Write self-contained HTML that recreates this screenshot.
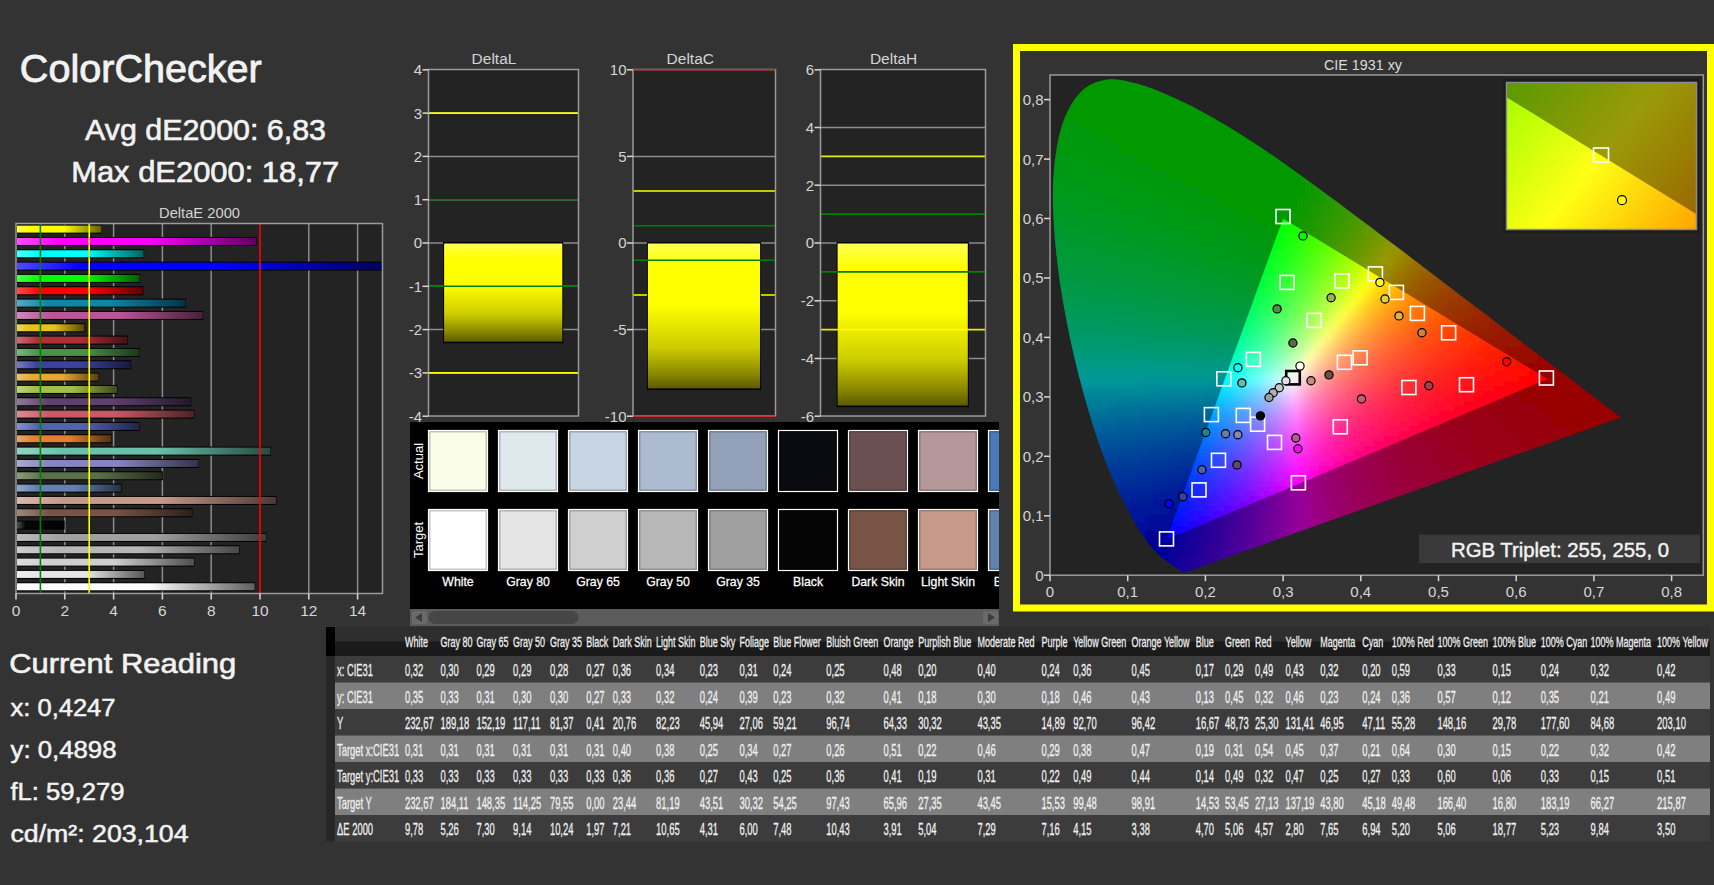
<!DOCTYPE html><html><head><meta charset="utf-8"><style>
html,body{margin:0;padding:0;background:#333333;overflow:hidden}
svg{display:block} text{font-family:"Liberation Sans", sans-serif}
</style></head><body>
<svg width="1714" height="885" viewBox="0 0 1714 885">
<rect width="1714" height="885" fill="#333333"/>
<text x="19.8" y="82.0" font-size="39.0" fill="#f2f2f2" textLength="242.0" lengthAdjust="spacingAndGlyphs" stroke="#f2f2f2" stroke-width="0.86">ColorChecker</text>
<text x="85.0" y="139.7" font-size="29.3" fill="#f2f2f2" textLength="241.0" lengthAdjust="spacingAndGlyphs" stroke="#f2f2f2" stroke-width="0.64">Avg dE2000: 6,83</text>
<text x="71.2" y="181.5" font-size="29.3" fill="#f2f2f2" textLength="268.0" lengthAdjust="spacingAndGlyphs" stroke="#f2f2f2" stroke-width="0.64">Max dE2000: 18,77</text>
<text x="199.5" y="217.5" font-size="15.5" fill="#d4d4d4" text-anchor="middle" textLength="81.0" lengthAdjust="spacingAndGlyphs">DeltaE 2000</text>
<rect x="16" y="223.5" width="366.5" height="370.0" fill="#232323"/>
<line x1="64.8" y1="223.5" x2="64.8" y2="593.5" stroke="#8c8c8c" stroke-width="1.5"/>
<line x1="113.6" y1="223.5" x2="113.6" y2="593.5" stroke="#8c8c8c" stroke-width="1.5"/>
<line x1="162.4" y1="223.5" x2="162.4" y2="593.5" stroke="#8c8c8c" stroke-width="1.5"/>
<line x1="211.2" y1="223.5" x2="211.2" y2="593.5" stroke="#8c8c8c" stroke-width="1.5"/>
<line x1="308.8" y1="223.5" x2="308.8" y2="593.5" stroke="#8c8c8c" stroke-width="1.5"/>
<line x1="357.6" y1="223.5" x2="357.6" y2="593.5" stroke="#8c8c8c" stroke-width="1.5"/>
<rect x="16" y="224.60" width="85.9" height="9" fill="#000"/>
<rect x="17" y="225.60" width="84.4" height="7" fill="url(#bg0)"/>
<rect x="16" y="236.93" width="240.6" height="9" fill="#000"/>
<rect x="17" y="237.93" width="239.1" height="7" fill="url(#bg1)"/>
<rect x="16" y="249.27" width="128.1" height="9" fill="#000"/>
<rect x="17" y="250.27" width="126.6" height="7" fill="url(#bg2)"/>
<rect x="16" y="261.60" width="366.5" height="9" fill="#000"/>
<rect x="17" y="262.60" width="365.0" height="7" fill="url(#bg3)"/>
<rect x="16" y="273.93" width="124.0" height="9" fill="#000"/>
<rect x="17" y="274.93" width="122.5" height="7" fill="url(#bg4)"/>
<rect x="16" y="286.27" width="127.4" height="9" fill="#000"/>
<rect x="17" y="287.27" width="125.9" height="7" fill="url(#bg5)"/>
<rect x="16" y="298.60" width="169.8" height="9" fill="#000"/>
<rect x="17" y="299.60" width="168.3" height="7" fill="url(#bg6)"/>
<rect x="16" y="310.93" width="187.2" height="9" fill="#000"/>
<rect x="17" y="311.93" width="185.7" height="7" fill="url(#bg7)"/>
<rect x="16" y="323.27" width="68.8" height="9" fill="#000"/>
<rect x="17" y="324.27" width="67.3" height="7" fill="url(#bg8)"/>
<rect x="16" y="335.60" width="112.0" height="9" fill="#000"/>
<rect x="17" y="336.60" width="110.5" height="7" fill="url(#bg9)"/>
<rect x="16" y="347.93" width="124.0" height="9" fill="#000"/>
<rect x="17" y="348.93" width="122.5" height="7" fill="url(#bg10)"/>
<rect x="16" y="360.27" width="115.2" height="9" fill="#000"/>
<rect x="17" y="361.27" width="113.7" height="7" fill="url(#bg11)"/>
<rect x="16" y="372.60" width="83.0" height="9" fill="#000"/>
<rect x="17" y="373.60" width="81.5" height="7" fill="url(#bg12)"/>
<rect x="16" y="384.93" width="101.8" height="9" fill="#000"/>
<rect x="17" y="385.93" width="100.3" height="7" fill="url(#bg13)"/>
<rect x="16" y="397.27" width="175.2" height="9" fill="#000"/>
<rect x="17" y="398.27" width="173.7" height="7" fill="url(#bg14)"/>
<rect x="16" y="409.60" width="178.4" height="9" fill="#000"/>
<rect x="17" y="410.60" width="176.9" height="7" fill="url(#bg15)"/>
<rect x="16" y="421.93" width="123.5" height="9" fill="#000"/>
<rect x="17" y="422.93" width="122.0" height="7" fill="url(#bg16)"/>
<rect x="16" y="434.27" width="95.9" height="9" fill="#000"/>
<rect x="17" y="435.27" width="94.4" height="7" fill="url(#bg17)"/>
<rect x="16" y="446.60" width="255.0" height="9" fill="#000"/>
<rect x="17" y="447.60" width="253.5" height="7" fill="url(#bg18)"/>
<rect x="16" y="458.93" width="183.0" height="9" fill="#000"/>
<rect x="17" y="459.93" width="181.5" height="7" fill="url(#bg19)"/>
<rect x="16" y="471.27" width="146.9" height="9" fill="#000"/>
<rect x="17" y="472.27" width="145.4" height="7" fill="url(#bg20)"/>
<rect x="16" y="483.60" width="105.7" height="9" fill="#000"/>
<rect x="17" y="484.60" width="104.2" height="7" fill="url(#bg21)"/>
<rect x="16" y="495.93" width="260.4" height="9" fill="#000"/>
<rect x="17" y="496.93" width="258.9" height="7" fill="url(#bg22)"/>
<rect x="16" y="508.27" width="176.4" height="9" fill="#000"/>
<rect x="17" y="509.27" width="174.9" height="7" fill="url(#bg23)"/>
<rect x="16" y="520.60" width="48.6" height="9" fill="#000"/>
<rect x="17" y="521.60" width="47.1" height="7" fill="url(#bg24)"/>
<rect x="16" y="532.93" width="250.4" height="9" fill="#000"/>
<rect x="17" y="533.93" width="248.9" height="7" fill="url(#bg25)"/>
<rect x="16" y="545.27" width="223.5" height="9" fill="#000"/>
<rect x="17" y="546.27" width="222.0" height="7" fill="url(#bg26)"/>
<rect x="16" y="557.60" width="178.6" height="9" fill="#000"/>
<rect x="17" y="558.60" width="177.1" height="7" fill="url(#bg27)"/>
<rect x="16" y="569.93" width="128.8" height="9" fill="#000"/>
<rect x="17" y="570.93" width="127.3" height="7" fill="url(#bg28)"/>
<rect x="16" y="582.27" width="239.1" height="9" fill="#000"/>
<rect x="17" y="583.27" width="237.6" height="7" fill="url(#bg29)"/>
<line x1="40.4" y1="223.5" x2="40.4" y2="593.5" stroke="#008000" stroke-width="1.6"/>
<line x1="89.2" y1="223.5" x2="89.2" y2="593.5" stroke="#ffff00" stroke-width="1.6"/>
<line x1="260.0" y1="223.5" x2="260.0" y2="593.5" stroke="#ff0000" stroke-width="1.6"/>
<rect x="16" y="223.5" width="366.5" height="370.0" fill="none" stroke="#9a9a9a" stroke-width="1.5"/>
<line x1="16.0" y1="593.5" x2="16.0" y2="599.5" stroke="#d8d8d8" stroke-width="1.5"/>
<text x="16.0" y="616.0" font-size="15.5" fill="#d6d6d6" text-anchor="middle">0</text>
<line x1="64.8" y1="593.5" x2="64.8" y2="599.5" stroke="#d8d8d8" stroke-width="1.5"/>
<text x="64.8" y="616.0" font-size="15.5" fill="#d6d6d6" text-anchor="middle">2</text>
<line x1="113.6" y1="593.5" x2="113.6" y2="599.5" stroke="#d8d8d8" stroke-width="1.5"/>
<text x="113.6" y="616.0" font-size="15.5" fill="#d6d6d6" text-anchor="middle">4</text>
<line x1="162.4" y1="593.5" x2="162.4" y2="599.5" stroke="#d8d8d8" stroke-width="1.5"/>
<text x="162.4" y="616.0" font-size="15.5" fill="#d6d6d6" text-anchor="middle">6</text>
<line x1="211.2" y1="593.5" x2="211.2" y2="599.5" stroke="#d8d8d8" stroke-width="1.5"/>
<text x="211.2" y="616.0" font-size="15.5" fill="#d6d6d6" text-anchor="middle">8</text>
<line x1="260.0" y1="593.5" x2="260.0" y2="599.5" stroke="#d8d8d8" stroke-width="1.5"/>
<text x="260.0" y="616.0" font-size="15.5" fill="#d6d6d6" text-anchor="middle">10</text>
<line x1="308.8" y1="593.5" x2="308.8" y2="599.5" stroke="#d8d8d8" stroke-width="1.5"/>
<text x="308.8" y="616.0" font-size="15.5" fill="#d6d6d6" text-anchor="middle">12</text>
<line x1="357.6" y1="593.5" x2="357.6" y2="599.5" stroke="#d8d8d8" stroke-width="1.5"/>
<text x="357.6" y="616.0" font-size="15.5" fill="#d6d6d6" text-anchor="middle">14</text>
<rect x="428.5" y="69.5" width="150.0" height="346.5" fill="#232323"/>
<text x="494.0" y="64.0" font-size="15.5" fill="#d4d4d4" text-anchor="middle">DeltaL</text>
<line x1="428.5" y1="113.1" x2="578.5" y2="113.1" stroke="#8c8c8c" stroke-width="1.5"/>
<line x1="428.5" y1="156.4" x2="578.5" y2="156.4" stroke="#8c8c8c" stroke-width="1.5"/>
<line x1="428.5" y1="199.7" x2="578.5" y2="199.7" stroke="#8c8c8c" stroke-width="1.5"/>
<line x1="428.5" y1="243.0" x2="578.5" y2="243.0" stroke="#8c8c8c" stroke-width="1.5"/>
<line x1="428.5" y1="286.3" x2="578.5" y2="286.3" stroke="#8c8c8c" stroke-width="1.5"/>
<line x1="428.5" y1="329.6" x2="578.5" y2="329.6" stroke="#8c8c8c" stroke-width="1.5"/>
<line x1="428.5" y1="372.9" x2="578.5" y2="372.9" stroke="#8c8c8c" stroke-width="1.5"/>
<line x1="428.5" y1="113.1" x2="578.5" y2="113.1" stroke="#ffff00" stroke-width="1.6"/>
<line x1="428.5" y1="372.9" x2="578.5" y2="372.9" stroke="#ffff00" stroke-width="1.6"/>
<rect x="443.1" y="242.0" width="120.2" height="101.2" fill="#000"/>
<rect x="444.1" y="243.5" width="118.2" height="98.2" fill="url(#dbar)"/>
<line x1="428.5" y1="199.7" x2="578.5" y2="199.7" stroke="#008000" stroke-width="1.6"/>
<line x1="428.5" y1="286.3" x2="578.5" y2="286.3" stroke="#008000" stroke-width="1.6"/>
<rect x="428.5" y="69.5" width="150.0" height="346.5" fill="none" stroke="#9a9a9a" stroke-width="1.5"/>
<line x1="422.5" y1="69.8" x2="428.5" y2="69.8" stroke="#d8d8d8" stroke-width="1.5"/>
<text x="422.0" y="75.2" font-size="15.0" fill="#d6d6d6" text-anchor="end">4</text>
<line x1="422.5" y1="113.1" x2="428.5" y2="113.1" stroke="#d8d8d8" stroke-width="1.5"/>
<text x="422.0" y="118.5" font-size="15.0" fill="#d6d6d6" text-anchor="end">3</text>
<line x1="422.5" y1="156.4" x2="428.5" y2="156.4" stroke="#d8d8d8" stroke-width="1.5"/>
<text x="422.0" y="161.8" font-size="15.0" fill="#d6d6d6" text-anchor="end">2</text>
<line x1="422.5" y1="199.7" x2="428.5" y2="199.7" stroke="#d8d8d8" stroke-width="1.5"/>
<text x="422.0" y="205.1" font-size="15.0" fill="#d6d6d6" text-anchor="end">1</text>
<line x1="422.5" y1="243.0" x2="428.5" y2="243.0" stroke="#d8d8d8" stroke-width="1.5"/>
<text x="422.0" y="248.4" font-size="15.0" fill="#d6d6d6" text-anchor="end">0</text>
<line x1="422.5" y1="286.3" x2="428.5" y2="286.3" stroke="#d8d8d8" stroke-width="1.5"/>
<text x="422.0" y="291.7" font-size="15.0" fill="#d6d6d6" text-anchor="end">-1</text>
<line x1="422.5" y1="329.6" x2="428.5" y2="329.6" stroke="#d8d8d8" stroke-width="1.5"/>
<text x="422.0" y="335.0" font-size="15.0" fill="#d6d6d6" text-anchor="end">-2</text>
<line x1="422.5" y1="372.9" x2="428.5" y2="372.9" stroke="#d8d8d8" stroke-width="1.5"/>
<text x="422.0" y="378.3" font-size="15.0" fill="#d6d6d6" text-anchor="end">-3</text>
<line x1="422.5" y1="416.2" x2="428.5" y2="416.2" stroke="#d8d8d8" stroke-width="1.5"/>
<text x="422.0" y="421.6" font-size="15.0" fill="#d6d6d6" text-anchor="end">-4</text>
<rect x="633" y="69.5" width="142.5" height="346.5" fill="#232323"/>
<text x="690.3" y="64.0" font-size="15.5" fill="#d4d4d4" text-anchor="middle">DeltaC</text>
<line x1="633" y1="156.4" x2="775.5" y2="156.4" stroke="#8c8c8c" stroke-width="1.5"/>
<line x1="633" y1="243.0" x2="775.5" y2="243.0" stroke="#8c8c8c" stroke-width="1.5"/>
<line x1="633" y1="329.6" x2="775.5" y2="329.6" stroke="#8c8c8c" stroke-width="1.5"/>
<line x1="633" y1="191.0" x2="775.5" y2="191.0" stroke="#ffff00" stroke-width="1.6"/>
<line x1="633" y1="295.0" x2="775.5" y2="295.0" stroke="#ffff00" stroke-width="1.6"/>
<rect x="646.9" y="242.0" width="114.2" height="147.9" fill="#000"/>
<rect x="647.9" y="243.5" width="112.2" height="144.9" fill="url(#dbar)"/>
<line x1="633" y1="225.7" x2="775.5" y2="225.7" stroke="#008000" stroke-width="1.6"/>
<line x1="633" y1="260.3" x2="775.5" y2="260.3" stroke="#008000" stroke-width="1.6"/>
<rect x="633" y="69.5" width="142.5" height="346.5" fill="none" stroke="#9a9a9a" stroke-width="1.5"/>
<line x1="633" y1="69.8" x2="775.5" y2="69.8" stroke="#c83030" stroke-width="1.6"/>
<line x1="633" y1="416.2" x2="775.5" y2="416.2" stroke="#c83030" stroke-width="1.6"/>
<line x1="627" y1="69.8" x2="633" y2="69.8" stroke="#d8d8d8" stroke-width="1.5"/>
<text x="626.5" y="75.2" font-size="15.0" fill="#d6d6d6" text-anchor="end">10</text>
<line x1="627" y1="156.4" x2="633" y2="156.4" stroke="#d8d8d8" stroke-width="1.5"/>
<text x="626.5" y="161.8" font-size="15.0" fill="#d6d6d6" text-anchor="end">5</text>
<line x1="627" y1="243.0" x2="633" y2="243.0" stroke="#d8d8d8" stroke-width="1.5"/>
<text x="626.5" y="248.4" font-size="15.0" fill="#d6d6d6" text-anchor="end">0</text>
<line x1="627" y1="329.6" x2="633" y2="329.6" stroke="#d8d8d8" stroke-width="1.5"/>
<text x="626.5" y="335.0" font-size="15.0" fill="#d6d6d6" text-anchor="end">-5</text>
<line x1="627" y1="416.2" x2="633" y2="416.2" stroke="#d8d8d8" stroke-width="1.5"/>
<text x="626.5" y="421.6" font-size="15.0" fill="#d6d6d6" text-anchor="end">-10</text>
<rect x="820.5" y="69.5" width="165.0" height="346.5" fill="#232323"/>
<text x="893.6" y="64.0" font-size="15.5" fill="#d4d4d4" text-anchor="middle">DeltaH</text>
<line x1="820.5" y1="127.5" x2="985.5" y2="127.5" stroke="#8c8c8c" stroke-width="1.5"/>
<line x1="820.5" y1="185.2" x2="985.5" y2="185.2" stroke="#8c8c8c" stroke-width="1.5"/>
<line x1="820.5" y1="243.0" x2="985.5" y2="243.0" stroke="#8c8c8c" stroke-width="1.5"/>
<line x1="820.5" y1="300.8" x2="985.5" y2="300.8" stroke="#8c8c8c" stroke-width="1.5"/>
<line x1="820.5" y1="358.5" x2="985.5" y2="358.5" stroke="#8c8c8c" stroke-width="1.5"/>
<rect x="836.6" y="242.0" width="132.2" height="165.1" fill="#000"/>
<rect x="837.6" y="243.5" width="130.2" height="162.1" fill="url(#dbar)"/>
<line x1="820.5" y1="156.4" x2="985.5" y2="156.4" stroke="#ffff00" stroke-width="1.6" opacity="0.9"/>
<line x1="820.5" y1="329.6" x2="985.5" y2="329.6" stroke="#ffff00" stroke-width="1.6" opacity="0.9"/>
<line x1="820.5" y1="214.1" x2="985.5" y2="214.1" stroke="#008000" stroke-width="1.6"/>
<line x1="820.5" y1="271.9" x2="985.5" y2="271.9" stroke="#008000" stroke-width="1.6"/>
<rect x="820.5" y="69.5" width="165.0" height="346.5" fill="none" stroke="#9a9a9a" stroke-width="1.5"/>
<line x1="814.5" y1="69.8" x2="820.5" y2="69.8" stroke="#d8d8d8" stroke-width="1.5"/>
<text x="814.0" y="75.2" font-size="15.0" fill="#d6d6d6" text-anchor="end">6</text>
<line x1="814.5" y1="127.5" x2="820.5" y2="127.5" stroke="#d8d8d8" stroke-width="1.5"/>
<text x="814.0" y="132.9" font-size="15.0" fill="#d6d6d6" text-anchor="end">4</text>
<line x1="814.5" y1="185.2" x2="820.5" y2="185.2" stroke="#d8d8d8" stroke-width="1.5"/>
<text x="814.0" y="190.7" font-size="15.0" fill="#d6d6d6" text-anchor="end">2</text>
<line x1="814.5" y1="243.0" x2="820.5" y2="243.0" stroke="#d8d8d8" stroke-width="1.5"/>
<text x="814.0" y="248.4" font-size="15.0" fill="#d6d6d6" text-anchor="end">0</text>
<line x1="814.5" y1="300.8" x2="820.5" y2="300.8" stroke="#d8d8d8" stroke-width="1.5"/>
<text x="814.0" y="306.1" font-size="15.0" fill="#d6d6d6" text-anchor="end">-2</text>
<line x1="814.5" y1="358.5" x2="820.5" y2="358.5" stroke="#d8d8d8" stroke-width="1.5"/>
<text x="814.0" y="363.9" font-size="15.0" fill="#d6d6d6" text-anchor="end">-4</text>
<line x1="814.5" y1="416.2" x2="820.5" y2="416.2" stroke="#d8d8d8" stroke-width="1.5"/>
<text x="814.0" y="421.6" font-size="15.0" fill="#d6d6d6" text-anchor="end">-6</text>
<rect x="410" y="422" width="589" height="187" fill="#000"/>
<g clip-path="url(#pclip)">
<rect x="428.5" y="430.5" width="59" height="61" fill="#fafee9" stroke="#ffffff" stroke-width="1.2"/>
<rect x="429.8" y="431.8" width="56.4" height="58.4" fill="none" stroke="#000" stroke-opacity="0.28" stroke-width="1.2"/>
<rect x="428.5" y="509.5" width="59" height="61" fill="#ffffff" stroke="#ffffff" stroke-width="1.2"/>
<rect x="429.8" y="510.8" width="56.4" height="58.4" fill="none" stroke="#000" stroke-opacity="0.28" stroke-width="1.2"/>
<text transform="translate(458,585.8) scale(0.975,1)" font-size="12.6" fill="#ffffff" stroke="#ffffff" stroke-width="0.25" text-anchor="middle">White</text>
<rect x="498.5" y="430.5" width="59" height="61" fill="#dfe9ec" stroke="#ffffff" stroke-width="1.2"/>
<rect x="499.8" y="431.8" width="56.4" height="58.4" fill="none" stroke="#000" stroke-opacity="0.28" stroke-width="1.2"/>
<rect x="498.5" y="509.5" width="59" height="61" fill="#e4e4e4" stroke="#ffffff" stroke-width="1.2"/>
<rect x="499.8" y="510.8" width="56.4" height="58.4" fill="none" stroke="#000" stroke-opacity="0.28" stroke-width="1.2"/>
<text transform="translate(528,585.8) scale(0.975,1)" font-size="12.6" fill="#ffffff" stroke="#ffffff" stroke-width="0.25" text-anchor="middle">Gray 80</text>
<rect x="568.5" y="430.5" width="59" height="61" fill="#c8d5e2" stroke="#ffffff" stroke-width="1.2"/>
<rect x="569.8" y="431.8" width="56.4" height="58.4" fill="none" stroke="#000" stroke-opacity="0.28" stroke-width="1.2"/>
<rect x="568.5" y="509.5" width="59" height="61" fill="#cfcfcf" stroke="#ffffff" stroke-width="1.2"/>
<rect x="569.8" y="510.8" width="56.4" height="58.4" fill="none" stroke="#000" stroke-opacity="0.28" stroke-width="1.2"/>
<text transform="translate(598,585.8) scale(0.975,1)" font-size="12.6" fill="#ffffff" stroke="#ffffff" stroke-width="0.25" text-anchor="middle">Gray 65</text>
<rect x="638.5" y="430.5" width="59" height="61" fill="#adbbd1" stroke="#ffffff" stroke-width="1.2"/>
<rect x="639.8" y="431.8" width="56.4" height="58.4" fill="none" stroke="#000" stroke-opacity="0.28" stroke-width="1.2"/>
<rect x="638.5" y="509.5" width="59" height="61" fill="#b8b8b8" stroke="#ffffff" stroke-width="1.2"/>
<rect x="639.8" y="510.8" width="56.4" height="58.4" fill="none" stroke="#000" stroke-opacity="0.28" stroke-width="1.2"/>
<text transform="translate(668,585.8) scale(0.975,1)" font-size="12.6" fill="#ffffff" stroke="#ffffff" stroke-width="0.25" text-anchor="middle">Gray 50</text>
<rect x="708.5" y="430.5" width="59" height="61" fill="#93a1b8" stroke="#ffffff" stroke-width="1.2"/>
<rect x="709.8" y="431.8" width="56.4" height="58.4" fill="none" stroke="#000" stroke-opacity="0.28" stroke-width="1.2"/>
<rect x="708.5" y="509.5" width="59" height="61" fill="#a0a0a0" stroke="#ffffff" stroke-width="1.2"/>
<rect x="709.8" y="510.8" width="56.4" height="58.4" fill="none" stroke="#000" stroke-opacity="0.28" stroke-width="1.2"/>
<text transform="translate(738,585.8) scale(0.975,1)" font-size="12.6" fill="#ffffff" stroke="#ffffff" stroke-width="0.25" text-anchor="middle">Gray 35</text>
<rect x="778.5" y="430.5" width="59" height="61" fill="#0a0b10" stroke="#ffffff" stroke-width="1.2"/>
<rect x="779.8" y="431.8" width="56.4" height="58.4" fill="none" stroke="#000" stroke-opacity="0.28" stroke-width="1.2"/>
<rect x="778.5" y="509.5" width="59" height="61" fill="#050505" stroke="#ffffff" stroke-width="1.2"/>
<rect x="779.8" y="510.8" width="56.4" height="58.4" fill="none" stroke="#000" stroke-opacity="0.28" stroke-width="1.2"/>
<text transform="translate(808,585.8) scale(0.975,1)" font-size="12.6" fill="#ffffff" stroke="#ffffff" stroke-width="0.25" text-anchor="middle">Black</text>
<rect x="848.5" y="430.5" width="59" height="61" fill="#6a5050" stroke="#ffffff" stroke-width="1.2"/>
<rect x="849.8" y="431.8" width="56.4" height="58.4" fill="none" stroke="#000" stroke-opacity="0.28" stroke-width="1.2"/>
<rect x="848.5" y="509.5" width="59" height="61" fill="#785446" stroke="#ffffff" stroke-width="1.2"/>
<rect x="849.8" y="510.8" width="56.4" height="58.4" fill="none" stroke="#000" stroke-opacity="0.28" stroke-width="1.2"/>
<text transform="translate(878,585.8) scale(0.975,1)" font-size="12.6" fill="#ffffff" stroke="#ffffff" stroke-width="0.25" text-anchor="middle">Dark Skin</text>
<rect x="918.5" y="430.5" width="59" height="61" fill="#b5989a" stroke="#ffffff" stroke-width="1.2"/>
<rect x="919.8" y="431.8" width="56.4" height="58.4" fill="none" stroke="#000" stroke-opacity="0.28" stroke-width="1.2"/>
<rect x="918.5" y="509.5" width="59" height="61" fill="#c8998a" stroke="#ffffff" stroke-width="1.2"/>
<rect x="919.8" y="510.8" width="56.4" height="58.4" fill="none" stroke="#000" stroke-opacity="0.28" stroke-width="1.2"/>
<text transform="translate(948,585.8) scale(0.975,1)" font-size="12.6" fill="#ffffff" stroke="#ffffff" stroke-width="0.25" text-anchor="middle">Light Skin</text>
<rect x="988.5" y="430.5" width="59" height="61" fill="#4a7ab8" stroke="#ffffff" stroke-width="1.2"/>
<rect x="989.8" y="431.8" width="56.4" height="58.4" fill="none" stroke="#000" stroke-opacity="0.28" stroke-width="1.2"/>
<rect x="988.5" y="509.5" width="59" height="61" fill="#6282b0" stroke="#ffffff" stroke-width="1.2"/>
<rect x="989.8" y="510.8" width="56.4" height="58.4" fill="none" stroke="#000" stroke-opacity="0.28" stroke-width="1.2"/>
<text transform="translate(1018,585.8) scale(0.975,1)" font-size="12.6" fill="#ffffff" stroke="#ffffff" stroke-width="0.25" text-anchor="middle">Blue Sky</text>
</g>
<text x="0.0" y="0.0" font-size="13.0" fill="#ffffff" text-anchor="middle" transform="translate(423,461) rotate(-90)">Actual</text>
<text x="0.0" y="0.0" font-size="13.0" fill="#ffffff" text-anchor="middle" transform="translate(422.8,540) rotate(-90)">Target</text>
<rect x="410" y="609" width="589" height="17" fill="#5c5c5c"/>
<rect x="412" y="611" width="15" height="13" rx="2" fill="#6a6a6a"/>
<path d="M415 617.5 L422 613 L422 622 Z" fill="#3c3c3c"/>
<rect x="983" y="611" width="15" height="13" rx="2" fill="#6a6a6a"/>
<path d="M995 617.5 L988 613 L988 622 Z" fill="#3c3c3c"/>
<rect x="428.5" y="611" width="150" height="13" rx="6.5" fill="#464646"/>
<rect x="1016.5" y="47.5" width="694" height="560.5" fill="none" stroke="#ffff00" stroke-width="7"/>
<text x="1363.0" y="69.9" font-size="15.5" fill="#dcdcdc" text-anchor="middle" textLength="78.0" lengthAdjust="spacingAndGlyphs">CIE 1931 xy</text>
<rect x="1050" y="75" width="653.3" height="500.20000000000005" fill="#232323"/>
<g clip-path="url(#hs)"><g filter="url(#blur)"><path fill="#009900" d="M1097 67h8v8h-8zM1105 67h8v8h-8zM1113 67h8v8h-8zM1121 67h8v8h-8zM1081 75h8v8h-8zM1089 75h8v8h-8zM1097 75h8v8h-8zM1105 75h8v8h-8zM1113 75h8v8h-8zM1121 75h8v8h-8zM1129 75h8v8h-8zM1137 75h8v8h-8zM1145 75h8v8h-8zM1153 75h8v8h-8zM1073 83h8v8h-8zM1081 83h8v8h-8zM1089 83h8v8h-8zM1097 83h8v8h-8zM1105 83h8v8h-8zM1113 83h8v8h-8zM1121 83h8v8h-8zM1129 83h8v8h-8zM1137 83h8v8h-8zM1145 83h8v8h-8zM1153 83h8v8h-8zM1161 83h8v8h-8zM1169 83h8v8h-8zM1065 91h8v8h-8zM1073 91h8v8h-8zM1081 91h8v8h-8zM1089 91h8v8h-8zM1097 91h8v8h-8zM1105 91h8v8h-8zM1113 91h8v8h-8zM1121 91h8v8h-8zM1129 91h8v8h-8zM1137 91h8v8h-8zM1145 91h8v8h-8zM1153 91h8v8h-8zM1161 91h8v8h-8zM1169 91h8v8h-8zM1177 91h8v8h-8zM1185 91h8v8h-8zM1081 99h8v8h-8zM1089 99h8v8h-8zM1097 99h8v8h-8zM1105 99h8v8h-8zM1113 99h8v8h-8zM1121 99h8v8h-8zM1129 99h8v8h-8zM1137 99h8v8h-8zM1145 99h8v8h-8zM1153 99h8v8h-8zM1161 99h8v8h-8zM1169 99h8v8h-8zM1177 99h8v8h-8zM1185 99h8v8h-8zM1193 99h8v8h-8zM1201 99h8v8h-8zM1097 107h8v8h-8zM1105 107h8v8h-8zM1113 107h8v8h-8zM1121 107h8v8h-8zM1129 107h8v8h-8zM1137 107h8v8h-8zM1145 107h8v8h-8zM1153 107h8v8h-8zM1161 107h8v8h-8zM1169 107h8v8h-8zM1177 107h8v8h-8zM1185 107h8v8h-8zM1193 107h8v8h-8zM1201 107h8v8h-8zM1209 107h8v8h-8zM1217 107h8v8h-8zM1105 115h8v8h-8zM1113 115h8v8h-8zM1121 115h8v8h-8zM1129 115h8v8h-8zM1137 115h8v8h-8zM1145 115h8v8h-8zM1153 115h8v8h-8zM1161 115h8v8h-8zM1169 115h8v8h-8zM1177 115h8v8h-8zM1185 115h8v8h-8zM1193 115h8v8h-8zM1201 115h8v8h-8zM1209 115h8v8h-8zM1217 115h8v8h-8zM1225 115h8v8h-8zM1233 115h8v8h-8zM1121 123h8v8h-8zM1129 123h8v8h-8zM1137 123h8v8h-8zM1145 123h8v8h-8zM1153 123h8v8h-8zM1161 123h8v8h-8zM1169 123h8v8h-8zM1177 123h8v8h-8zM1185 123h8v8h-8zM1193 123h8v8h-8zM1201 123h8v8h-8zM1209 123h8v8h-8zM1217 123h8v8h-8zM1225 123h8v8h-8zM1233 123h8v8h-8zM1241 123h8v8h-8zM1137 131h8v8h-8zM1145 131h8v8h-8zM1153 131h8v8h-8zM1161 131h8v8h-8zM1169 131h8v8h-8zM1177 131h8v8h-8zM1185 131h8v8h-8zM1193 131h8v8h-8zM1201 131h8v8h-8zM1209 131h8v8h-8zM1217 131h8v8h-8zM1225 131h8v8h-8zM1233 131h8v8h-8zM1241 131h8v8h-8zM1249 131h8v8h-8zM1257 131h8v8h-8zM1153 139h8v8h-8zM1161 139h8v8h-8zM1169 139h8v8h-8zM1177 139h8v8h-8zM1185 139h8v8h-8zM1193 139h8v8h-8zM1201 139h8v8h-8zM1209 139h8v8h-8zM1217 139h8v8h-8zM1225 139h8v8h-8zM1233 139h8v8h-8zM1241 139h8v8h-8zM1249 139h8v8h-8zM1257 139h8v8h-8zM1265 139h8v8h-8zM1161 147h8v8h-8zM1169 147h8v8h-8zM1177 147h8v8h-8zM1185 147h8v8h-8zM1193 147h8v8h-8zM1201 147h8v8h-8zM1209 147h8v8h-8zM1217 147h8v8h-8zM1225 147h8v8h-8zM1233 147h8v8h-8zM1241 147h8v8h-8zM1249 147h8v8h-8zM1257 147h8v8h-8zM1265 147h8v8h-8zM1273 147h8v8h-8zM1281 147h8v8h-8zM1177 155h8v8h-8zM1185 155h8v8h-8zM1193 155h8v8h-8zM1201 155h8v8h-8zM1209 155h8v8h-8zM1217 155h8v8h-8zM1225 155h8v8h-8zM1233 155h8v8h-8zM1241 155h8v8h-8zM1249 155h8v8h-8zM1257 155h8v8h-8zM1265 155h8v8h-8zM1273 155h8v8h-8zM1281 155h8v8h-8zM1289 155h8v8h-8zM1193 163h8v8h-8zM1201 163h8v8h-8zM1209 163h8v8h-8zM1217 163h8v8h-8zM1225 163h8v8h-8zM1233 163h8v8h-8zM1241 163h8v8h-8zM1249 163h8v8h-8zM1257 163h8v8h-8zM1265 163h8v8h-8zM1273 163h8v8h-8zM1281 163h8v8h-8zM1289 163h8v8h-8zM1297 163h8v8h-8zM1201 171h8v8h-8zM1209 171h8v8h-8zM1217 171h8v8h-8zM1225 171h8v8h-8zM1233 171h8v8h-8zM1241 171h8v8h-8zM1249 171h8v8h-8zM1257 171h8v8h-8zM1265 171h8v8h-8zM1273 171h8v8h-8zM1281 171h8v8h-8zM1289 171h8v8h-8zM1217 179h8v8h-8zM1225 179h8v8h-8zM1233 179h8v8h-8zM1241 179h8v8h-8zM1249 179h8v8h-8zM1257 179h8v8h-8zM1265 179h8v8h-8zM1273 179h8v8h-8zM1281 179h8v8h-8zM1289 179h8v8h-8zM1233 187h8v8h-8zM1241 187h8v8h-8zM1249 187h8v8h-8zM1257 187h8v8h-8zM1265 187h8v8h-8zM1273 187h8v8h-8zM1281 187h8v8h-8zM1289 187h8v8h-8zM1241 195h8v8h-8zM1249 195h8v8h-8zM1257 195h8v8h-8zM1265 195h8v8h-8zM1273 195h8v8h-8zM1281 195h8v8h-8zM1257 203h8v8h-8zM1265 203h8v8h-8zM1273 203h8v8h-8zM1281 203h8v8h-8zM1273 211h8v8h-8zM1281 211h8v8h-8z"/><path fill="#009903" d="M1065 99h8v8h-8zM1073 99h8v8h-8zM1073 107h8v8h-8zM1081 107h8v8h-8zM1089 107h8v8h-8zM1089 115h8v8h-8zM1097 115h8v8h-8zM1105 123h8v8h-8zM1113 123h8v8h-8zM1113 131h8v8h-8zM1121 131h8v8h-8zM1129 131h8v8h-8zM1129 139h8v8h-8zM1137 139h8v8h-8zM1145 139h8v8h-8zM1145 147h8v8h-8zM1153 147h8v8h-8zM1161 155h8v8h-8zM1169 155h8v8h-8zM1169 163h8v8h-8zM1177 163h8v8h-8zM1185 163h8v8h-8zM1185 171h8v8h-8zM1193 171h8v8h-8zM1201 179h8v8h-8zM1209 179h8v8h-8zM1217 187h8v8h-8zM1225 187h8v8h-8zM1225 195h8v8h-8zM1233 195h8v8h-8zM1241 203h8v8h-8zM1249 203h8v8h-8zM1257 211h8v8h-8zM1265 211h8v8h-8zM1273 219h8v8h-8z"/><path fill="#009906" d="M1057 107h8v8h-8zM1065 107h8v8h-8zM1065 115h8v8h-8zM1073 115h8v8h-8zM1081 115h8v8h-8zM1081 123h8v8h-8zM1089 123h8v8h-8zM1097 123h8v8h-8zM1097 131h8v8h-8zM1105 131h8v8h-8zM1113 139h8v8h-8zM1121 139h8v8h-8zM1121 147h8v8h-8zM1129 147h8v8h-8zM1137 147h8v8h-8zM1137 155h8v8h-8zM1145 155h8v8h-8zM1153 155h8v8h-8zM1153 163h8v8h-8zM1161 163h8v8h-8zM1169 171h8v8h-8zM1177 171h8v8h-8zM1185 179h8v8h-8zM1193 179h8v8h-8zM1201 187h8v8h-8zM1209 187h8v8h-8zM1217 195h8v8h-8zM1225 203h8v8h-8zM1233 203h8v8h-8zM1241 211h8v8h-8zM1249 211h8v8h-8zM1257 219h8v8h-8zM1265 219h8v8h-8zM1273 227h8v8h-8z"/><path fill="#009909" d="M1049 115h8v8h-8zM1057 115h8v8h-8zM1057 123h8v8h-8zM1065 123h8v8h-8zM1073 123h8v8h-8zM1073 131h8v8h-8zM1081 131h8v8h-8zM1089 131h8v8h-8zM1089 139h8v8h-8zM1097 139h8v8h-8zM1105 139h8v8h-8zM1105 147h8v8h-8zM1113 147h8v8h-8zM1121 155h8v8h-8zM1129 155h8v8h-8zM1137 163h8v8h-8zM1145 163h8v8h-8zM1153 171h8v8h-8zM1161 171h8v8h-8zM1169 179h8v8h-8zM1177 179h8v8h-8zM1185 187h8v8h-8zM1193 187h8v8h-8zM1201 195h8v8h-8zM1209 195h8v8h-8zM1209 203h8v8h-8zM1217 203h8v8h-8zM1225 211h8v8h-8zM1233 211h8v8h-8zM1241 219h8v8h-8zM1249 219h8v8h-8zM1257 227h8v8h-8zM1265 227h8v8h-8zM1273 235h8v8h-8z"/><path fill="#00990c" d="M1049 123h8v8h-8zM1049 131h8v8h-8zM1057 131h8v8h-8zM1065 131h8v8h-8zM1065 139h8v8h-8zM1073 139h8v8h-8zM1081 139h8v8h-8zM1081 147h8v8h-8zM1089 147h8v8h-8zM1097 147h8v8h-8zM1097 155h8v8h-8zM1105 155h8v8h-8zM1113 155h8v8h-8zM1113 163h8v8h-8zM1121 163h8v8h-8zM1129 163h8v8h-8zM1129 171h8v8h-8zM1137 171h8v8h-8zM1145 171h8v8h-8zM1145 179h8v8h-8zM1153 179h8v8h-8zM1161 179h8v8h-8zM1161 187h8v8h-8zM1169 187h8v8h-8zM1177 187h8v8h-8zM1177 195h8v8h-8zM1185 195h8v8h-8zM1193 195h8v8h-8zM1193 203h8v8h-8zM1201 203h8v8h-8zM1209 211h8v8h-8zM1217 211h8v8h-8zM1233 219h8v8h-8zM1249 227h8v8h-8zM1265 235h8v8h-8z"/><path fill="#00990f" d="M1049 139h8v8h-8zM1057 139h8v8h-8zM1057 147h8v8h-8zM1065 147h8v8h-8zM1073 147h8v8h-8zM1081 155h8v8h-8zM1089 155h8v8h-8zM1097 163h8v8h-8zM1105 163h8v8h-8zM1113 171h8v8h-8zM1121 171h8v8h-8zM1129 179h8v8h-8zM1137 179h8v8h-8zM1145 187h8v8h-8zM1153 187h8v8h-8zM1161 195h8v8h-8zM1169 195h8v8h-8zM1177 203h8v8h-8zM1185 203h8v8h-8zM1193 211h8v8h-8zM1201 211h8v8h-8zM1217 219h8v8h-8zM1225 219h8v8h-8zM1233 227h8v8h-8zM1241 227h8v8h-8zM1249 235h8v8h-8zM1257 235h8v8h-8zM1265 243h8v8h-8z"/><path fill="#009912" d="M1049 147h8v8h-8zM1057 155h8v8h-8zM1065 155h8v8h-8zM1073 155h8v8h-8zM1073 163h8v8h-8zM1081 163h8v8h-8zM1089 163h8v8h-8zM1089 171h8v8h-8zM1097 171h8v8h-8zM1105 171h8v8h-8zM1105 179h8v8h-8zM1113 179h8v8h-8zM1121 179h8v8h-8zM1129 187h8v8h-8zM1137 187h8v8h-8zM1145 195h8v8h-8zM1153 195h8v8h-8zM1161 203h8v8h-8zM1169 203h8v8h-8zM1177 211h8v8h-8zM1185 211h8v8h-8zM1201 219h8v8h-8zM1209 219h8v8h-8zM1217 227h8v8h-8zM1225 227h8v8h-8zM1233 235h8v8h-8zM1241 235h8v8h-8zM1249 243h8v8h-8zM1257 243h8v8h-8z"/><path fill="#009915" d="M1041 155h8v8h-8zM1049 155h8v8h-8zM1049 163h8v8h-8zM1057 163h8v8h-8zM1065 163h8v8h-8zM1065 171h8v8h-8zM1073 171h8v8h-8zM1081 171h8v8h-8zM1089 179h8v8h-8zM1097 179h8v8h-8zM1105 187h8v8h-8zM1113 187h8v8h-8zM1121 187h8v8h-8zM1121 195h8v8h-8zM1129 195h8v8h-8zM1137 195h8v8h-8zM1145 203h8v8h-8zM1153 203h8v8h-8zM1161 211h8v8h-8zM1169 211h8v8h-8zM1185 219h8v8h-8zM1193 219h8v8h-8zM1201 227h8v8h-8zM1209 227h8v8h-8zM1217 235h8v8h-8zM1225 235h8v8h-8zM1241 243h8v8h-8zM1257 251h8v8h-8zM1265 251h8v8h-8z"/><path fill="#009918" d="M1041 163h8v8h-8zM1049 171h8v8h-8zM1057 171h8v8h-8zM1065 179h8v8h-8zM1073 179h8v8h-8zM1081 179h8v8h-8zM1089 187h8v8h-8zM1097 187h8v8h-8zM1105 195h8v8h-8zM1113 195h8v8h-8zM1121 203h8v8h-8zM1129 203h8v8h-8zM1137 203h8v8h-8zM1145 211h8v8h-8zM1153 211h8v8h-8zM1161 219h8v8h-8zM1169 219h8v8h-8zM1177 219h8v8h-8zM1185 227h8v8h-8zM1193 227h8v8h-8zM1201 235h8v8h-8zM1209 235h8v8h-8zM1225 243h8v8h-8zM1233 243h8v8h-8zM1241 251h8v8h-8zM1249 251h8v8h-8z"/><path fill="#069900" d="M1305 163h8v8h-8zM1297 187h8v8h-8zM1289 203h8v8h-8z"/><path fill="#00991b" d="M1041 171h8v8h-8zM1041 179h8v8h-8zM1049 179h8v8h-8zM1057 179h8v8h-8zM1065 187h8v8h-8zM1073 187h8v8h-8zM1081 187h8v8h-8zM1081 195h8v8h-8zM1089 195h8v8h-8zM1097 195h8v8h-8zM1105 203h8v8h-8zM1113 203h8v8h-8zM1121 211h8v8h-8zM1129 211h8v8h-8zM1137 211h8v8h-8zM1145 219h8v8h-8zM1153 219h8v8h-8zM1169 227h8v8h-8zM1177 227h8v8h-8zM1185 235h8v8h-8zM1193 235h8v8h-8zM1209 243h8v8h-8zM1217 243h8v8h-8zM1225 251h8v8h-8zM1233 251h8v8h-8zM1249 259h8v8h-8zM1257 259h8v8h-8z"/><path fill="#039900" d="M1297 171h8v8h-8zM1297 179h8v8h-8zM1289 195h8v8h-8zM1281 219h8v8h-8z"/><path fill="#099900" d="M1305 171h8v8h-8zM1305 179h8v8h-8zM1297 195h8v8h-8zM1289 211h8v8h-8zM1289 219h8v8h-8z"/><path fill="#0f9900" d="M1313 171h8v8h-8zM1305 195h8v8h-8zM1297 211h8v8h-8z"/><path fill="#129900" d="M1313 179h8v8h-8zM1305 203h8v8h-8zM1297 219h8v8h-8z"/><path fill="#189900" d="M1321 179h8v8h-8zM1313 195h8v8h-8z"/><path fill="#00991e" d="M1041 187h8v8h-8zM1049 187h8v8h-8zM1057 187h8v8h-8zM1065 195h8v8h-8zM1073 195h8v8h-8zM1081 203h8v8h-8zM1089 203h8v8h-8zM1097 203h8v8h-8zM1105 211h8v8h-8zM1113 211h8v8h-8zM1129 219h8v8h-8zM1137 219h8v8h-8zM1145 227h8v8h-8zM1153 227h8v8h-8zM1161 227h8v8h-8zM1169 235h8v8h-8zM1177 235h8v8h-8zM1193 243h8v8h-8zM1201 243h8v8h-8zM1209 251h8v8h-8zM1217 251h8v8h-8zM1233 259h8v8h-8zM1241 259h8v8h-8zM1257 267h8v8h-8z"/><path fill="#0c9900" d="M1305 187h8v8h-8zM1297 203h8v8h-8z"/><path fill="#159900" d="M1313 187h8v8h-8zM1305 211h8v8h-8zM1297 227h8v8h-8z"/><path fill="#1b9900" d="M1321 187h8v8h-8zM1313 203h8v8h-8zM1305 219h8v8h-8z"/><path fill="#219900" d="M1329 187h8v8h-8zM1321 203h8v8h-8zM1313 219h8v8h-8z"/><path fill="#2a9900" d="M1337 187h8v8h-8zM1329 203h8v8h-8zM1321 219h8v8h-8zM1313 235h8v8h-8z"/><path fill="#009921" d="M1041 195h8v8h-8zM1049 195h8v8h-8zM1057 195h8v8h-8zM1057 203h8v8h-8zM1065 203h8v8h-8zM1073 203h8v8h-8zM1081 211h8v8h-8zM1089 211h8v8h-8zM1097 211h8v8h-8zM1105 219h8v8h-8zM1113 219h8v8h-8zM1121 219h8v8h-8zM1129 227h8v8h-8zM1137 227h8v8h-8zM1153 235h8v8h-8zM1161 235h8v8h-8zM1177 243h8v8h-8zM1185 243h8v8h-8zM1193 251h8v8h-8zM1201 251h8v8h-8zM1217 259h8v8h-8zM1225 259h8v8h-8zM1241 267h8v8h-8zM1249 267h8v8h-8z"/><path fill="#1e9900" d="M1321 195h8v8h-8zM1313 211h8v8h-8zM1305 227h8v8h-8z"/><path fill="#279900" d="M1329 195h8v8h-8zM1321 211h8v8h-8z"/><path fill="#2d9900" d="M1337 195h8v8h-8zM1329 211h8v8h-8zM1321 227h8v8h-8z"/><path fill="#369900" d="M1345 195h8v8h-8zM1337 211h8v8h-8zM1329 227h8v8h-8zM1321 243h8v8h-8z"/><path fill="#009924" d="M1041 203h8v8h-8zM1049 203h8v8h-8zM1057 211h8v8h-8zM1065 211h8v8h-8zM1073 211h8v8h-8zM1081 219h8v8h-8zM1089 219h8v8h-8zM1097 219h8v8h-8zM1105 227h8v8h-8zM1113 227h8v8h-8zM1121 227h8v8h-8zM1129 235h8v8h-8zM1137 235h8v8h-8zM1145 235h8v8h-8zM1153 243h8v8h-8zM1161 243h8v8h-8zM1169 243h8v8h-8zM1177 251h8v8h-8zM1185 251h8v8h-8zM1201 259h8v8h-8zM1209 259h8v8h-8zM1225 267h8v8h-8zM1233 267h8v8h-8zM1249 275h8v8h-8zM1257 275h8v8h-8z"/><path fill="#309900" d="M1337 203h8v8h-8z"/><path fill="#399900" d="M1345 203h8v8h-8zM1337 219h8v8h-8z"/><path fill="#429900" d="M1353 203h8v8h-8zM1345 219h8v8h-8zM1329 243h8v8h-8z"/><path fill="#009927" d="M1041 211h8v8h-8zM1049 211h8v8h-8zM1065 219h8v8h-8zM1073 219h8v8h-8zM1089 227h8v8h-8zM1097 227h8v8h-8zM1113 235h8v8h-8zM1121 235h8v8h-8zM1137 243h8v8h-8zM1145 243h8v8h-8zM1161 251h8v8h-8zM1169 251h8v8h-8zM1185 259h8v8h-8zM1193 259h8v8h-8zM1209 267h8v8h-8zM1217 267h8v8h-8zM1233 275h8v8h-8zM1241 275h8v8h-8z"/><path fill="#3f9900" d="M1345 211h8v8h-8zM1337 227h8v8h-8z"/><path fill="#489900" d="M1353 211h8v8h-8zM1345 227h8v8h-8z"/><path fill="#519900" d="M1361 211h8v8h-8zM1353 227h8v8h-8zM1337 251h8v8h-8z"/><path fill="#5a9900" d="M1369 211h8v8h-8zM1345 251h8v8h-8z"/><path fill="#00992a" d="M1041 219h8v8h-8zM1049 219h8v8h-8zM1057 219h8v8h-8zM1065 227h8v8h-8zM1073 227h8v8h-8zM1081 227h8v8h-8zM1089 235h8v8h-8zM1097 235h8v8h-8zM1105 235h8v8h-8zM1113 243h8v8h-8zM1121 243h8v8h-8zM1129 243h8v8h-8zM1145 251h8v8h-8zM1153 251h8v8h-8zM1169 259h8v8h-8zM1177 259h8v8h-8zM1193 267h8v8h-8zM1201 267h8v8h-8zM1217 275h8v8h-8zM1225 275h8v8h-8zM1249 283h8v8h-8z"/><path fill="#339900" d="M1329 219h8v8h-8zM1321 235h8v8h-8z"/><path fill="#4b9900" d="M1353 219h8v8h-8zM1337 243h8v8h-8z"/><path fill="#579900" d="M1361 219h8v8h-8zM1353 235h8v8h-8z"/><path fill="#609900" d="M1369 219h8v8h-8zM1353 243h8v8h-8z"/><path fill="#699900" d="M1377 219h8v8h-8zM1361 243h8v8h-8z"/><path fill="#00992d" d="M1041 227h8v8h-8zM1049 227h8v8h-8zM1057 227h8v8h-8zM1065 235h8v8h-8zM1073 235h8v8h-8zM1081 235h8v8h-8zM1097 243h8v8h-8zM1105 243h8v8h-8zM1121 251h8v8h-8zM1129 251h8v8h-8zM1137 251h8v8h-8zM1153 259h8v8h-8zM1161 259h8v8h-8zM1177 267h8v8h-8zM1185 267h8v8h-8zM1201 275h8v8h-8zM1209 275h8v8h-8zM1233 283h8v8h-8zM1241 283h8v8h-8z"/><path fill="#069906" d="M1281 227h8v8h-8z"/><path fill="#0c9903" d="M1289 227h8v8h-8z"/><path fill="#249900" d="M1313 227h8v8h-8z"/><path fill="#5d9900" d="M1361 227h8v8h-8z"/><path fill="#669900" d="M1369 227h8v8h-8zM1353 251h8v8h-8z"/><path fill="#6f9900" d="M1377 227h8v8h-8z"/><path fill="#7b9900" d="M1385 227h8v8h-8z"/><path fill="#009930" d="M1041 235h8v8h-8zM1049 235h8v8h-8zM1057 235h8v8h-8zM1073 243h8v8h-8zM1081 243h8v8h-8zM1089 243h8v8h-8zM1105 251h8v8h-8zM1113 251h8v8h-8zM1129 259h8v8h-8zM1137 259h8v8h-8zM1145 259h8v8h-8zM1161 267h8v8h-8zM1169 267h8v8h-8zM1185 275h8v8h-8zM1193 275h8v8h-8zM1217 283h8v8h-8zM1225 283h8v8h-8zM1249 291h8v8h-8z"/><path fill="#099909" d="M1281 235h8v8h-8z"/><path fill="#129906" d="M1289 235h8v8h-8z"/><path fill="#189903" d="M1297 235h8v8h-8z"/><path fill="#219903" d="M1305 235h8v8h-8z"/><path fill="#3c9900" d="M1329 235h8v8h-8z"/><path fill="#459900" d="M1337 235h8v8h-8z"/><path fill="#4e9900" d="M1345 235h8v8h-8z"/><path fill="#639900" d="M1361 235h8v8h-8z"/><path fill="#6c9900" d="M1369 235h8v8h-8zM1353 259h8v8h-8z"/><path fill="#789900" d="M1377 235h8v8h-8zM1361 259h8v8h-8z"/><path fill="#849900" d="M1385 235h8v8h-8z"/><path fill="#8d9900" d="M1393 235h8v8h-8zM1385 243h8v8h-8z"/><path fill="#999900" d="M1401 235h8v8h-8zM1393 243h8v8h-8z"/><path fill="#009936" d="M1041 243h8v8h-8zM1057 251h8v8h-8zM1065 251h8v8h-8zM1073 251h8v8h-8zM1089 259h8v8h-8zM1097 259h8v8h-8zM1105 259h8v8h-8zM1121 267h8v8h-8zM1129 267h8v8h-8zM1153 275h8v8h-8zM1161 275h8v8h-8zM1185 283h8v8h-8zM1193 283h8v8h-8zM1217 291h8v8h-8zM1225 291h8v8h-8zM1249 299h8v8h-8z"/><path fill="#009933" d="M1049 243h8v8h-8zM1057 243h8v8h-8zM1065 243h8v8h-8zM1081 251h8v8h-8zM1089 251h8v8h-8zM1097 251h8v8h-8zM1113 259h8v8h-8zM1121 259h8v8h-8zM1137 267h8v8h-8zM1145 267h8v8h-8zM1153 267h8v8h-8zM1169 275h8v8h-8zM1177 275h8v8h-8zM1201 283h8v8h-8zM1209 283h8v8h-8zM1233 291h8v8h-8zM1241 291h8v8h-8z"/><path fill="#03990f" d="M1273 243h8v8h-8z"/><path fill="#0c990c" d="M1281 243h8v8h-8z"/><path fill="#159909" d="M1289 243h8v8h-8z"/><path fill="#1e9909" d="M1297 243h8v8h-8z"/><path fill="#249906" d="M1305 243h8v8h-8z"/><path fill="#2d9903" d="M1313 243h8v8h-8z"/><path fill="#549900" d="M1345 243h8v8h-8z"/><path fill="#759900" d="M1369 243h8v8h-8z"/><path fill="#819900" d="M1377 243h8v8h-8z"/><path fill="#998d00" d="M1401 243h8v8h-8z"/><path fill="#998400" d="M1409 243h8v8h-8z"/><path fill="#009939" d="M1041 251h8v8h-8zM1049 251h8v8h-8zM1065 259h8v8h-8zM1073 259h8v8h-8zM1081 259h8v8h-8zM1097 267h8v8h-8zM1105 267h8v8h-8zM1113 267h8v8h-8zM1129 275h8v8h-8zM1137 275h8v8h-8zM1145 275h8v8h-8zM1161 283h8v8h-8zM1169 283h8v8h-8zM1177 283h8v8h-8zM1193 291h8v8h-8zM1201 291h8v8h-8zM1209 291h8v8h-8zM1233 299h8v8h-8zM1241 299h8v8h-8z"/><path fill="#069912" d="M1273 251h8v8h-8z"/><path fill="#0f990f" d="M1281 251h8v8h-8z"/><path fill="#18990f" d="M1289 251h8v8h-8z"/><path fill="#21990c" d="M1297 251h8v8h-8z"/><path fill="#2a9909" d="M1305 251h8v8h-8z"/><path fill="#339909" d="M1313 251h8v8h-8z"/><path fill="#3c9906" d="M1321 251h8v8h-8z"/><path fill="#459903" d="M1329 251h8v8h-8z"/><path fill="#729900" d="M1361 251h8v8h-8z"/><path fill="#7e9900" d="M1369 251h8v8h-8z"/><path fill="#8a9900" d="M1377 251h8v8h-8z"/><path fill="#969900" d="M1385 251h8v8h-8z"/><path fill="#999000" d="M1393 251h8v8h-8z"/><path fill="#998700" d="M1401 251h8v8h-8zM1393 259h8v8h-8z"/><path fill="#997b00" d="M1409 251h8v8h-8z"/><path fill="#997200" d="M1417 251h8v8h-8z"/><path fill="#00993c" d="M1049 259h8v8h-8zM1057 259h8v8h-8zM1073 267h8v8h-8zM1081 267h8v8h-8zM1089 267h8v8h-8zM1105 275h8v8h-8zM1113 275h8v8h-8zM1121 275h8v8h-8zM1145 283h8v8h-8zM1153 283h8v8h-8zM1177 291h8v8h-8zM1185 291h8v8h-8zM1217 299h8v8h-8zM1225 299h8v8h-8z"/><path fill="#039918" d="M1265 259h8v8h-8z"/><path fill="#099915" d="M1273 259h8v8h-8z"/><path fill="#129915" d="M1281 259h8v8h-8z"/><path fill="#1b9912" d="M1289 259h8v8h-8z"/><path fill="#24990f" d="M1297 259h8v8h-8z"/><path fill="#2d990f" d="M1305 259h8v8h-8z"/><path fill="#39990c" d="M1313 259h8v8h-8z"/><path fill="#429909" d="M1321 259h8v8h-8z"/><path fill="#4b9906" d="M1329 259h8v8h-8z"/><path fill="#579906" d="M1337 259h8v8h-8z"/><path fill="#639903" d="M1345 259h8v8h-8z"/><path fill="#879900" d="M1369 259h8v8h-8z"/><path fill="#939900" d="M1377 259h8v8h-8z"/><path fill="#999300" d="M1385 259h8v8h-8z"/><path fill="#997e00" d="M1401 259h8v8h-8zM1393 267h8v8h-8z"/><path fill="#997500" d="M1409 259h8v8h-8zM1401 267h8v8h-8zM1393 275h8v8h-8z"/><path fill="#996c00" d="M1417 259h8v8h-8zM1409 267h8v8h-8zM1401 275h8v8h-8z"/><path fill="#996300" d="M1425 259h8v8h-8z"/><path fill="#995d00" d="M1433 259h8v8h-8zM1425 267h8v8h-8zM1417 275h8v8h-8zM1409 283h8v8h-8zM1401 291h8v8h-8z"/><path fill="#00993f" d="M1049 267h8v8h-8zM1057 267h8v8h-8zM1065 267h8v8h-8zM1089 275h8v8h-8zM1097 275h8v8h-8zM1121 283h8v8h-8zM1129 283h8v8h-8zM1137 283h8v8h-8zM1161 291h8v8h-8zM1169 291h8v8h-8zM1193 299h8v8h-8zM1201 299h8v8h-8zM1209 299h8v8h-8zM1233 307h8v8h-8zM1241 307h8v8h-8z"/><path fill="#06991e" d="M1265 267h8v8h-8z"/><path fill="#0f991b" d="M1273 267h8v8h-8z"/><path fill="#189918" d="M1281 267h8v8h-8z"/><path fill="#219918" d="M1289 267h8v8h-8z"/><path fill="#2a9915" d="M1297 267h8v8h-8z"/><path fill="#339912" d="M1305 267h8v8h-8z"/><path fill="#3f990f" d="M1313 267h8v8h-8z"/><path fill="#48990f" d="M1321 267h8v8h-8z"/><path fill="#54990c" d="M1329 267h8v8h-8z"/><path fill="#5d9909" d="M1337 267h8v8h-8z"/><path fill="#699906" d="M1345 267h8v8h-8z"/><path fill="#759903" d="M1353 267h8v8h-8z"/><path fill="#819903" d="M1361 267h8v8h-8z"/><path fill="#909900" d="M1369 267h8v8h-8z"/><path fill="#999600" d="M1377 267h8v8h-8z"/><path fill="#998a00" d="M1385 267h8v8h-8zM1377 275h8v8h-8z"/><path fill="#996600" d="M1417 267h8v8h-8zM1409 275h8v8h-8zM1401 283h8v8h-8z"/><path fill="#995700" d="M1433 267h8v8h-8zM1425 275h8v8h-8zM1417 283h8v8h-8zM1409 291h8v8h-8z"/><path fill="#995100" d="M1441 267h8v8h-8zM1433 275h8v8h-8zM1425 283h8v8h-8zM1417 291h8v8h-8z"/><path fill="#009945" d="M1049 275h8v8h-8zM1073 283h8v8h-8zM1081 283h8v8h-8zM1089 283h8v8h-8zM1113 291h8v8h-8zM1121 291h8v8h-8zM1129 291h8v8h-8zM1153 299h8v8h-8zM1161 299h8v8h-8zM1169 299h8v8h-8zM1201 307h8v8h-8zM1209 307h8v8h-8zM1241 315h8v8h-8z"/><path fill="#009942" d="M1057 275h8v8h-8zM1065 275h8v8h-8zM1073 275h8v8h-8zM1081 275h8v8h-8zM1097 283h8v8h-8zM1105 283h8v8h-8zM1113 283h8v8h-8zM1137 291h8v8h-8zM1145 291h8v8h-8zM1153 291h8v8h-8zM1177 299h8v8h-8zM1185 299h8v8h-8zM1217 307h8v8h-8zM1225 307h8v8h-8z"/><path fill="#099921" d="M1265 275h8v8h-8z"/><path fill="#129921" d="M1273 275h8v8h-8z"/><path fill="#1b991e" d="M1281 275h8v8h-8z"/><path fill="#24991b" d="M1289 275h8v8h-8z"/><path fill="#30991b" d="M1297 275h8v8h-8z"/><path fill="#399918" d="M1305 275h8v8h-8z"/><path fill="#459915" d="M1313 275h8v8h-8z"/><path fill="#4e9912" d="M1321 275h8v8h-8z"/><path fill="#5a9912" d="M1329 275h8v8h-8z"/><path fill="#66990f" d="M1337 275h8v8h-8z"/><path fill="#72990c" d="M1345 275h8v8h-8z"/><path fill="#7e9909" d="M1353 275h8v8h-8z"/><path fill="#8d9906" d="M1361 275h8v8h-8z"/><path fill="#999903" d="M1369 275h8v8h-8z"/><path fill="#998100" d="M1385 275h8v8h-8z"/><path fill="#994b00" d="M1441 275h8v8h-8zM1433 283h8v8h-8zM1425 291h8v8h-8zM1417 299h8v8h-8z"/><path fill="#994800" d="M1449 275h8v8h-8zM1441 283h8v8h-8z"/><path fill="#009948" d="M1049 283h8v8h-8zM1057 283h8v8h-8zM1065 283h8v8h-8zM1089 291h8v8h-8zM1097 291h8v8h-8zM1105 291h8v8h-8zM1137 299h8v8h-8zM1145 299h8v8h-8zM1177 307h8v8h-8zM1185 307h8v8h-8zM1193 307h8v8h-8zM1225 315h8v8h-8zM1233 315h8v8h-8z"/><path fill="#03992a" d="M1257 283h8v8h-8z"/><path fill="#0c9927" d="M1265 283h8v8h-8z"/><path fill="#159924" d="M1273 283h8v8h-8z"/><path fill="#219924" d="M1281 283h8v8h-8z"/><path fill="#2a9921" d="M1289 283h8v8h-8z"/><path fill="#33991e" d="M1297 283h8v8h-8z"/><path fill="#3f991e" d="M1305 283h8v8h-8z"/><path fill="#4b991b" d="M1313 283h8v8h-8z"/><path fill="#579918" d="M1321 283h8v8h-8z"/><path fill="#639915" d="M1329 283h8v8h-8z"/><path fill="#6f9915" d="M1337 283h8v8h-8z"/><path fill="#7b9912" d="M1345 283h8v8h-8z"/><path fill="#8a990f" d="M1353 283h8v8h-8z"/><path fill="#96990c" d="M1361 283h8v8h-8z"/><path fill="#998d09" d="M1369 283h8v8h-8z"/><path fill="#998106" d="M1377 283h8v8h-8z"/><path fill="#997803" d="M1385 283h8v8h-8z"/><path fill="#996f00" d="M1393 283h8v8h-8z"/><path fill="#994200" d="M1449 283h8v8h-8zM1441 291h8v8h-8zM1433 299h8v8h-8z"/><path fill="#993f00" d="M1457 283h8v8h-8zM1425 307h8v8h-8z"/><path fill="#993900" d="M1465 283h8v8h-8zM1457 291h8v8h-8zM1449 299h8v8h-8zM1441 307h8v8h-8z"/><path fill="#00994e" d="M1049 291h8v8h-8zM1057 291h8v8h-8zM1089 299h8v8h-8zM1097 299h8v8h-8zM1105 299h8v8h-8zM1137 307h8v8h-8zM1145 307h8v8h-8zM1185 315h8v8h-8zM1193 315h8v8h-8zM1233 323h8v8h-8z"/><path fill="#00994b" d="M1065 291h8v8h-8zM1073 291h8v8h-8zM1081 291h8v8h-8zM1113 299h8v8h-8zM1121 299h8v8h-8zM1129 299h8v8h-8zM1153 307h8v8h-8zM1161 307h8v8h-8zM1169 307h8v8h-8zM1201 315h8v8h-8zM1209 315h8v8h-8zM1217 315h8v8h-8z"/><path fill="#06992d" d="M1257 291h8v8h-8z"/><path fill="#0f992d" d="M1265 291h8v8h-8z"/><path fill="#1b992a" d="M1273 291h8v8h-8z"/><path fill="#24992a" d="M1281 291h8v8h-8z"/><path fill="#309927" d="M1289 291h8v8h-8z"/><path fill="#399924" d="M1297 291h8v8h-8z"/><path fill="#459924" d="M1305 291h8v8h-8z"/><path fill="#519921" d="M1313 291h8v8h-8z"/><path fill="#5d991e" d="M1321 291h8v8h-8z"/><path fill="#69991b" d="M1329 291h8v8h-8z"/><path fill="#789918" d="M1337 291h8v8h-8z"/><path fill="#849918" d="M1345 291h8v8h-8z"/><path fill="#939915" d="M1353 291h8v8h-8z"/><path fill="#99900f" d="M1361 291h8v8h-8z"/><path fill="#99840c" d="M1369 291h8v8h-8z"/><path fill="#997809" d="M1377 291h8v8h-8z"/><path fill="#996f06" d="M1385 291h8v8h-8z"/><path fill="#996603" d="M1393 291h8v8h-8z"/><path fill="#994500" d="M1433 291h8v8h-8zM1425 299h8v8h-8z"/><path fill="#993c00" d="M1449 291h8v8h-8zM1441 299h8v8h-8zM1433 307h8v8h-8z"/><path fill="#993600" d="M1465 291h8v8h-8zM1457 299h8v8h-8z"/><path fill="#993300" d="M1473 291h8v8h-8zM1449 307h8v8h-8zM1441 315h8v8h-8z"/><path fill="#009954" d="M1049 299h8v8h-8zM1081 307h8v8h-8zM1089 307h8v8h-8zM1097 307h8v8h-8zM1105 307h8v8h-8zM1137 315h8v8h-8zM1145 315h8v8h-8zM1153 315h8v8h-8zM1193 323h8v8h-8zM1201 323h8v8h-8z"/><path fill="#009951" d="M1057 299h8v8h-8zM1065 299h8v8h-8zM1073 299h8v8h-8zM1081 299h8v8h-8zM1113 307h8v8h-8zM1121 307h8v8h-8zM1129 307h8v8h-8zM1161 315h8v8h-8zM1169 315h8v8h-8zM1177 315h8v8h-8zM1209 323h8v8h-8zM1217 323h8v8h-8zM1225 323h8v8h-8z"/><path fill="#099933" d="M1257 299h8v8h-8z"/><path fill="#159933" d="M1265 299h8v8h-8z"/><path fill="#1e9930" d="M1273 299h8v8h-8z"/><path fill="#2a9930" d="M1281 299h8v8h-8z"/><path fill="#36992d" d="M1289 299h8v8h-8z"/><path fill="#3f992a" d="M1297 299h8v8h-8z"/><path fill="#4b992a" d="M1305 299h8v8h-8z"/><path fill="#5a9927" d="M1313 299h8v8h-8z"/><path fill="#669924" d="M1321 299h8v8h-8z"/><path fill="#759921" d="M1329 299h8v8h-8z"/><path fill="#819921" d="M1337 299h8v8h-8z"/><path fill="#90991e" d="M1345 299h8v8h-8z"/><path fill="#99931b" d="M1353 299h8v8h-8z"/><path fill="#998415" d="M1361 299h8v8h-8z"/><path fill="#997b12" d="M1369 299h8v8h-8z"/><path fill="#996f0c" d="M1377 299h8v8h-8z"/><path fill="#996609" d="M1385 299h8v8h-8z"/><path fill="#996006" d="M1393 299h8v8h-8z"/><path fill="#995706" d="M1401 299h8v8h-8z"/><path fill="#995103" d="M1409 299h8v8h-8z"/><path fill="#993000" d="M1465 299h8v8h-8zM1457 307h8v8h-8zM1449 315h8v8h-8z"/><path fill="#992d00" d="M1473 299h8v8h-8zM1465 307h8v8h-8zM1457 315h8v8h-8z"/><path fill="#992a00" d="M1481 299h8v8h-8zM1473 307h8v8h-8zM1465 315h8v8h-8z"/><path fill="#009957" d="M1057 307h8v8h-8zM1065 307h8v8h-8zM1073 307h8v8h-8zM1113 315h8v8h-8zM1121 315h8v8h-8zM1129 315h8v8h-8zM1169 323h8v8h-8zM1177 323h8v8h-8zM1185 323h8v8h-8zM1225 331h8v8h-8zM1233 331h8v8h-8z"/><path fill="#03993c" d="M1249 307h8v8h-8z"/><path fill="#0f993c" d="M1257 307h8v8h-8z"/><path fill="#189939" d="M1265 307h8v8h-8z"/><path fill="#249939" d="M1273 307h8v8h-8z"/><path fill="#309936" d="M1281 307h8v8h-8z"/><path fill="#3c9933" d="M1289 307h8v8h-8z"/><path fill="#489933" d="M1297 307h8v8h-8z"/><path fill="#549930" d="M1305 307h8v8h-8z"/><path fill="#63992d" d="M1313 307h8v8h-8z"/><path fill="#6f992d" d="M1321 307h8v8h-8z"/><path fill="#7e992a" d="M1329 307h8v8h-8z"/><path fill="#8d9927" d="M1337 307h8v8h-8z"/><path fill="#999624" d="M1345 307h8v8h-8z"/><path fill="#99871e" d="M1353 307h8v8h-8z"/><path fill="#997b18" d="M1361 307h8v8h-8z"/><path fill="#996f15" d="M1369 307h8v8h-8z"/><path fill="#996612" d="M1377 307h8v8h-8z"/><path fill="#99600f" d="M1385 307h8v8h-8z"/><path fill="#99570c" d="M1393 307h8v8h-8z"/><path fill="#995109" d="M1401 307h8v8h-8z"/><path fill="#994b06" d="M1409 307h8v8h-8z"/><path fill="#994503" d="M1417 307h8v8h-8z"/><path fill="#992700" d="M1481 307h8v8h-8zM1473 315h8v8h-8zM1457 323h8v8h-8z"/><path fill="#992400" d="M1489 307h8v8h-8zM1481 315h8v8h-8zM1465 323h8v8h-8z"/><path fill="#00995d" d="M1057 315h8v8h-8zM1065 315h8v8h-8zM1073 315h8v8h-8zM1113 323h8v8h-8zM1121 323h8v8h-8zM1129 323h8v8h-8zM1137 323h8v8h-8zM1185 331h8v8h-8zM1193 331h8v8h-8zM1201 331h8v8h-8z"/><path fill="#00995a" d="M1081 315h8v8h-8zM1089 315h8v8h-8zM1097 315h8v8h-8zM1105 315h8v8h-8zM1145 323h8v8h-8zM1153 323h8v8h-8zM1161 323h8v8h-8zM1209 331h8v8h-8zM1217 331h8v8h-8z"/><path fill="#099945" d="M1249 315h8v8h-8z"/><path fill="#129942" d="M1257 315h8v8h-8z"/><path fill="#1e9942" d="M1265 315h8v8h-8z"/><path fill="#2a993f" d="M1273 315h8v8h-8z"/><path fill="#36993c" d="M1281 315h8v8h-8z"/><path fill="#42993c" d="M1289 315h8v8h-8z"/><path fill="#4e9939" d="M1297 315h8v8h-8z"/><path fill="#5d9939" d="M1305 315h8v8h-8z"/><path fill="#6c9936" d="M1313 315h8v8h-8z"/><path fill="#7b9933" d="M1321 315h8v8h-8z"/><path fill="#8a9930" d="M1329 315h8v8h-8z"/><path fill="#999930" d="M1337 315h8v8h-8z"/><path fill="#998a27" d="M1345 315h8v8h-8z"/><path fill="#997e21" d="M1353 315h8v8h-8z"/><path fill="#99721e" d="M1361 315h8v8h-8z"/><path fill="#996918" d="M1369 315h8v8h-8z"/><path fill="#996015" d="M1377 315h8v8h-8z"/><path fill="#995712" d="M1385 315h8v8h-8z"/><path fill="#99510f" d="M1393 315h8v8h-8z"/><path fill="#994b0c" d="M1401 315h8v8h-8z"/><path fill="#994509" d="M1409 315h8v8h-8z"/><path fill="#993f06" d="M1417 315h8v8h-8z"/><path fill="#993c03" d="M1425 315h8v8h-8z"/><path fill="#993603" d="M1433 315h8v8h-8z"/><path fill="#992100" d="M1489 315h8v8h-8zM1473 323h8v8h-8zM1481 323h8v8h-8zM1465 331h8v8h-8z"/><path fill="#991e00" d="M1497 315h8v8h-8zM1489 323h8v8h-8zM1473 331h8v8h-8z"/><path fill="#991b00" d="M1505 315h8v8h-8zM1497 323h8v8h-8zM1481 331h8v8h-8zM1489 331h8v8h-8z"/><path fill="#009963" d="M1057 323h8v8h-8zM1065 323h8v8h-8zM1073 323h8v8h-8zM1129 331h8v8h-8zM1137 331h8v8h-8zM1145 331h8v8h-8zM1201 339h8v8h-8zM1209 339h8v8h-8zM1217 339h8v8h-8z"/><path fill="#009960" d="M1081 323h8v8h-8zM1089 323h8v8h-8zM1097 323h8v8h-8zM1105 323h8v8h-8zM1153 331h8v8h-8zM1161 331h8v8h-8zM1169 331h8v8h-8zM1177 331h8v8h-8zM1225 339h8v8h-8zM1233 339h8v8h-8z"/><path fill="#03994e" d="M1241 323h8v8h-8z"/><path fill="#0c994b" d="M1249 323h8v8h-8z"/><path fill="#18994b" d="M1257 323h8v8h-8z"/><path fill="#249948" d="M1265 323h8v8h-8z"/><path fill="#309948" d="M1273 323h8v8h-8z"/><path fill="#3c9945" d="M1281 323h8v8h-8z"/><path fill="#4b9945" d="M1289 323h8v8h-8z"/><path fill="#579942" d="M1297 323h8v8h-8z"/><path fill="#66993f" d="M1305 323h8v8h-8z"/><path fill="#75993f" d="M1313 323h8v8h-8z"/><path fill="#84993c" d="M1321 323h8v8h-8z"/><path fill="#969939" d="M1329 323h8v8h-8z"/><path fill="#998d33" d="M1337 323h8v8h-8z"/><path fill="#997e2d" d="M1345 323h8v8h-8z"/><path fill="#997227" d="M1353 323h8v8h-8z"/><path fill="#996921" d="M1361 323h8v8h-8z"/><path fill="#99601b" d="M1369 323h8v8h-8z"/><path fill="#995718" d="M1377 323h8v8h-8z"/><path fill="#995115" d="M1385 323h8v8h-8z"/><path fill="#994b12" d="M1393 323h8v8h-8z"/><path fill="#99450f" d="M1401 323h8v8h-8z"/><path fill="#993f0c" d="M1409 323h8v8h-8z"/><path fill="#993909" d="M1417 323h8v8h-8z"/><path fill="#993606" d="M1425 323h8v8h-8z"/><path fill="#993306" d="M1433 323h8v8h-8z"/><path fill="#992d03" d="M1441 323h8v8h-8z"/><path fill="#992a03" d="M1449 323h8v8h-8z"/><path fill="#991800" d="M1505 323h8v8h-8zM1513 323h8v8h-8zM1497 331h8v8h-8zM1481 339h8v8h-8zM1489 339h8v8h-8z"/><path fill="#009969" d="M1057 331h8v8h-8zM1065 331h8v8h-8zM1073 331h8v8h-8zM1081 331h8v8h-8zM1089 331h8v8h-8zM1145 339h8v8h-8zM1153 339h8v8h-8zM1161 339h8v8h-8zM1169 339h8v8h-8z"/><path fill="#009966" d="M1097 331h8v8h-8zM1105 331h8v8h-8zM1113 331h8v8h-8zM1121 331h8v8h-8zM1177 339h8v8h-8zM1185 339h8v8h-8zM1193 339h8v8h-8z"/><path fill="#069957" d="M1241 331h8v8h-8z"/><path fill="#129954" d="M1249 331h8v8h-8z"/><path fill="#1e9954" d="M1257 331h8v8h-8z"/><path fill="#2a9951" d="M1265 331h8v8h-8z"/><path fill="#369951" d="M1273 331h8v8h-8z"/><path fill="#45994e" d="M1281 331h8v8h-8z"/><path fill="#51994e" d="M1289 331h8v8h-8z"/><path fill="#60994b" d="M1297 331h8v8h-8z"/><path fill="#729948" d="M1305 331h8v8h-8z"/><path fill="#819948" d="M1313 331h8v8h-8z"/><path fill="#939945" d="M1321 331h8v8h-8z"/><path fill="#99903f" d="M1329 331h8v8h-8z"/><path fill="#998136" d="M1337 331h8v8h-8z"/><path fill="#997530" d="M1345 331h8v8h-8z"/><path fill="#99692a" d="M1353 331h8v8h-8z"/><path fill="#996024" d="M1361 331h8v8h-8z"/><path fill="#995721" d="M1369 331h8v8h-8z"/><path fill="#99511b" d="M1377 331h8v8h-8z"/><path fill="#994818" d="M1385 331h8v8h-8z"/><path fill="#994215" d="M1393 331h8v8h-8z"/><path fill="#993f12" d="M1401 331h8v8h-8z"/><path fill="#99390f" d="M1409 331h8v8h-8z"/><path fill="#99360c" d="M1417 331h8v8h-8z"/><path fill="#993009" d="M1425 331h8v8h-8z"/><path fill="#992d09" d="M1433 331h8v8h-8z"/><path fill="#992a06" d="M1441 331h8v8h-8z"/><path fill="#992703" d="M1449 331h8v8h-8z"/><path fill="#992403" d="M1457 331h8v8h-8z"/><path fill="#991500" d="M1505 331h8v8h-8zM1513 331h8v8h-8zM1497 339h8v8h-8z"/><path fill="#991200" d="M1521 331h8v8h-8zM1505 339h8v8h-8zM1513 339h8v8h-8zM1489 347h8v8h-8zM1497 347h8v8h-8z"/><path fill="#009972" d="M1057 339h8v8h-8zM1065 339h8v8h-8zM1137 347h8v8h-8zM1145 347h8v8h-8zM1153 347h8v8h-8zM1161 347h8v8h-8zM1169 347h8v8h-8z"/><path fill="#00996f" d="M1073 339h8v8h-8zM1081 339h8v8h-8zM1089 339h8v8h-8zM1097 339h8v8h-8zM1105 339h8v8h-8zM1177 347h8v8h-8zM1185 347h8v8h-8zM1193 347h8v8h-8zM1201 347h8v8h-8z"/><path fill="#00996c" d="M1113 339h8v8h-8zM1121 339h8v8h-8zM1129 339h8v8h-8zM1137 339h8v8h-8zM1209 347h8v8h-8zM1217 347h8v8h-8zM1225 347h8v8h-8z"/><path fill="#099960" d="M1241 339h8v8h-8z"/><path fill="#18995d" d="M1249 339h8v8h-8z"/><path fill="#24995d" d="M1257 339h8v8h-8z"/><path fill="#30995a" d="M1265 339h8v8h-8z"/><path fill="#3f995a" d="M1273 339h8v8h-8z"/><path fill="#4e9957" d="M1281 339h8v8h-8z"/><path fill="#5d9957" d="M1289 339h8v8h-8z"/><path fill="#6c9954" d="M1297 339h8v8h-8z"/><path fill="#7b9954" d="M1305 339h8v8h-8z"/><path fill="#8d9951" d="M1313 339h8v8h-8z"/><path fill="#99934e" d="M1321 339h8v8h-8z"/><path fill="#998142" d="M1329 339h8v8h-8z"/><path fill="#997539" d="M1337 339h8v8h-8z"/><path fill="#996933" d="M1345 339h8v8h-8z"/><path fill="#99602d" d="M1353 339h8v8h-8z"/><path fill="#995727" d="M1361 339h8v8h-8z"/><path fill="#995124" d="M1369 339h8v8h-8z"/><path fill="#99481e" d="M1377 339h8v8h-8z"/><path fill="#99421b" d="M1385 339h8v8h-8z"/><path fill="#993c18" d="M1393 339h8v8h-8z"/><path fill="#993915" d="M1401 339h8v8h-8z"/><path fill="#993312" d="M1409 339h8v8h-8z"/><path fill="#99300f" d="M1417 339h8v8h-8z"/><path fill="#992d0c" d="M1425 339h8v8h-8z"/><path fill="#992a0c" d="M1433 339h8v8h-8z"/><path fill="#992709" d="M1441 339h8v8h-8z"/><path fill="#992406" d="M1449 339h8v8h-8z"/><path fill="#992106" d="M1457 339h8v8h-8z"/><path fill="#991e03" d="M1465 339h8v8h-8z"/><path fill="#991b03" d="M1473 339h8v8h-8z"/><path fill="#990f00" d="M1521 339h8v8h-8zM1529 339h8v8h-8zM1505 347h8v8h-8zM1513 347h8v8h-8z"/><path fill="#990c00" d="M1537 339h8v8h-8zM1521 347h8v8h-8zM1529 347h8v8h-8zM1505 355h8v8h-8zM1513 355h8v8h-8z"/><path fill="#009978" d="M1065 347h8v8h-8zM1073 347h8v8h-8zM1081 347h8v8h-8zM1089 347h8v8h-8zM1193 355h8v8h-8zM1201 355h8v8h-8zM1209 355h8v8h-8zM1217 355h8v8h-8z"/><path fill="#009975" d="M1097 347h8v8h-8zM1105 347h8v8h-8zM1113 347h8v8h-8zM1121 347h8v8h-8zM1129 347h8v8h-8zM1225 355h8v8h-8z"/><path fill="#039969" d="M1233 347h8v8h-8z"/><path fill="#0f9969" d="M1241 347h8v8h-8z"/><path fill="#1b9969" d="M1249 347h8v8h-8z"/><path fill="#2a9966" d="M1257 347h8v8h-8z"/><path fill="#399966" d="M1265 347h8v8h-8z"/><path fill="#489966" d="M1273 347h8v8h-8z"/><path fill="#579963" d="M1281 347h8v8h-8z"/><path fill="#669963" d="M1289 347h8v8h-8z"/><path fill="#789960" d="M1297 347h8v8h-8z"/><path fill="#8a9960" d="M1305 347h8v8h-8z"/><path fill="#99965d" d="M1313 347h8v8h-8z"/><path fill="#998451" d="M1321 347h8v8h-8z"/><path fill="#997545" d="M1329 347h8v8h-8z"/><path fill="#99693f" d="M1337 347h8v8h-8z"/><path fill="#996036" d="M1345 347h8v8h-8z"/><path fill="#995730" d="M1353 347h8v8h-8z"/><path fill="#994e2a" d="M1361 347h8v8h-8z"/><path fill="#994827" d="M1369 347h8v8h-8z"/><path fill="#994221" d="M1377 347h8v8h-8z"/><path fill="#993c1e" d="M1385 347h8v8h-8z"/><path fill="#99361b" d="M1393 347h8v8h-8z"/><path fill="#993318" d="M1401 347h8v8h-8z"/><path fill="#993015" d="M1409 347h8v8h-8z"/><path fill="#992a12" d="M1417 347h8v8h-8z"/><path fill="#99270f" d="M1425 347h8v8h-8z"/><path fill="#99240c" d="M1433 347h8v8h-8z"/><path fill="#99210c" d="M1441 347h8v8h-8z"/><path fill="#991e09" d="M1449 347h8v8h-8z"/><path fill="#991b06" d="M1457 347h8v8h-8zM1465 347h8v8h-8z"/><path fill="#991803" d="M1473 347h8v8h-8z"/><path fill="#991503" d="M1481 347h8v8h-8z"/><path fill="#990900" d="M1537 347h8v8h-8zM1545 347h8v8h-8zM1521 355h8v8h-8zM1529 355h8v8h-8zM1513 363h8v8h-8z"/><path fill="#009981" d="M1065 355h8v8h-8zM1073 355h8v8h-8zM1081 355h8v8h-8zM1225 363h8v8h-8z"/><path fill="#00997e" d="M1089 355h8v8h-8zM1097 355h8v8h-8zM1105 355h8v8h-8zM1113 355h8v8h-8zM1121 355h8v8h-8zM1129 355h8v8h-8zM1137 355h8v8h-8z"/><path fill="#00997b" d="M1145 355h8v8h-8zM1153 355h8v8h-8zM1161 355h8v8h-8zM1169 355h8v8h-8zM1177 355h8v8h-8zM1185 355h8v8h-8z"/><path fill="#099975" d="M1233 355h8v8h-8z"/><path fill="#159975" d="M1241 355h8v8h-8z"/><path fill="#249975" d="M1249 355h8v8h-8z"/><path fill="#309972" d="M1257 355h8v8h-8z"/><path fill="#3f9972" d="M1265 355h8v8h-8z"/><path fill="#519972" d="M1273 355h8v8h-8z"/><path fill="#60996f" d="M1281 355h8v8h-8z"/><path fill="#72996f" d="M1289 355h8v8h-8z"/><path fill="#84996f" d="M1297 355h8v8h-8z"/><path fill="#99996c" d="M1305 355h8v8h-8z"/><path fill="#998760" d="M1313 355h8v8h-8z"/><path fill="#997854" d="M1321 355h8v8h-8z"/><path fill="#996c4b" d="M1329 355h8v8h-8z"/><path fill="#996042" d="M1337 355h8v8h-8z"/><path fill="#995739" d="M1345 355h8v8h-8z"/><path fill="#994e33" d="M1353 355h8v8h-8z"/><path fill="#99482d" d="M1361 355h8v8h-8z"/><path fill="#99422a" d="M1369 355h8v8h-8z"/><path fill="#993c24" d="M1377 355h8v8h-8z"/><path fill="#993621" d="M1385 355h8v8h-8z"/><path fill="#99331e" d="M1393 355h8v8h-8z"/><path fill="#992d1b" d="M1401 355h8v8h-8z"/><path fill="#992a18" d="M1409 355h8v8h-8z"/><path fill="#992715" d="M1417 355h8v8h-8z"/><path fill="#992412" d="M1425 355h8v8h-8z"/><path fill="#99210f" d="M1433 355h8v8h-8z"/><path fill="#991e0c" d="M1441 355h8v8h-8z"/><path fill="#991b0c" d="M1449 355h8v8h-8z"/><path fill="#991809" d="M1457 355h8v8h-8z"/><path fill="#991509" d="M1465 355h8v8h-8z"/><path fill="#991506" d="M1473 355h8v8h-8z"/><path fill="#991206" d="M1481 355h8v8h-8z"/><path fill="#990f03" d="M1489 355h8v8h-8zM1497 355h8v8h-8z"/><path fill="#990600" d="M1537 355h8v8h-8zM1545 355h8v8h-8zM1553 355h8v8h-8zM1521 363h8v8h-8zM1529 363h8v8h-8zM1537 363h8v8h-8z"/><path fill="#00998a" d="M1065 363h8v8h-8zM1073 363h8v8h-8zM1081 363h8v8h-8z"/><path fill="#009987" d="M1089 363h8v8h-8zM1097 363h8v8h-8zM1105 363h8v8h-8zM1113 363h8v8h-8zM1121 363h8v8h-8zM1129 363h8v8h-8zM1137 363h8v8h-8zM1145 363h8v8h-8zM1153 363h8v8h-8zM1161 363h8v8h-8z"/><path fill="#009984" d="M1169 363h8v8h-8zM1177 363h8v8h-8zM1185 363h8v8h-8zM1193 363h8v8h-8zM1201 363h8v8h-8zM1209 363h8v8h-8zM1217 363h8v8h-8z"/><path fill="#0c9981" d="M1233 363h8v8h-8z"/><path fill="#1b9981" d="M1241 363h8v8h-8z"/><path fill="#2a9981" d="M1249 363h8v8h-8z"/><path fill="#399981" d="M1257 363h8v8h-8z"/><path fill="#489981" d="M1265 363h8v8h-8z"/><path fill="#5a997e" d="M1273 363h8v8h-8z"/><path fill="#6c997e" d="M1281 363h8v8h-8z"/><path fill="#81997e" d="M1289 363h8v8h-8z"/><path fill="#93997e" d="M1297 363h8v8h-8z"/><path fill="#998a6f" d="M1305 363h8v8h-8z"/><path fill="#997b63" d="M1313 363h8v8h-8z"/><path fill="#996c57" d="M1321 363h8v8h-8z"/><path fill="#99604e" d="M1329 363h8v8h-8z"/><path fill="#995745" d="M1337 363h8v8h-8z"/><path fill="#994e3c" d="M1345 363h8v8h-8z"/><path fill="#994836" d="M1353 363h8v8h-8z"/><path fill="#993f30" d="M1361 363h8v8h-8z"/><path fill="#99392d" d="M1369 363h8v8h-8z"/><path fill="#993627" d="M1377 363h8v8h-8z"/><path fill="#993024" d="M1385 363h8v8h-8z"/><path fill="#992d21" d="M1393 363h8v8h-8z"/><path fill="#99271e" d="M1401 363h8v8h-8z"/><path fill="#99241b" d="M1409 363h8v8h-8z"/><path fill="#992118" d="M1417 363h8v8h-8z"/><path fill="#991e15" d="M1425 363h8v8h-8z"/><path fill="#991b12" d="M1433 363h8v8h-8z"/><path fill="#99180f" d="M1441 363h8v8h-8zM1449 363h8v8h-8z"/><path fill="#99150c" d="M1457 363h8v8h-8z"/><path fill="#991209" d="M1465 363h8v8h-8zM1473 363h8v8h-8z"/><path fill="#990f06" d="M1481 363h8v8h-8z"/><path fill="#990c06" d="M1489 363h8v8h-8z"/><path fill="#990c03" d="M1497 363h8v8h-8z"/><path fill="#990903" d="M1505 363h8v8h-8z"/><path fill="#990300" d="M1545 363h8v8h-8zM1553 363h8v8h-8zM1529 371h8v8h-8zM1537 371h8v8h-8z"/><path fill="#990000" d="M1561 363h8v8h-8zM1569 363h8v8h-8zM1545 371h8v8h-8zM1553 371h8v8h-8zM1561 371h8v8h-8zM1569 371h8v8h-8zM1577 371h8v8h-8zM1545 379h8v8h-8zM1553 379h8v8h-8zM1561 379h8v8h-8zM1569 379h8v8h-8zM1577 379h8v8h-8zM1585 379h8v8h-8zM1553 387h8v8h-8zM1561 387h8v8h-8zM1569 387h8v8h-8zM1577 387h8v8h-8zM1585 387h8v8h-8zM1593 387h8v8h-8zM1601 387h8v8h-8zM1569 395h8v8h-8zM1577 395h8v8h-8zM1585 395h8v8h-8zM1593 395h8v8h-8zM1601 395h8v8h-8zM1609 395h8v8h-8zM1577 403h8v8h-8zM1585 403h8v8h-8zM1593 403h8v8h-8zM1601 403h8v8h-8zM1609 403h8v8h-8zM1617 403h8v8h-8zM1593 411h8v8h-8zM1601 411h8v8h-8zM1609 411h8v8h-8zM1617 411h8v8h-8zM1625 411h8v8h-8zM1609 419h8v8h-8zM1617 419h8v8h-8zM1625 419h8v8h-8z"/><path fill="#009993" d="M1065 371h8v8h-8zM1073 371h8v8h-8zM1081 371h8v8h-8zM1089 371h8v8h-8zM1097 371h8v8h-8zM1105 371h8v8h-8zM1113 371h8v8h-8zM1121 371h8v8h-8zM1129 371h8v8h-8zM1137 371h8v8h-8zM1145 371h8v8h-8z"/><path fill="#009990" d="M1153 371h8v8h-8zM1161 371h8v8h-8zM1169 371h8v8h-8zM1177 371h8v8h-8zM1185 371h8v8h-8zM1193 371h8v8h-8zM1201 371h8v8h-8zM1209 371h8v8h-8zM1217 371h8v8h-8z"/><path fill="#069990" d="M1225 371h8v8h-8z"/><path fill="#129990" d="M1233 371h8v8h-8z"/><path fill="#219990" d="M1241 371h8v8h-8z"/><path fill="#339990" d="M1249 371h8v8h-8z"/><path fill="#429990" d="M1257 371h8v8h-8z"/><path fill="#549990" d="M1265 371h8v8h-8z"/><path fill="#669990" d="M1273 371h8v8h-8z"/><path fill="#7b9990" d="M1281 371h8v8h-8z"/><path fill="#90998d" d="M1289 371h8v8h-8z"/><path fill="#998d84" d="M1297 371h8v8h-8z"/><path fill="#997b72" d="M1305 371h8v8h-8z"/><path fill="#996c66" d="M1313 371h8v8h-8z"/><path fill="#99605a" d="M1321 371h8v8h-8z"/><path fill="#995751" d="M1329 371h8v8h-8z"/><path fill="#994e48" d="M1337 371h8v8h-8z"/><path fill="#99453f" d="M1345 371h8v8h-8z"/><path fill="#993f39" d="M1353 371h8v8h-8z"/><path fill="#993933" d="M1361 371h8v8h-8z"/><path fill="#993330" d="M1369 371h8v8h-8z"/><path fill="#99302a" d="M1377 371h8v8h-8z"/><path fill="#992a27" d="M1385 371h8v8h-8z"/><path fill="#992721" d="M1393 371h8v8h-8z"/><path fill="#99241e" d="M1401 371h8v8h-8z"/><path fill="#99211b" d="M1409 371h8v8h-8z"/><path fill="#991e18" d="M1417 371h8v8h-8z"/><path fill="#991b18" d="M1425 371h8v8h-8z"/><path fill="#991815" d="M1433 371h8v8h-8z"/><path fill="#991512" d="M1441 371h8v8h-8z"/><path fill="#99120f" d="M1449 371h8v8h-8zM1457 371h8v8h-8z"/><path fill="#990f0c" d="M1465 371h8v8h-8z"/><path fill="#990c09" d="M1473 371h8v8h-8zM1481 371h8v8h-8z"/><path fill="#990906" d="M1489 371h8v8h-8zM1497 371h8v8h-8z"/><path fill="#990606" d="M1505 371h8v8h-8z"/><path fill="#990603" d="M1513 371h8v8h-8z"/><path fill="#990303" d="M1521 371h8v8h-8zM1521 379h8v8h-8z"/><path fill="#009699" d="M1065 379h8v8h-8zM1073 379h8v8h-8zM1081 379h8v8h-8zM1089 379h8v8h-8zM1097 379h8v8h-8zM1105 379h8v8h-8zM1113 379h8v8h-8zM1121 379h8v8h-8zM1129 379h8v8h-8z"/><path fill="#009399" d="M1137 379h8v8h-8zM1145 379h8v8h-8zM1153 379h8v8h-8zM1161 379h8v8h-8zM1169 379h8v8h-8zM1177 379h8v8h-8zM1185 379h8v8h-8zM1193 379h8v8h-8zM1201 379h8v8h-8zM1209 379h8v8h-8zM1217 379h8v8h-8z"/><path fill="#099399" d="M1225 379h8v8h-8z"/><path fill="#189399" d="M1233 379h8v8h-8z"/><path fill="#279399" d="M1241 379h8v8h-8z"/><path fill="#399399" d="M1249 379h8v8h-8z"/><path fill="#489399" d="M1257 379h8v8h-8z"/><path fill="#5a9399" d="M1265 379h8v8h-8z"/><path fill="#6f9399" d="M1273 379h8v8h-8z"/><path fill="#849099" d="M1281 379h8v8h-8z"/><path fill="#999099" d="M1289 379h8v8h-8z"/><path fill="#997e84" d="M1297 379h8v8h-8z"/><path fill="#996f75" d="M1305 379h8v8h-8z"/><path fill="#996369" d="M1313 379h8v8h-8z"/><path fill="#99575d" d="M1321 379h8v8h-8z"/><path fill="#994e54" d="M1329 379h8v8h-8z"/><path fill="#99454b" d="M1337 379h8v8h-8z"/><path fill="#993f42" d="M1345 379h8v8h-8z"/><path fill="#99393c" d="M1353 379h8v8h-8z"/><path fill="#993336" d="M1361 379h8v8h-8z"/><path fill="#992d33" d="M1369 379h8v8h-8z"/><path fill="#992a2d" d="M1377 379h8v8h-8z"/><path fill="#99242a" d="M1385 379h8v8h-8z"/><path fill="#992124" d="M1393 379h8v8h-8z"/><path fill="#991e21" d="M1401 379h8v8h-8z"/><path fill="#991b1e" d="M1409 379h8v8h-8z"/><path fill="#99181b" d="M1417 379h8v8h-8z"/><path fill="#991518" d="M1425 379h8v8h-8z"/><path fill="#991515" d="M1433 379h8v8h-8z"/><path fill="#991215" d="M1441 379h8v8h-8z"/><path fill="#990f12" d="M1449 379h8v8h-8z"/><path fill="#990c0f" d="M1457 379h8v8h-8zM1465 379h8v8h-8z"/><path fill="#99090c" d="M1473 379h8v8h-8zM1481 379h8v8h-8z"/><path fill="#990609" d="M1489 379h8v8h-8zM1497 379h8v8h-8z"/><path fill="#990306" d="M1505 379h8v8h-8zM1513 379h8v8h-8z"/><path fill="#990003" d="M1529 379h8v8h-8zM1537 379h8v8h-8zM1529 387h8v8h-8zM1537 387h8v8h-8zM1545 387h8v8h-8zM1545 395h8v8h-8zM1553 395h8v8h-8zM1561 395h8v8h-8zM1553 403h8v8h-8zM1561 403h8v8h-8zM1569 403h8v8h-8zM1569 411h8v8h-8zM1577 411h8v8h-8zM1585 411h8v8h-8zM1577 419h8v8h-8zM1585 419h8v8h-8zM1593 419h8v8h-8zM1601 419h8v8h-8zM1593 427h8v8h-8zM1601 427h8v8h-8zM1609 427h8v8h-8z"/><path fill="#008a99" d="M1073 387h8v8h-8zM1081 387h8v8h-8zM1089 387h8v8h-8zM1097 387h8v8h-8zM1105 387h8v8h-8zM1113 387h8v8h-8zM1121 387h8v8h-8zM1129 387h8v8h-8zM1137 387h8v8h-8zM1145 387h8v8h-8z"/><path fill="#008799" d="M1153 387h8v8h-8zM1161 387h8v8h-8zM1169 387h8v8h-8zM1177 387h8v8h-8zM1185 387h8v8h-8zM1193 387h8v8h-8zM1201 387h8v8h-8z"/><path fill="#008499" d="M1209 387h8v8h-8zM1217 387h8v8h-8z"/><path fill="#0f8499" d="M1225 387h8v8h-8z"/><path fill="#1e8499" d="M1233 387h8v8h-8z"/><path fill="#2d8499" d="M1241 387h8v8h-8z"/><path fill="#3c8499" d="M1249 387h8v8h-8z"/><path fill="#4b8199" d="M1257 387h8v8h-8z"/><path fill="#5d8199" d="M1265 387h8v8h-8z"/><path fill="#6f8199" d="M1273 387h8v8h-8z"/><path fill="#848199" d="M1281 387h8v8h-8z"/><path fill="#967e99" d="M1289 387h8v8h-8z"/><path fill="#996f87" d="M1297 387h8v8h-8z"/><path fill="#996378" d="M1305 387h8v8h-8z"/><path fill="#995769" d="M1313 387h8v8h-8z"/><path fill="#994e60" d="M1321 387h8v8h-8z"/><path fill="#994554" d="M1329 387h8v8h-8z"/><path fill="#993c4e" d="M1337 387h8v8h-8z"/><path fill="#993645" d="M1345 387h8v8h-8z"/><path fill="#99303f" d="M1353 387h8v8h-8z"/><path fill="#992d39" d="M1361 387h8v8h-8z"/><path fill="#992733" d="M1369 387h8v8h-8z"/><path fill="#992430" d="M1377 387h8v8h-8z"/><path fill="#99212a" d="M1385 387h8v8h-8z"/><path fill="#991e27" d="M1393 387h8v8h-8z"/><path fill="#991b24" d="M1401 387h8v8h-8z"/><path fill="#991821" d="M1409 387h8v8h-8z"/><path fill="#99151e" d="M1417 387h8v8h-8z"/><path fill="#99121b" d="M1425 387h8v8h-8z"/><path fill="#990f18" d="M1433 387h8v8h-8z"/><path fill="#990f15" d="M1441 387h8v8h-8z"/><path fill="#990c15" d="M1449 387h8v8h-8z"/><path fill="#990912" d="M1457 387h8v8h-8z"/><path fill="#99090f" d="M1465 387h8v8h-8z"/><path fill="#99060f" d="M1473 387h8v8h-8z"/><path fill="#99060c" d="M1481 387h8v8h-8z"/><path fill="#99030c" d="M1489 387h8v8h-8z"/><path fill="#990309" d="M1497 387h8v8h-8z"/><path fill="#990009" d="M1505 387h8v8h-8zM1505 395h8v8h-8zM1513 395h8v8h-8zM1513 403h8v8h-8zM1521 403h8v8h-8zM1529 403h8v8h-8zM1529 411h8v8h-8zM1537 411h8v8h-8zM1537 419h8v8h-8zM1545 419h8v8h-8zM1545 427h8v8h-8zM1553 427h8v8h-8zM1561 427h8v8h-8zM1553 435h8v8h-8zM1561 435h8v8h-8zM1569 435h8v8h-8zM1569 443h8v8h-8z"/><path fill="#990006" d="M1513 387h8v8h-8zM1521 387h8v8h-8zM1521 395h8v8h-8zM1529 395h8v8h-8zM1537 395h8v8h-8zM1537 403h8v8h-8zM1545 403h8v8h-8zM1545 411h8v8h-8zM1553 411h8v8h-8zM1561 411h8v8h-8zM1553 419h8v8h-8zM1561 419h8v8h-8zM1569 419h8v8h-8zM1569 427h8v8h-8zM1577 427h8v8h-8zM1585 427h8v8h-8zM1577 435h8v8h-8zM1585 435h8v8h-8z"/><path fill="#008199" d="M1073 395h8v8h-8zM1081 395h8v8h-8zM1089 395h8v8h-8zM1097 395h8v8h-8zM1105 395h8v8h-8zM1113 395h8v8h-8z"/><path fill="#007e99" d="M1121 395h8v8h-8zM1129 395h8v8h-8zM1137 395h8v8h-8zM1145 395h8v8h-8zM1153 395h8v8h-8zM1161 395h8v8h-8z"/><path fill="#007b99" d="M1169 395h8v8h-8zM1177 395h8v8h-8zM1185 395h8v8h-8zM1193 395h8v8h-8z"/><path fill="#007899" d="M1201 395h8v8h-8zM1209 395h8v8h-8zM1073 403h8v8h-8zM1081 403h8v8h-8zM1089 403h8v8h-8zM1097 403h8v8h-8zM1105 403h8v8h-8z"/><path fill="#067899" d="M1217 395h8v8h-8z"/><path fill="#127899" d="M1225 395h8v8h-8z"/><path fill="#217599" d="M1233 395h8v8h-8z"/><path fill="#307599" d="M1241 395h8v8h-8z"/><path fill="#3f7599" d="M1249 395h8v8h-8z"/><path fill="#4e7599" d="M1257 395h8v8h-8z"/><path fill="#5d7299" d="M1265 395h8v8h-8z"/><path fill="#6f7299" d="M1273 395h8v8h-8z"/><path fill="#846f99" d="M1281 395h8v8h-8z"/><path fill="#966f99" d="M1289 395h8v8h-8z"/><path fill="#99638a" d="M1297 395h8v8h-8z"/><path fill="#99577b" d="M1305 395h8v8h-8z"/><path fill="#994b6c" d="M1313 395h8v8h-8z"/><path fill="#994260" d="M1321 395h8v8h-8z"/><path fill="#993c57" d="M1329 395h8v8h-8z"/><path fill="#99364e" d="M1337 395h8v8h-8z"/><path fill="#993048" d="M1345 395h8v8h-8z"/><path fill="#992a42" d="M1353 395h8v8h-8z"/><path fill="#99273c" d="M1361 395h8v8h-8z"/><path fill="#992136" d="M1369 395h8v8h-8z"/><path fill="#991e33" d="M1377 395h8v8h-8z"/><path fill="#991b2d" d="M1385 395h8v8h-8z"/><path fill="#99182a" d="M1393 395h8v8h-8z"/><path fill="#991527" d="M1401 395h8v8h-8z"/><path fill="#991224" d="M1409 395h8v8h-8z"/><path fill="#990f21" d="M1417 395h8v8h-8z"/><path fill="#990f1e" d="M1425 395h8v8h-8z"/><path fill="#990c1b" d="M1433 395h8v8h-8z"/><path fill="#990918" d="M1441 395h8v8h-8z"/><path fill="#990915" d="M1449 395h8v8h-8z"/><path fill="#990615" d="M1457 395h8v8h-8z"/><path fill="#990612" d="M1465 395h8v8h-8z"/><path fill="#99030f" d="M1473 395h8v8h-8zM1481 395h8v8h-8z"/><path fill="#99000c" d="M1489 395h8v8h-8zM1497 395h8v8h-8zM1497 403h8v8h-8zM1505 403h8v8h-8zM1505 411h8v8h-8zM1513 411h8v8h-8zM1521 411h8v8h-8zM1521 419h8v8h-8zM1529 419h8v8h-8zM1529 427h8v8h-8zM1537 427h8v8h-8zM1537 435h8v8h-8zM1545 435h8v8h-8zM1545 443h8v8h-8zM1553 443h8v8h-8zM1561 443h8v8h-8z"/><path fill="#007599" d="M1113 403h8v8h-8zM1121 403h8v8h-8zM1129 403h8v8h-8zM1137 403h8v8h-8z"/><path fill="#007299" d="M1145 403h8v8h-8zM1153 403h8v8h-8zM1161 403h8v8h-8zM1169 403h8v8h-8z"/><path fill="#006f99" d="M1177 403h8v8h-8zM1185 403h8v8h-8zM1193 403h8v8h-8zM1201 403h8v8h-8zM1081 411h8v8h-8zM1089 411h8v8h-8zM1097 411h8v8h-8zM1105 411h8v8h-8z"/><path fill="#006c99" d="M1209 403h8v8h-8zM1113 411h8v8h-8zM1121 411h8v8h-8zM1129 411h8v8h-8z"/><path fill="#096c99" d="M1217 403h8v8h-8z"/><path fill="#156c99" d="M1225 403h8v8h-8z"/><path fill="#246999" d="M1233 403h8v8h-8z"/><path fill="#336999" d="M1241 403h8v8h-8z"/><path fill="#3f6699" d="M1249 403h8v8h-8z"/><path fill="#516699" d="M1257 403h8v8h-8z"/><path fill="#606699" d="M1265 403h8v8h-8z"/><path fill="#726399" d="M1273 403h8v8h-8z"/><path fill="#816399" d="M1281 403h8v8h-8z"/><path fill="#966099" d="M1289 403h8v8h-8z"/><path fill="#99578a" d="M1297 403h8v8h-8z"/><path fill="#994b7b" d="M1305 403h8v8h-8z"/><path fill="#99426f" d="M1313 403h8v8h-8z"/><path fill="#993963" d="M1321 403h8v8h-8z"/><path fill="#99335a" d="M1329 403h8v8h-8z"/><path fill="#992d51" d="M1337 403h8v8h-8z"/><path fill="#992a4b" d="M1345 403h8v8h-8z"/><path fill="#992445" d="M1353 403h8v8h-8z"/><path fill="#99213f" d="M1361 403h8v8h-8z"/><path fill="#991b39" d="M1369 403h8v8h-8z"/><path fill="#991833" d="M1377 403h8v8h-8z"/><path fill="#991530" d="M1385 403h8v8h-8z"/><path fill="#99122d" d="M1393 403h8v8h-8z"/><path fill="#99122a" d="M1401 403h8v8h-8z"/><path fill="#990f24" d="M1409 403h8v8h-8z"/><path fill="#990c21" d="M1417 403h8v8h-8z"/><path fill="#99091e" d="M1425 403h8v8h-8zM1433 403h8v8h-8z"/><path fill="#99061b" d="M1441 403h8v8h-8z"/><path fill="#990618" d="M1449 403h8v8h-8z"/><path fill="#990315" d="M1457 403h8v8h-8zM1465 403h8v8h-8z"/><path fill="#990012" d="M1473 403h8v8h-8zM1481 411h8v8h-8zM1489 411h8v8h-8zM1489 419h8v8h-8zM1497 419h8v8h-8zM1497 427h8v8h-8zM1505 427h8v8h-8zM1505 435h8v8h-8zM1513 435h8v8h-8zM1513 443h8v8h-8zM1521 443h8v8h-8zM1521 451h8v8h-8zM1529 451h8v8h-8z"/><path fill="#99000f" d="M1481 403h8v8h-8zM1489 403h8v8h-8zM1497 411h8v8h-8zM1505 419h8v8h-8zM1513 419h8v8h-8zM1513 427h8v8h-8zM1521 427h8v8h-8zM1521 435h8v8h-8zM1529 435h8v8h-8zM1529 443h8v8h-8zM1537 443h8v8h-8zM1537 451h8v8h-8zM1545 451h8v8h-8z"/><path fill="#006999" d="M1137 411h8v8h-8zM1145 411h8v8h-8zM1153 411h8v8h-8zM1161 411h8v8h-8z"/><path fill="#006699" d="M1169 411h8v8h-8zM1177 411h8v8h-8zM1185 411h8v8h-8zM1081 419h8v8h-8zM1089 419h8v8h-8zM1097 419h8v8h-8zM1105 419h8v8h-8z"/><path fill="#006399" d="M1193 411h8v8h-8zM1201 411h8v8h-8zM1113 419h8v8h-8zM1121 419h8v8h-8zM1129 419h8v8h-8z"/><path fill="#036399" d="M1209 411h8v8h-8z"/><path fill="#0f6099" d="M1217 411h8v8h-8z"/><path fill="#1b6099" d="M1225 411h8v8h-8z"/><path fill="#275d99" d="M1233 411h8v8h-8z"/><path fill="#365d99" d="M1241 411h8v8h-8z"/><path fill="#425a99" d="M1249 411h8v8h-8z"/><path fill="#515a99" d="M1257 411h8v8h-8z"/><path fill="#605799" d="M1265 411h8v8h-8z"/><path fill="#725799" d="M1273 411h8v8h-8z"/><path fill="#815499" d="M1281 411h8v8h-8z"/><path fill="#935499" d="M1289 411h8v8h-8z"/><path fill="#994b8d" d="M1297 411h8v8h-8z"/><path fill="#99427e" d="M1305 411h8v8h-8z"/><path fill="#993972" d="M1313 411h8v8h-8z"/><path fill="#993366" d="M1321 411h8v8h-8z"/><path fill="#992d5d" d="M1329 411h8v8h-8z"/><path fill="#992754" d="M1337 411h8v8h-8z"/><path fill="#99214e" d="M1345 411h8v8h-8z"/><path fill="#991e45" d="M1353 411h8v8h-8z"/><path fill="#991b42" d="M1361 411h8v8h-8z"/><path fill="#99183c" d="M1369 411h8v8h-8z"/><path fill="#991536" d="M1377 411h8v8h-8z"/><path fill="#991233" d="M1385 411h8v8h-8z"/><path fill="#990f2d" d="M1393 411h8v8h-8z"/><path fill="#990c2a" d="M1401 411h8v8h-8z"/><path fill="#990927" d="M1409 411h8v8h-8z"/><path fill="#990924" d="M1417 411h8v8h-8z"/><path fill="#990621" d="M1425 411h8v8h-8z"/><path fill="#99061e" d="M1433 411h8v8h-8z"/><path fill="#99031b" d="M1441 411h8v8h-8zM1449 411h8v8h-8z"/><path fill="#990018" d="M1457 411h8v8h-8zM1465 419h8v8h-8zM1473 427h8v8h-8zM1473 435h8v8h-8zM1481 435h8v8h-8zM1481 443h8v8h-8zM1489 443h8v8h-8zM1489 451h8v8h-8zM1497 451h8v8h-8zM1497 459h8v8h-8zM1505 459h8v8h-8z"/><path fill="#990015" d="M1465 411h8v8h-8zM1473 411h8v8h-8zM1473 419h8v8h-8zM1481 419h8v8h-8zM1481 427h8v8h-8zM1489 427h8v8h-8zM1489 435h8v8h-8zM1497 435h8v8h-8zM1497 443h8v8h-8zM1505 443h8v8h-8zM1505 451h8v8h-8zM1513 451h8v8h-8zM1513 459h8v8h-8zM1521 459h8v8h-8z"/><path fill="#006099" d="M1137 419h8v8h-8zM1145 419h8v8h-8zM1153 419h8v8h-8zM1081 427h8v8h-8zM1089 427h8v8h-8z"/><path fill="#005d99" d="M1161 419h8v8h-8zM1169 419h8v8h-8zM1177 419h8v8h-8zM1097 427h8v8h-8zM1105 427h8v8h-8zM1113 427h8v8h-8z"/><path fill="#005a99" d="M1185 419h8v8h-8zM1193 419h8v8h-8zM1201 419h8v8h-8zM1121 427h8v8h-8zM1129 427h8v8h-8zM1137 427h8v8h-8z"/><path fill="#065799" d="M1209 419h8v8h-8z"/><path fill="#125799" d="M1217 419h8v8h-8z"/><path fill="#1e5499" d="M1225 419h8v8h-8z"/><path fill="#2a5499" d="M1233 419h8v8h-8z"/><path fill="#365199" d="M1241 419h8v8h-8z"/><path fill="#455199" d="M1249 419h8v8h-8z"/><path fill="#544e99" d="M1257 419h8v8h-8z"/><path fill="#634e99" d="M1265 419h8v8h-8z"/><path fill="#724b99" d="M1273 419h8v8h-8z"/><path fill="#814899" d="M1281 419h8v8h-8z"/><path fill="#934899" d="M1289 419h8v8h-8z"/><path fill="#993f8d" d="M1297 419h8v8h-8z"/><path fill="#99367e" d="M1305 419h8v8h-8z"/><path fill="#993072" d="M1313 419h8v8h-8z"/><path fill="#992a69" d="M1321 419h8v8h-8z"/><path fill="#992460" d="M1329 419h8v8h-8z"/><path fill="#992157" d="M1337 419h8v8h-8z"/><path fill="#991b4e" d="M1345 419h8v8h-8z"/><path fill="#991848" d="M1353 419h8v8h-8z"/><path fill="#991542" d="M1361 419h8v8h-8z"/><path fill="#99123f" d="M1369 419h8v8h-8z"/><path fill="#990f39" d="M1377 419h8v8h-8z"/><path fill="#990c33" d="M1385 419h8v8h-8z"/><path fill="#990930" d="M1393 419h8v8h-8z"/><path fill="#99092d" d="M1401 419h8v8h-8z"/><path fill="#99062a" d="M1409 419h8v8h-8z"/><path fill="#990327" d="M1417 419h8v8h-8z"/><path fill="#990324" d="M1425 419h8v8h-8z"/><path fill="#990021" d="M1433 419h8v8h-8zM1441 427h8v8h-8zM1441 435h8v8h-8zM1449 435h8v8h-8zM1449 443h8v8h-8zM1457 451h8v8h-8zM1465 459h8v8h-8zM1465 467h8v8h-8zM1473 467h8v8h-8zM1473 475h8v8h-8z"/><path fill="#99001e" d="M1441 419h8v8h-8zM1449 427h8v8h-8zM1457 435h8v8h-8zM1457 443h8v8h-8zM1465 443h8v8h-8zM1465 451h8v8h-8zM1473 451h8v8h-8zM1473 459h8v8h-8zM1481 467h8v8h-8z"/><path fill="#99001b" d="M1449 419h8v8h-8zM1457 419h8v8h-8zM1457 427h8v8h-8zM1465 427h8v8h-8zM1465 435h8v8h-8zM1473 443h8v8h-8zM1481 451h8v8h-8zM1481 459h8v8h-8zM1489 459h8v8h-8zM1489 467h8v8h-8zM1497 467h8v8h-8z"/><path fill="#005799" d="M1145 427h8v8h-8zM1153 427h8v8h-8zM1089 435h8v8h-8zM1097 435h8v8h-8z"/><path fill="#005499" d="M1161 427h8v8h-8zM1169 427h8v8h-8zM1177 427h8v8h-8zM1105 435h8v8h-8zM1113 435h8v8h-8zM1121 435h8v8h-8z"/><path fill="#005199" d="M1185 427h8v8h-8zM1193 427h8v8h-8zM1129 435h8v8h-8zM1137 435h8v8h-8zM1145 435h8v8h-8zM1089 443h8v8h-8z"/><path fill="#004e99" d="M1201 427h8v8h-8zM1153 435h8v8h-8zM1161 435h8v8h-8zM1097 443h8v8h-8zM1105 443h8v8h-8zM1113 443h8v8h-8z"/><path fill="#094e99" d="M1209 427h8v8h-8z"/><path fill="#154b99" d="M1217 427h8v8h-8z"/><path fill="#214b99" d="M1225 427h8v8h-8z"/><path fill="#2d4899" d="M1233 427h8v8h-8z"/><path fill="#394899" d="M1241 427h8v8h-8z"/><path fill="#484599" d="M1249 427h8v8h-8z"/><path fill="#544599" d="M1257 427h8v8h-8z"/><path fill="#634299" d="M1265 427h8v8h-8z"/><path fill="#723f99" d="M1273 427h8v8h-8z"/><path fill="#813f99" d="M1281 427h8v8h-8z"/><path fill="#933c99" d="M1289 427h8v8h-8z"/><path fill="#993690" d="M1297 427h8v8h-8z"/><path fill="#992d81" d="M1305 427h8v8h-8z"/><path fill="#992775" d="M1313 427h8v8h-8z"/><path fill="#992169" d="M1321 427h8v8h-8z"/><path fill="#991e60" d="M1329 427h8v8h-8z"/><path fill="#99185a" d="M1337 427h8v8h-8z"/><path fill="#991551" d="M1345 427h8v8h-8z"/><path fill="#99124b" d="M1353 427h8v8h-8z"/><path fill="#990f45" d="M1361 427h8v8h-8z"/><path fill="#990c3f" d="M1369 427h8v8h-8z"/><path fill="#99093c" d="M1377 427h8v8h-8z"/><path fill="#990936" d="M1385 427h8v8h-8z"/><path fill="#990633" d="M1393 427h8v8h-8z"/><path fill="#990330" d="M1401 427h8v8h-8z"/><path fill="#99032d" d="M1409 427h8v8h-8z"/><path fill="#990027" d="M1417 427h8v8h-8zM1425 435h8v8h-8zM1433 443h8v8h-8zM1433 451h8v8h-8zM1441 451h8v8h-8zM1441 459h8v8h-8zM1449 467h8v8h-8zM1449 475h8v8h-8zM1457 475h8v8h-8zM1457 483h8v8h-8z"/><path fill="#990024" d="M1425 427h8v8h-8zM1433 427h8v8h-8zM1433 435h8v8h-8zM1441 443h8v8h-8zM1449 451h8v8h-8zM1449 459h8v8h-8zM1457 459h8v8h-8zM1457 467h8v8h-8zM1465 475h8v8h-8z"/><path fill="#004b99" d="M1169 435h8v8h-8zM1177 435h8v8h-8zM1121 443h8v8h-8zM1129 443h8v8h-8z"/><path fill="#004899" d="M1185 435h8v8h-8zM1193 435h8v8h-8zM1137 443h8v8h-8zM1145 443h8v8h-8zM1089 451h8v8h-8zM1097 451h8v8h-8zM1105 451h8v8h-8z"/><path fill="#034599" d="M1201 435h8v8h-8z"/><path fill="#0c4599" d="M1209 435h8v8h-8z"/><path fill="#184299" d="M1217 435h8v8h-8z"/><path fill="#244299" d="M1225 435h8v8h-8z"/><path fill="#303f99" d="M1233 435h8v8h-8z"/><path fill="#3c3f99" d="M1241 435h8v8h-8z"/><path fill="#483c99" d="M1249 435h8v8h-8z"/><path fill="#573999" d="M1257 435h8v8h-8z"/><path fill="#633999" d="M1265 435h8v8h-8z"/><path fill="#723699" d="M1273 435h8v8h-8z"/><path fill="#813399" d="M1281 435h8v8h-8z"/><path fill="#933099" d="M1289 435h8v8h-8z"/><path fill="#992d90" d="M1297 435h8v8h-8z"/><path fill="#992481" d="M1305 435h8v8h-8z"/><path fill="#992175" d="M1313 435h8v8h-8z"/><path fill="#991b6c" d="M1321 435h8v8h-8z"/><path fill="#991863" d="M1329 435h8v8h-8z"/><path fill="#99125a" d="M1337 435h8v8h-8z"/><path fill="#990f54" d="M1345 435h8v8h-8z"/><path fill="#990c4e" d="M1353 435h8v8h-8z"/><path fill="#990948" d="M1361 435h8v8h-8z"/><path fill="#990942" d="M1369 435h8v8h-8z"/><path fill="#99063c" d="M1377 435h8v8h-8z"/><path fill="#990339" d="M1385 435h8v8h-8z"/><path fill="#990336" d="M1393 435h8v8h-8z"/><path fill="#990030" d="M1401 435h8v8h-8zM1409 443h8v8h-8zM1409 451h8v8h-8zM1417 459h8v8h-8zM1425 467h8v8h-8zM1425 475h8v8h-8zM1433 483h8v8h-8zM1433 491h8v8h-8z"/><path fill="#99002d" d="M1409 435h8v8h-8zM1417 443h8v8h-8zM1417 451h8v8h-8zM1425 459h8v8h-8zM1433 467h8v8h-8zM1433 475h8v8h-8zM1441 483h8v8h-8z"/><path fill="#99002a" d="M1417 435h8v8h-8zM1425 443h8v8h-8zM1425 451h8v8h-8zM1433 459h8v8h-8zM1441 467h8v8h-8zM1441 475h8v8h-8zM1449 483h8v8h-8z"/><path fill="#004599" d="M1153 443h8v8h-8zM1161 443h8v8h-8zM1169 443h8v8h-8zM1113 451h8v8h-8zM1121 451h8v8h-8z"/><path fill="#004299" d="M1177 443h8v8h-8zM1185 443h8v8h-8zM1129 451h8v8h-8zM1137 451h8v8h-8zM1097 459h8v8h-8z"/><path fill="#003f99" d="M1193 443h8v8h-8zM1145 451h8v8h-8zM1153 451h8v8h-8zM1161 451h8v8h-8zM1105 459h8v8h-8zM1113 459h8v8h-8z"/><path fill="#063f99" d="M1201 443h8v8h-8z"/><path fill="#0f3c99" d="M1209 443h8v8h-8z"/><path fill="#1b3999" d="M1217 443h8v8h-8z"/><path fill="#273999" d="M1225 443h8v8h-8z"/><path fill="#333699" d="M1233 443h8v8h-8z"/><path fill="#3f3699" d="M1241 443h8v8h-8z"/><path fill="#4b3399" d="M1249 443h8v8h-8z"/><path fill="#573099" d="M1257 443h8v8h-8z"/><path fill="#662d99" d="M1265 443h8v8h-8z"/><path fill="#722d99" d="M1273 443h8v8h-8z"/><path fill="#812a99" d="M1281 443h8v8h-8z"/><path fill="#902799" d="M1289 443h8v8h-8z"/><path fill="#992493" d="M1297 443h8v8h-8z"/><path fill="#991e84" d="M1305 443h8v8h-8z"/><path fill="#991878" d="M1313 443h8v8h-8z"/><path fill="#99156f" d="M1321 443h8v8h-8z"/><path fill="#991266" d="M1329 443h8v8h-8z"/><path fill="#990c5d" d="M1337 443h8v8h-8z"/><path fill="#990954" d="M1345 443h8v8h-8z"/><path fill="#99094e" d="M1353 443h8v8h-8z"/><path fill="#990648" d="M1361 443h8v8h-8z"/><path fill="#990345" d="M1369 443h8v8h-8z"/><path fill="#99003f" d="M1377 443h8v8h-8zM1385 459h8v8h-8zM1385 467h8v8h-8zM1393 475h8v8h-8zM1393 483h8v8h-8zM1401 499h8v8h-8z"/><path fill="#99003c" d="M1385 443h8v8h-8zM1385 451h8v8h-8zM1393 467h8v8h-8zM1401 483h8v8h-8zM1401 491h8v8h-8zM1409 499h8v8h-8z"/><path fill="#990036" d="M1393 443h8v8h-8zM1401 451h8v8h-8zM1401 459h8v8h-8zM1409 467h8v8h-8zM1409 475h8v8h-8zM1417 483h8v8h-8zM1417 491h8v8h-8z"/><path fill="#990033" d="M1401 443h8v8h-8zM1409 459h8v8h-8zM1417 467h8v8h-8zM1417 475h8v8h-8zM1425 483h8v8h-8zM1425 491h8v8h-8z"/><path fill="#003c99" d="M1169 451h8v8h-8zM1121 459h8v8h-8zM1129 459h8v8h-8zM1137 459h8v8h-8zM1097 467h8v8h-8z"/><path fill="#003999" d="M1177 451h8v8h-8zM1185 451h8v8h-8zM1145 459h8v8h-8zM1153 459h8v8h-8zM1105 467h8v8h-8zM1113 467h8v8h-8z"/><path fill="#003699" d="M1193 451h8v8h-8zM1161 459h8v8h-8zM1169 459h8v8h-8zM1121 467h8v8h-8zM1129 467h8v8h-8zM1097 475h8v8h-8z"/><path fill="#093699" d="M1201 451h8v8h-8z"/><path fill="#153399" d="M1209 451h8v8h-8z"/><path fill="#1e3399" d="M1217 451h8v8h-8z"/><path fill="#2a3099" d="M1225 451h8v8h-8z"/><path fill="#332d99" d="M1233 451h8v8h-8z"/><path fill="#3f2d99" d="M1241 451h8v8h-8z"/><path fill="#4b2a99" d="M1249 451h8v8h-8z"/><path fill="#5a2799" d="M1257 451h8v8h-8z"/><path fill="#662799" d="M1265 451h8v8h-8z"/><path fill="#722499" d="M1273 451h8v8h-8z"/><path fill="#812199" d="M1281 451h8v8h-8z"/><path fill="#901e99" d="M1289 451h8v8h-8z"/><path fill="#991b93" d="M1297 451h8v8h-8z"/><path fill="#991584" d="M1305 451h8v8h-8z"/><path fill="#99127b" d="M1313 451h8v8h-8z"/><path fill="#990f6f" d="M1321 451h8v8h-8z"/><path fill="#990966" d="M1329 451h8v8h-8z"/><path fill="#99095d" d="M1337 451h8v8h-8z"/><path fill="#990657" d="M1345 451h8v8h-8z"/><path fill="#990351" d="M1353 451h8v8h-8z"/><path fill="#99004b" d="M1361 451h8v8h-8zM1369 475h8v8h-8zM1377 491h8v8h-8zM1377 499h8v8h-8z"/><path fill="#990045" d="M1369 451h8v8h-8zM1377 467h8v8h-8zM1377 475h8v8h-8zM1385 483h8v8h-8zM1385 491h8v8h-8z"/><path fill="#990042" d="M1377 451h8v8h-8zM1377 459h8v8h-8zM1385 475h8v8h-8zM1393 491h8v8h-8zM1393 499h8v8h-8z"/><path fill="#990039" d="M1393 451h8v8h-8zM1393 459h8v8h-8zM1401 467h8v8h-8zM1401 475h8v8h-8zM1409 483h8v8h-8zM1409 491h8v8h-8z"/><path fill="#003399" d="M1177 459h8v8h-8zM1137 467h8v8h-8zM1145 467h8v8h-8zM1105 475h8v8h-8zM1113 475h8v8h-8z"/><path fill="#003099" d="M1185 459h8v8h-8zM1153 467h8v8h-8zM1161 467h8v8h-8zM1121 475h8v8h-8zM1129 475h8v8h-8z"/><path fill="#033099" d="M1193 459h8v8h-8z"/><path fill="#0c2d99" d="M1201 459h8v8h-8z"/><path fill="#182d99" d="M1209 459h8v8h-8z"/><path fill="#212a99" d="M1217 459h8v8h-8z"/><path fill="#2a2799" d="M1225 459h8v8h-8z"/><path fill="#362799" d="M1233 459h8v8h-8z"/><path fill="#422499" d="M1241 459h8v8h-8z"/><path fill="#4e2199" d="M1249 459h8v8h-8z"/><path fill="#5a2199" d="M1257 459h8v8h-8z"/><path fill="#661e99" d="M1265 459h8v8h-8z"/><path fill="#751b99" d="M1273 459h8v8h-8z"/><path fill="#811899" d="M1281 459h8v8h-8z"/><path fill="#901599" d="M1289 459h8v8h-8z"/><path fill="#991293" d="M1297 459h8v8h-8z"/><path fill="#990f87" d="M1305 459h8v8h-8z"/><path fill="#99097b" d="M1313 459h8v8h-8z"/><path fill="#990672" d="M1321 459h8v8h-8z"/><path fill="#990669" d="M1329 459h8v8h-8z"/><path fill="#990360" d="M1337 459h8v8h-8z"/><path fill="#99005a" d="M1345 459h8v8h-8zM1345 467h8v8h-8zM1353 491h8v8h-8zM1353 499h8v8h-8zM1361 515h8v8h-8z"/><path fill="#990054" d="M1353 459h8v8h-8zM1353 467h8v8h-8zM1361 491h8v8h-8zM1361 499h8v8h-8z"/><path fill="#99004e" d="M1361 459h8v8h-8zM1361 467h8v8h-8zM1369 483h8v8h-8zM1369 491h8v8h-8zM1377 507h8v8h-8z"/><path fill="#990048" d="M1369 459h8v8h-8zM1369 467h8v8h-8zM1377 483h8v8h-8zM1385 499h8v8h-8zM1385 507h8v8h-8z"/><path fill="#002d99" d="M1169 467h8v8h-8zM1177 467h8v8h-8zM1137 475h8v8h-8zM1145 475h8v8h-8zM1105 483h8v8h-8zM1113 483h8v8h-8z"/><path fill="#002a99" d="M1185 467h8v8h-8zM1153 475h8v8h-8zM1161 475h8v8h-8zM1121 483h8v8h-8zM1129 483h8v8h-8z"/><path fill="#062a99" d="M1193 467h8v8h-8z"/><path fill="#0f2799" d="M1201 467h8v8h-8z"/><path fill="#182499" d="M1209 467h8v8h-8z"/><path fill="#242499" d="M1217 467h8v8h-8z"/><path fill="#2d2199" d="M1225 467h8v8h-8z"/><path fill="#391e99" d="M1233 467h8v8h-8z"/><path fill="#421e99" d="M1241 467h8v8h-8z"/><path fill="#4e1b99" d="M1249 467h8v8h-8z"/><path fill="#5a1899" d="M1257 467h8v8h-8z"/><path fill="#661599" d="M1265 467h8v8h-8z"/><path fill="#751299" d="M1273 467h8v8h-8z"/><path fill="#810f99" d="M1281 467h8v8h-8z"/><path fill="#900f99" d="M1289 467h8v8h-8z"/><path fill="#990c96" d="M1297 467h8v8h-8z"/><path fill="#990687" d="M1305 467h8v8h-8z"/><path fill="#99037e" d="M1313 467h8v8h-8z"/><path fill="#990072" d="M1321 467h8v8h-8zM1329 507h8v8h-8zM1329 515h8v8h-8z"/><path fill="#990069" d="M1329 467h8v8h-8zM1337 499h8v8h-8zM1337 507h8v8h-8z"/><path fill="#990063" d="M1337 467h8v8h-8zM1337 475h8v8h-8zM1345 507h8v8h-8zM1345 515h8v8h-8z"/><path fill="#002799" d="M1169 475h8v8h-8zM1177 475h8v8h-8zM1137 483h8v8h-8zM1145 483h8v8h-8zM1105 491h8v8h-8zM1113 491h8v8h-8z"/><path fill="#002499" d="M1185 475h8v8h-8zM1153 483h8v8h-8zM1161 483h8v8h-8zM1121 491h8v8h-8zM1129 491h8v8h-8z"/><path fill="#092199" d="M1193 475h8v8h-8z"/><path fill="#122199" d="M1201 475h8v8h-8z"/><path fill="#1b1e99" d="M1209 475h8v8h-8z"/><path fill="#271b99" d="M1217 475h8v8h-8z"/><path fill="#301b99" d="M1225 475h8v8h-8z"/><path fill="#391899" d="M1233 475h8v8h-8z"/><path fill="#451599" d="M1241 475h8v8h-8z"/><path fill="#511299" d="M1249 475h8v8h-8z"/><path fill="#5d1299" d="M1257 475h8v8h-8z"/><path fill="#690f99" d="M1265 475h8v8h-8z"/><path fill="#750c99" d="M1273 475h8v8h-8z"/><path fill="#810999" d="M1281 475h8v8h-8z"/><path fill="#8d0699" d="M1289 475h8v8h-8z"/><path fill="#990396" d="M1297 475h8v8h-8z"/><path fill="#99008a" d="M1305 475h8v8h-8zM1305 483h8v8h-8zM1305 491h8v8h-8z"/><path fill="#99007e" d="M1313 475h8v8h-8zM1313 483h8v8h-8zM1321 531h8v8h-8z"/><path fill="#990075" d="M1321 475h8v8h-8zM1321 483h8v8h-8zM1329 523h8v8h-8z"/><path fill="#99006c" d="M1329 475h8v8h-8zM1329 483h8v8h-8zM1337 515h8v8h-8zM1337 523h8v8h-8z"/><path fill="#99005d" d="M1345 475h8v8h-8zM1345 483h8v8h-8zM1353 507h8v8h-8zM1353 515h8v8h-8z"/><path fill="#990057" d="M1353 475h8v8h-8zM1353 483h8v8h-8zM1361 507h8v8h-8z"/><path fill="#990051" d="M1361 475h8v8h-8zM1361 483h8v8h-8zM1369 499h8v8h-8zM1369 507h8v8h-8z"/><path fill="#002199" d="M1169 483h8v8h-8zM1137 491h8v8h-8zM1145 491h8v8h-8zM1113 499h8v8h-8zM1121 499h8v8h-8z"/><path fill="#001e99" d="M1177 483h8v8h-8zM1153 491h8v8h-8zM1161 491h8v8h-8zM1129 499h8v8h-8z"/><path fill="#031e99" d="M1185 483h8v8h-8z"/><path fill="#0c1b99" d="M1193 483h8v8h-8z"/><path fill="#151b99" d="M1201 483h8v8h-8z"/><path fill="#1e1899" d="M1209 483h8v8h-8z"/><path fill="#271599" d="M1217 483h8v8h-8z"/><path fill="#331299" d="M1225 483h8v8h-8z"/><path fill="#3c1299" d="M1233 483h8v8h-8z"/><path fill="#480f99" d="M1241 483h8v8h-8z"/><path fill="#510c99" d="M1249 483h8v8h-8z"/><path fill="#5d0999" d="M1257 483h8v8h-8z"/><path fill="#690999" d="M1265 483h8v8h-8z"/><path fill="#750699" d="M1273 483h8v8h-8z"/><path fill="#810399" d="M1281 483h8v8h-8z"/><path fill="#8d0099" d="M1289 483h8v8h-8zM1289 491h8v8h-8zM1289 499h8v8h-8zM1289 507h8v8h-8zM1289 515h8v8h-8zM1289 523h8v8h-8zM1289 531h8v8h-8z"/><path fill="#990096" d="M1297 483h8v8h-8zM1297 491h8v8h-8z"/><path fill="#990066" d="M1337 483h8v8h-8zM1337 491h8v8h-8z"/><path fill="#001b99" d="M1169 491h8v8h-8zM1137 499h8v8h-8zM1145 499h8v8h-8zM1113 507h8v8h-8zM1121 507h8v8h-8z"/><path fill="#001899" d="M1177 491h8v8h-8zM1153 499h8v8h-8zM1161 499h8v8h-8zM1129 507h8v8h-8zM1137 507h8v8h-8z"/><path fill="#061899" d="M1185 491h8v8h-8z"/><path fill="#0f1599" d="M1193 491h8v8h-8z"/><path fill="#181299" d="M1201 491h8v8h-8z"/><path fill="#211299" d="M1209 491h8v8h-8z"/><path fill="#2a0f99" d="M1217 491h8v8h-8z"/><path fill="#330c99" d="M1225 491h8v8h-8z"/><path fill="#3f0c99" d="M1233 491h8v8h-8z"/><path fill="#480999" d="M1241 491h8v8h-8z"/><path fill="#540699" d="M1249 491h8v8h-8z"/><path fill="#5d0399" d="M1257 491h8v8h-8z"/><path fill="#690099" d="M1265 491h8v8h-8zM1265 499h8v8h-8zM1265 507h8v8h-8z"/><path fill="#750099" d="M1273 491h8v8h-8zM1273 499h8v8h-8zM1273 507h8v8h-8zM1273 515h8v8h-8zM1273 523h8v8h-8zM1273 531h8v8h-8zM1273 539h8v8h-8zM1273 547h8v8h-8z"/><path fill="#810099" d="M1281 491h8v8h-8zM1281 499h8v8h-8zM1281 507h8v8h-8zM1281 515h8v8h-8zM1281 523h8v8h-8zM1281 531h8v8h-8zM1281 539h8v8h-8z"/><path fill="#990081" d="M1313 491h8v8h-8zM1313 499h8v8h-8z"/><path fill="#990078" d="M1321 491h8v8h-8zM1321 499h8v8h-8z"/><path fill="#99006f" d="M1329 491h8v8h-8zM1329 499h8v8h-8z"/><path fill="#990060" d="M1345 491h8v8h-8zM1345 499h8v8h-8z"/><path fill="#001599" d="M1169 499h8v8h-8zM1177 499h8v8h-8zM1145 507h8v8h-8zM1153 507h8v8h-8zM1121 515h8v8h-8zM1129 515h8v8h-8z"/><path fill="#091299" d="M1185 499h8v8h-8z"/><path fill="#120f99" d="M1193 499h8v8h-8z"/><path fill="#1b0f99" d="M1201 499h8v8h-8z"/><path fill="#240c99" d="M1209 499h8v8h-8z"/><path fill="#2d0999" d="M1217 499h8v8h-8z"/><path fill="#360699" d="M1225 499h8v8h-8z"/><path fill="#3f0699" d="M1233 499h8v8h-8z"/><path fill="#4b0399" d="M1241 499h8v8h-8z"/><path fill="#540099" d="M1249 499h8v8h-8zM1249 507h8v8h-8z"/><path fill="#600099" d="M1257 499h8v8h-8zM1257 507h8v8h-8zM1257 515h8v8h-8zM1257 523h8v8h-8z"/><path fill="#990099" d="M1297 499h8v8h-8zM1297 507h8v8h-8zM1297 515h8v8h-8z"/><path fill="#99008d" d="M1305 499h8v8h-8zM1305 507h8v8h-8zM1305 515h8v8h-8z"/><path fill="#001299" d="M1161 507h8v8h-8zM1137 515h8v8h-8zM1121 523h8v8h-8z"/><path fill="#000f99" d="M1169 507h8v8h-8zM1145 515h8v8h-8zM1153 515h8v8h-8zM1129 523h8v8h-8z"/><path fill="#030f99" d="M1177 507h8v8h-8z"/><path fill="#0c0c99" d="M1185 507h8v8h-8z"/><path fill="#150999" d="M1193 507h8v8h-8z"/><path fill="#1e0999" d="M1201 507h8v8h-8z"/><path fill="#240699" d="M1209 507h8v8h-8z"/><path fill="#2d0399" d="M1217 507h8v8h-8z"/><path fill="#390399" d="M1225 507h8v8h-8z"/><path fill="#420099" d="M1233 507h8v8h-8zM1233 515h8v8h-8zM1225 555h8v8h-8zM1225 563h8v8h-8z"/><path fill="#4b0099" d="M1241 507h8v8h-8zM1241 515h8v8h-8z"/><path fill="#990084" d="M1313 507h8v8h-8zM1313 515h8v8h-8zM1313 523h8v8h-8z"/><path fill="#99007b" d="M1321 507h8v8h-8zM1321 515h8v8h-8zM1321 523h8v8h-8z"/><path fill="#000c99" d="M1161 515h8v8h-8zM1169 515h8v8h-8zM1137 523h8v8h-8zM1145 523h8v8h-8z"/><path fill="#060999" d="M1177 515h8v8h-8z"/><path fill="#0f0699" d="M1185 515h8v8h-8z"/><path fill="#180699" d="M1193 515h8v8h-8z"/><path fill="#1e0399" d="M1201 515h8v8h-8z"/><path fill="#270099" d="M1209 515h8v8h-8zM1201 547h8v8h-8z"/><path fill="#300099" d="M1217 515h8v8h-8zM1209 547h8v8h-8zM1209 555h8v8h-8z"/><path fill="#390099" d="M1225 515h8v8h-8zM1217 555h8v8h-8zM1217 563h8v8h-8z"/><path fill="#570099" d="M1249 515h8v8h-8zM1249 523h8v8h-8zM1249 531h8v8h-8z"/><path fill="#6c0099" d="M1265 515h8v8h-8zM1265 523h8v8h-8zM1265 531h8v8h-8zM1265 539h8v8h-8zM1265 547h8v8h-8z"/><path fill="#000999" d="M1153 523h8v8h-8zM1161 523h8v8h-8zM1129 531h8v8h-8zM1137 531h8v8h-8z"/><path fill="#030699" d="M1169 523h8v8h-8z"/><path fill="#090399" d="M1177 523h8v8h-8z"/><path fill="#120399" d="M1185 523h8v8h-8z"/><path fill="#180099" d="M1193 523h8v8h-8zM1185 547h8v8h-8z"/><path fill="#210099" d="M1201 523h8v8h-8zM1193 555h8v8h-8z"/><path fill="#2a0099" d="M1209 523h8v8h-8zM1209 531h8v8h-8zM1201 555h8v8h-8zM1201 563h8v8h-8z"/><path fill="#330099" d="M1217 523h8v8h-8zM1217 531h8v8h-8zM1209 563h8v8h-8zM1209 571h8v8h-8z"/><path fill="#3c0099" d="M1225 523h8v8h-8zM1225 531h8v8h-8z"/><path fill="#450099" d="M1233 523h8v8h-8zM1233 531h8v8h-8z"/><path fill="#4e0099" d="M1241 523h8v8h-8zM1241 531h8v8h-8z"/><path fill="#960099" d="M1297 523h8v8h-8zM1297 531h8v8h-8zM1297 539h8v8h-8z"/><path fill="#990090" d="M1305 523h8v8h-8zM1305 531h8v8h-8z"/><path fill="#000699" d="M1145 531h8v8h-8zM1153 531h8v8h-8z"/><path fill="#000399" d="M1161 531h8v8h-8zM1137 539h8v8h-8zM1145 539h8v8h-8z"/><path fill="#030099" d="M1169 531h8v8h-8zM1161 547h8v8h-8z"/><path fill="#0c0099" d="M1177 531h8v8h-8zM1169 555h8v8h-8z"/><path fill="#120099" d="M1185 531h8v8h-8zM1177 555h8v8h-8z"/><path fill="#1b0099" d="M1193 531h8v8h-8zM1185 555h8v8h-8zM1185 563h8v8h-8z"/><path fill="#240099" d="M1201 531h8v8h-8zM1201 539h8v8h-8zM1193 563h8v8h-8zM1193 571h8v8h-8z"/><path fill="#630099" d="M1257 531h8v8h-8zM1257 539h8v8h-8zM1257 547h8v8h-8z"/><path fill="#990087" d="M1313 531h8v8h-8z"/><path fill="#000099" d="M1153 539h8v8h-8zM1161 539h8v8h-8zM1137 547h8v8h-8zM1145 547h8v8h-8zM1153 547h8v8h-8zM1145 555h8v8h-8zM1153 555h8v8h-8zM1153 563h8v8h-8z"/><path fill="#060099" d="M1169 539h8v8h-8zM1161 555h8v8h-8zM1161 563h8v8h-8z"/><path fill="#0f0099" d="M1177 539h8v8h-8zM1177 547h8v8h-8zM1169 563h8v8h-8zM1169 571h8v8h-8z"/><path fill="#150099" d="M1185 539h8v8h-8zM1177 563h8v8h-8zM1177 571h8v8h-8zM1177 579h8v8h-8z"/><path fill="#1e0099" d="M1193 539h8v8h-8zM1193 547h8v8h-8zM1185 571h8v8h-8zM1185 579h8v8h-8z"/><path fill="#2d0099" d="M1209 539h8v8h-8zM1201 571h8v8h-8z"/><path fill="#360099" d="M1217 539h8v8h-8zM1217 547h8v8h-8z"/><path fill="#3f0099" d="M1225 539h8v8h-8zM1225 547h8v8h-8z"/><path fill="#480099" d="M1233 539h8v8h-8zM1233 547h8v8h-8zM1233 555h8v8h-8z"/><path fill="#510099" d="M1241 539h8v8h-8zM1241 547h8v8h-8zM1241 555h8v8h-8z"/><path fill="#5a0099" d="M1249 539h8v8h-8zM1249 547h8v8h-8zM1249 555h8v8h-8z"/><path fill="#8a0099" d="M1289 539h8v8h-8z"/><path fill="#090099" d="M1169 547h8v8h-8z"/></g></g>
<g clip-path="url(#tri)"><g filter="url(#blur2)"><path fill="#00ff00" d="M1279 211h5v5h-5zM1279 216h5v5h-5z"/><path fill="#03ff00" d="M1284 211h5v5h-5z"/><path fill="#00ff03" d="M1274 216h5v5h-5zM1279 221h5v5h-5z"/><path fill="#06ff00" d="M1284 216h5v5h-5z"/><path fill="#0cff00" d="M1289 216h5v5h-5z"/><path fill="#15ff00" d="M1294 216h5v5h-5z"/><path fill="#00ff06" d="M1274 221h5v5h-5z"/><path fill="#09ff03" d="M1284 221h5v5h-5z"/><path fill="#0fff00" d="M1289 221h5v5h-5z"/><path fill="#18ff00" d="M1294 221h5v5h-5z"/><path fill="#1eff00" d="M1299 221h5v5h-5z"/><path fill="#00ff0c" d="M1269 226h5v5h-5zM1274 231h5v5h-5z"/><path fill="#00ff09" d="M1274 226h5v5h-5z"/><path fill="#03ff06" d="M1279 226h5v5h-5z"/><path fill="#0cff06" d="M1284 226h5v5h-5z"/><path fill="#12ff03" d="M1289 226h5v5h-5z"/><path fill="#1bff00" d="M1294 226h5v5h-5z"/><path fill="#21ff00" d="M1299 226h5v5h-5z"/><path fill="#2aff00" d="M1304 226h5v5h-5z"/><path fill="#33ff00" d="M1309 226h5v5h-5z"/><path fill="#00ff0f" d="M1269 231h5v5h-5z"/><path fill="#06ff0c" d="M1279 231h5v5h-5z"/><path fill="#0fff09" d="M1284 231h5v5h-5z"/><path fill="#15ff06" d="M1289 231h5v5h-5z"/><path fill="#1eff06" d="M1294 231h5v5h-5z"/><path fill="#27ff03" d="M1299 231h5v5h-5z"/><path fill="#2dff00" d="M1304 231h5v5h-5z"/><path fill="#36ff00" d="M1309 231h5v5h-5z"/><path fill="#3fff00" d="M1314 231h5v5h-5z"/><path fill="#48ff00" d="M1319 231h5v5h-5z"/><path fill="#00ff12" d="M1269 236h5v5h-5zM1274 236h5v5h-5z"/><path fill="#09ff0f" d="M1279 236h5v5h-5z"/><path fill="#12ff0c" d="M1284 236h5v5h-5z"/><path fill="#18ff0c" d="M1289 236h5v5h-5z"/><path fill="#21ff09" d="M1294 236h5v5h-5z"/><path fill="#2aff06" d="M1299 236h5v5h-5z"/><path fill="#33ff03" d="M1304 236h5v5h-5z"/><path fill="#3cff03" d="M1309 236h5v5h-5z"/><path fill="#45ff00" d="M1314 236h5v5h-5z"/><path fill="#4eff00" d="M1319 236h5v5h-5z"/><path fill="#57ff00" d="M1324 236h5v5h-5z"/><path fill="#00ff18" d="M1264 241h5v5h-5z"/><path fill="#00ff15" d="M1269 241h5v5h-5z"/><path fill="#03ff15" d="M1274 241h5v5h-5z"/><path fill="#0cff12" d="M1279 241h5v5h-5z"/><path fill="#15ff0f" d="M1284 241h5v5h-5z"/><path fill="#1eff0f" d="M1289 241h5v5h-5z"/><path fill="#24ff0c" d="M1294 241h5v5h-5z"/><path fill="#2dff09" d="M1299 241h5v5h-5z"/><path fill="#36ff09" d="M1304 241h5v5h-5z"/><path fill="#3fff06" d="M1309 241h5v5h-5z"/><path fill="#48ff03" d="M1314 241h5v5h-5z"/><path fill="#51ff00" d="M1319 241h5v5h-5z"/><path fill="#5aff00" d="M1324 241h5v5h-5z"/><path fill="#66ff00" d="M1329 241h5v5h-5z"/><path fill="#6fff00" d="M1334 241h5v5h-5z"/><path fill="#00ff1b" d="M1264 246h5v5h-5zM1269 246h5v5h-5z"/><path fill="#06ff18" d="M1274 246h5v5h-5z"/><path fill="#0fff15" d="M1279 246h5v5h-5z"/><path fill="#18ff15" d="M1284 246h5v5h-5z"/><path fill="#21ff12" d="M1289 246h5v5h-5z"/><path fill="#2aff0f" d="M1294 246h5v5h-5z"/><path fill="#33ff0f" d="M1299 246h5v5h-5z"/><path fill="#3cff0c" d="M1304 246h5v5h-5z"/><path fill="#45ff09" d="M1309 246h5v5h-5z"/><path fill="#4eff06" d="M1314 246h5v5h-5z"/><path fill="#57ff06" d="M1319 246h5v5h-5z"/><path fill="#60ff03" d="M1324 246h5v5h-5z"/><path fill="#69ff00" d="M1329 246h5v5h-5z"/><path fill="#75ff00" d="M1334 246h5v5h-5z"/><path fill="#7eff00" d="M1339 246h5v5h-5z"/><path fill="#8aff00" d="M1344 246h5v5h-5z"/><path fill="#00ff21" d="M1264 251h5v5h-5z"/><path fill="#03ff1e" d="M1269 251h5v5h-5z"/><path fill="#09ff1e" d="M1274 251h5v5h-5z"/><path fill="#12ff1b" d="M1279 251h5v5h-5z"/><path fill="#1bff18" d="M1284 251h5v5h-5z"/><path fill="#24ff15" d="M1289 251h5v5h-5z"/><path fill="#2dff15" d="M1294 251h5v5h-5z"/><path fill="#36ff12" d="M1299 251h5v5h-5z"/><path fill="#3fff0f" d="M1304 251h5v5h-5z"/><path fill="#48ff0f" d="M1309 251h5v5h-5z"/><path fill="#51ff0c" d="M1314 251h5v5h-5z"/><path fill="#5dff09" d="M1319 251h5v5h-5z"/><path fill="#66ff06" d="M1324 251h5v5h-5z"/><path fill="#6fff06" d="M1329 251h5v5h-5z"/><path fill="#7bff03" d="M1334 251h5v5h-5z"/><path fill="#84ff00" d="M1339 251h5v5h-5z"/><path fill="#90ff00" d="M1344 251h5v5h-5z"/><path fill="#9cff00" d="M1349 251h5v5h-5z"/><path fill="#00ff27" d="M1259 256h5v5h-5z"/><path fill="#00ff24" d="M1264 256h5v5h-5z"/><path fill="#06ff24" d="M1269 256h5v5h-5z"/><path fill="#0cff21" d="M1274 256h5v5h-5z"/><path fill="#15ff1e" d="M1279 256h5v5h-5z"/><path fill="#1eff1e" d="M1284 256h5v5h-5z"/><path fill="#27ff1b" d="M1289 256h5v5h-5z"/><path fill="#30ff18" d="M1294 256h5v5h-5z"/><path fill="#39ff18" d="M1299 256h5v5h-5z"/><path fill="#45ff15" d="M1304 256h5v5h-5z"/><path fill="#4eff12" d="M1309 256h5v5h-5z"/><path fill="#57ff0f" d="M1314 256h5v5h-5z"/><path fill="#63ff0f" d="M1319 256h5v5h-5z"/><path fill="#6cff0c" d="M1324 256h5v5h-5z"/><path fill="#75ff09" d="M1329 256h5v5h-5z"/><path fill="#81ff06" d="M1334 256h5v5h-5z"/><path fill="#8dff03" d="M1339 256h5v5h-5z"/><path fill="#96ff00" d="M1344 256h5v5h-5z"/><path fill="#a2ff00" d="M1349 256h5v5h-5z"/><path fill="#aeff00" d="M1354 256h5v5h-5z"/><path fill="#baff00" d="M1359 256h5v5h-5z"/><path fill="#00ff2a" d="M1259 261h5v5h-5zM1264 261h5v5h-5z"/><path fill="#09ff27" d="M1269 261h5v5h-5z"/><path fill="#12ff24" d="M1274 261h5v5h-5z"/><path fill="#1bff24" d="M1279 261h5v5h-5z"/><path fill="#24ff21" d="M1284 261h5v5h-5z"/><path fill="#2dff1e" d="M1289 261h5v5h-5z"/><path fill="#36ff1e" d="M1294 261h5v5h-5z"/><path fill="#3fff1b" d="M1299 261h5v5h-5z"/><path fill="#48ff18" d="M1304 261h5v5h-5z"/><path fill="#54ff18" d="M1309 261h5v5h-5z"/><path fill="#5dff15" d="M1314 261h5v5h-5z"/><path fill="#66ff12" d="M1319 261h5v5h-5z"/><path fill="#72ff0f" d="M1324 261h5v5h-5z"/><path fill="#7eff0c" d="M1329 261h5v5h-5z"/><path fill="#87ff0c" d="M1334 261h5v5h-5z"/><path fill="#93ff09" d="M1339 261h5v5h-5z"/><path fill="#9fff06" d="M1344 261h5v5h-5z"/><path fill="#abff03" d="M1349 261h5v5h-5z"/><path fill="#b7ff00" d="M1354 261h5v5h-5z"/><path fill="#c3ff00" d="M1359 261h5v5h-5z"/><path fill="#cfff00" d="M1364 261h5v5h-5z"/><path fill="#dbff00" d="M1369 261h5v5h-5z"/><path fill="#00ff30" d="M1259 266h5v5h-5z"/><path fill="#03ff2d" d="M1264 266h5v5h-5z"/><path fill="#0cff2d" d="M1269 266h5v5h-5z"/><path fill="#15ff2a" d="M1274 266h5v5h-5z"/><path fill="#1eff27" d="M1279 266h5v5h-5z"/><path fill="#27ff27" d="M1284 266h5v5h-5z"/><path fill="#30ff24" d="M1289 266h5v5h-5z"/><path fill="#39ff21" d="M1294 266h5v5h-5z"/><path fill="#45ff21" d="M1299 266h5v5h-5z"/><path fill="#4eff1e" d="M1304 266h5v5h-5z"/><path fill="#57ff1b" d="M1309 266h5v5h-5z"/><path fill="#63ff18" d="M1314 266h5v5h-5z"/><path fill="#6cff18" d="M1319 266h5v5h-5z"/><path fill="#78ff15" d="M1324 266h5v5h-5z"/><path fill="#84ff12" d="M1329 266h5v5h-5z"/><path fill="#90ff0f" d="M1334 266h5v5h-5z"/><path fill="#99ff0c" d="M1339 266h5v5h-5z"/><path fill="#a5ff09" d="M1344 266h5v5h-5z"/><path fill="#b1ff09" d="M1349 266h5v5h-5z"/><path fill="#c0ff06" d="M1354 266h5v5h-5z"/><path fill="#ccff03" d="M1359 266h5v5h-5z"/><path fill="#d8ff00" d="M1364 266h5v5h-5z"/><path fill="#e7ff00" d="M1369 266h5v5h-5z"/><path fill="#f3ff00" d="M1374 266h5v5h-5z"/><path fill="#00ff36" d="M1254 271h5v5h-5zM1259 271h5v5h-5z"/><path fill="#06ff33" d="M1264 271h5v5h-5z"/><path fill="#0fff30" d="M1269 271h5v5h-5z"/><path fill="#18ff30" d="M1274 271h5v5h-5z"/><path fill="#21ff2d" d="M1279 271h5v5h-5z"/><path fill="#2aff2a" d="M1284 271h5v5h-5z"/><path fill="#36ff2a" d="M1289 271h5v5h-5z"/><path fill="#3fff27" d="M1294 271h5v5h-5z"/><path fill="#48ff24" d="M1299 271h5v5h-5z"/><path fill="#54ff24" d="M1304 271h5v5h-5z"/><path fill="#5dff21" d="M1309 271h5v5h-5z"/><path fill="#69ff1e" d="M1314 271h5v5h-5z"/><path fill="#75ff1b" d="M1319 271h5v5h-5z"/><path fill="#7eff18" d="M1324 271h5v5h-5z"/><path fill="#8aff18" d="M1329 271h5v5h-5z"/><path fill="#96ff15" d="M1334 271h5v5h-5z"/><path fill="#a2ff12" d="M1339 271h5v5h-5z"/><path fill="#aeff0f" d="M1344 271h5v5h-5z"/><path fill="#baff0c" d="M1349 271h5v5h-5z"/><path fill="#c9ff09" d="M1354 271h5v5h-5z"/><path fill="#d5ff06" d="M1359 271h5v5h-5z"/><path fill="#e1ff03" d="M1364 271h5v5h-5z"/><path fill="#f0ff00" d="M1369 271h5v5h-5z"/><path fill="#ffff00" d="M1374 271h5v5h-5z"/><path fill="#fff300" d="M1379 271h5v5h-5z"/><path fill="#ffe700" d="M1384 271h5v5h-5zM1379 276h5v5h-5z"/><path fill="#00ff3c" d="M1254 276h5v5h-5z"/><path fill="#00ff39" d="M1259 276h5v5h-5z"/><path fill="#09ff39" d="M1264 276h5v5h-5z"/><path fill="#12ff36" d="M1269 276h5v5h-5z"/><path fill="#1bff33" d="M1274 276h5v5h-5z"/><path fill="#27ff33" d="M1279 276h5v5h-5z"/><path fill="#30ff30" d="M1284 276h5v5h-5z"/><path fill="#39ff2d" d="M1289 276h5v5h-5z"/><path fill="#45ff2d" d="M1294 276h5v5h-5z"/><path fill="#4eff2a" d="M1299 276h5v5h-5z"/><path fill="#5aff27" d="M1304 276h5v5h-5z"/><path fill="#63ff24" d="M1309 276h5v5h-5z"/><path fill="#6fff24" d="M1314 276h5v5h-5z"/><path fill="#7bff21" d="M1319 276h5v5h-5z"/><path fill="#87ff1e" d="M1324 276h5v5h-5z"/><path fill="#93ff1b" d="M1329 276h5v5h-5z"/><path fill="#9fff1b" d="M1334 276h5v5h-5z"/><path fill="#abff18" d="M1339 276h5v5h-5z"/><path fill="#b7ff15" d="M1344 276h5v5h-5z"/><path fill="#c3ff12" d="M1349 276h5v5h-5z"/><path fill="#d2ff0f" d="M1354 276h5v5h-5z"/><path fill="#deff0c" d="M1359 276h5v5h-5z"/><path fill="#edff09" d="M1364 276h5v5h-5z"/><path fill="#fcff06" d="M1369 276h5v5h-5z"/><path fill="#fff603" d="M1374 276h5v5h-5z"/><path fill="#ffdb00" d="M1384 276h5v5h-5z"/><path fill="#ffd200" d="M1389 276h5v5h-5z"/><path fill="#00ff42" d="M1254 281h5v5h-5z"/><path fill="#03ff3f" d="M1259 281h5v5h-5z"/><path fill="#0cff3f" d="M1264 281h5v5h-5z"/><path fill="#18ff3c" d="M1269 281h5v5h-5z"/><path fill="#21ff39" d="M1274 281h5v5h-5z"/><path fill="#2aff39" d="M1279 281h5v5h-5z"/><path fill="#33ff36" d="M1284 281h5v5h-5z"/><path fill="#3fff33" d="M1289 281h5v5h-5z"/><path fill="#48ff33" d="M1294 281h5v5h-5z"/><path fill="#54ff30" d="M1299 281h5v5h-5z"/><path fill="#60ff2d" d="M1304 281h5v5h-5z"/><path fill="#69ff2a" d="M1309 281h5v5h-5z"/><path fill="#75ff2a" d="M1314 281h5v5h-5z"/><path fill="#81ff27" d="M1319 281h5v5h-5z"/><path fill="#8dff24" d="M1324 281h5v5h-5z"/><path fill="#99ff21" d="M1329 281h5v5h-5z"/><path fill="#a5ff1e" d="M1334 281h5v5h-5z"/><path fill="#b4ff1b" d="M1339 281h5v5h-5z"/><path fill="#c0ff1b" d="M1344 281h5v5h-5z"/><path fill="#ccff18" d="M1349 281h5v5h-5z"/><path fill="#dbff15" d="M1354 281h5v5h-5z"/><path fill="#eaff12" d="M1359 281h5v5h-5z"/><path fill="#f9ff0f" d="M1364 281h5v5h-5z"/><path fill="#fff90c" d="M1369 281h5v5h-5z"/><path fill="#ffea09" d="M1374 281h5v5h-5z"/><path fill="#ffde06" d="M1379 281h5v5h-5z"/><path fill="#ffd203" d="M1384 281h5v5h-5z"/><path fill="#ffc900" d="M1389 281h5v5h-5z"/><path fill="#ffbd00" d="M1394 281h5v5h-5z"/><path fill="#ffb400" d="M1399 281h5v5h-5z"/><path fill="#00ff48" d="M1249 286h5v5h-5zM1254 286h5v5h-5z"/><path fill="#06ff45" d="M1259 286h5v5h-5z"/><path fill="#12ff42" d="M1264 286h5v5h-5z"/><path fill="#1bff42" d="M1269 286h5v5h-5z"/><path fill="#24ff3f" d="M1274 286h5v5h-5z"/><path fill="#30ff3c" d="M1279 286h5v5h-5z"/><path fill="#39ff3c" d="M1284 286h5v5h-5z"/><path fill="#45ff39" d="M1289 286h5v5h-5z"/><path fill="#4eff36" d="M1294 286h5v5h-5z"/><path fill="#5aff36" d="M1299 286h5v5h-5z"/><path fill="#66ff33" d="M1304 286h5v5h-5z"/><path fill="#72ff30" d="M1309 286h5v5h-5z"/><path fill="#7eff2d" d="M1314 286h5v5h-5z"/><path fill="#8aff2d" d="M1319 286h5v5h-5z"/><path fill="#96ff2a" d="M1324 286h5v5h-5z"/><path fill="#a2ff27" d="M1329 286h5v5h-5z"/><path fill="#aeff24" d="M1334 286h5v5h-5z"/><path fill="#bdff21" d="M1339 286h5v5h-5z"/><path fill="#c9ff21" d="M1344 286h5v5h-5z"/><path fill="#d8ff1e" d="M1349 286h5v5h-5z"/><path fill="#e7ff1b" d="M1354 286h5v5h-5z"/><path fill="#f6ff18" d="M1359 286h5v5h-5z"/><path fill="#fffc15" d="M1364 286h5v5h-5z"/><path fill="#ffed0f" d="M1369 286h5v5h-5z"/><path fill="#ffe10c" d="M1374 286h5v5h-5z"/><path fill="#ffd509" d="M1379 286h5v5h-5z"/><path fill="#ffc906" d="M1384 286h5v5h-5z"/><path fill="#ffc003" d="M1389 286h5v5h-5z"/><path fill="#ffb700" d="M1394 286h5v5h-5z"/><path fill="#ffae00" d="M1399 286h5v5h-5z"/><path fill="#ffa500" d="M1404 286h5v5h-5z"/><path fill="#ff9c00" d="M1409 286h5v5h-5zM1404 291h5v5h-5z"/><path fill="#00ff4e" d="M1249 291h5v5h-5zM1254 291h5v5h-5z"/><path fill="#0cff4b" d="M1259 291h5v5h-5z"/><path fill="#15ff48" d="M1264 291h5v5h-5z"/><path fill="#1eff48" d="M1269 291h5v5h-5z"/><path fill="#2aff45" d="M1274 291h5v5h-5z"/><path fill="#33ff42" d="M1279 291h5v5h-5z"/><path fill="#3fff42" d="M1284 291h5v5h-5z"/><path fill="#48ff3f" d="M1289 291h5v5h-5z"/><path fill="#54ff3c" d="M1294 291h5v5h-5z"/><path fill="#60ff3c" d="M1299 291h5v5h-5z"/><path fill="#6cff39" d="M1304 291h5v5h-5z"/><path fill="#78ff36" d="M1309 291h5v5h-5z"/><path fill="#84ff33" d="M1314 291h5v5h-5z"/><path fill="#90ff33" d="M1319 291h5v5h-5z"/><path fill="#9cff30" d="M1324 291h5v5h-5z"/><path fill="#abff2d" d="M1329 291h5v5h-5z"/><path fill="#b7ff2a" d="M1334 291h5v5h-5z"/><path fill="#c6ff27" d="M1339 291h5v5h-5z"/><path fill="#d5ff27" d="M1344 291h5v5h-5z"/><path fill="#e1ff24" d="M1349 291h5v5h-5z"/><path fill="#f0ff21" d="M1354 291h5v5h-5z"/><path fill="#ffff1e" d="M1359 291h5v5h-5z"/><path fill="#fff018" d="M1364 291h5v5h-5z"/><path fill="#ffe115" d="M1369 291h5v5h-5z"/><path fill="#ffd512" d="M1374 291h5v5h-5z"/><path fill="#ffc90f" d="M1379 291h5v5h-5z"/><path fill="#ffc009" d="M1384 291h5v5h-5z"/><path fill="#ffb709" d="M1389 291h5v5h-5z"/><path fill="#ffae06" d="M1394 291h5v5h-5z"/><path fill="#ffa503" d="M1399 291h5v5h-5z"/><path fill="#ff9600" d="M1409 291h5v5h-5z"/><path fill="#ff9000" d="M1414 291h5v5h-5zM1409 296h5v5h-5z"/><path fill="#00ff57" d="M1244 296h5v5h-5z"/><path fill="#00ff54" d="M1249 296h5v5h-5z"/><path fill="#06ff54" d="M1254 296h5v5h-5z"/><path fill="#0fff51" d="M1259 296h5v5h-5z"/><path fill="#18ff4e" d="M1264 296h5v5h-5z"/><path fill="#24ff4e" d="M1269 296h5v5h-5z"/><path fill="#2dff4b" d="M1274 296h5v5h-5z"/><path fill="#39ff4b" d="M1279 296h5v5h-5z"/><path fill="#45ff48" d="M1284 296h5v5h-5z"/><path fill="#4eff45" d="M1289 296h5v5h-5z"/><path fill="#5aff45" d="M1294 296h5v5h-5z"/><path fill="#66ff42" d="M1299 296h5v5h-5z"/><path fill="#72ff3f" d="M1304 296h5v5h-5z"/><path fill="#7eff3c" d="M1309 296h5v5h-5z"/><path fill="#8dff3c" d="M1314 296h5v5h-5z"/><path fill="#99ff39" d="M1319 296h5v5h-5z"/><path fill="#a5ff36" d="M1324 296h5v5h-5z"/><path fill="#b4ff33" d="M1329 296h5v5h-5z"/><path fill="#c3ff30" d="M1334 296h5v5h-5z"/><path fill="#cfff30" d="M1339 296h5v5h-5z"/><path fill="#deff2d" d="M1344 296h5v5h-5z"/><path fill="#edff2a" d="M1349 296h5v5h-5z"/><path fill="#fcff27" d="M1354 296h5v5h-5z"/><path fill="#fff321" d="M1359 296h5v5h-5z"/><path fill="#ffe41e" d="M1364 296h5v5h-5z"/><path fill="#ffd818" d="M1369 296h5v5h-5z"/><path fill="#ffcc15" d="M1374 296h5v5h-5z"/><path fill="#ffc012" d="M1379 296h5v5h-5z"/><path fill="#ffb70f" d="M1384 296h5v5h-5z"/><path fill="#ffae0c" d="M1389 296h5v5h-5z"/><path fill="#ffa509" d="M1394 296h5v5h-5z"/><path fill="#ff9c06" d="M1399 296h5v5h-5z"/><path fill="#ff9603" d="M1404 296h5v5h-5z"/><path fill="#ff8a00" d="M1414 296h5v5h-5z"/><path fill="#ff8100" d="M1419 296h5v5h-5z"/><path fill="#ff7e00" d="M1424 296h5v5h-5z"/><path fill="#00ff5d" d="M1244 301h5v5h-5z"/><path fill="#00ff5a" d="M1249 301h5v5h-5z"/><path fill="#09ff5a" d="M1254 301h5v5h-5z"/><path fill="#12ff57" d="M1259 301h5v5h-5z"/><path fill="#1eff57" d="M1264 301h5v5h-5z"/><path fill="#27ff54" d="M1269 301h5v5h-5z"/><path fill="#33ff51" d="M1274 301h5v5h-5z"/><path fill="#3fff51" d="M1279 301h5v5h-5z"/><path fill="#48ff4e" d="M1284 301h5v5h-5z"/><path fill="#54ff4b" d="M1289 301h5v5h-5z"/><path fill="#60ff4b" d="M1294 301h5v5h-5z"/><path fill="#6cff48" d="M1299 301h5v5h-5z"/><path fill="#7bff45" d="M1304 301h5v5h-5z"/><path fill="#87ff45" d="M1309 301h5v5h-5z"/><path fill="#93ff42" d="M1314 301h5v5h-5z"/><path fill="#a2ff3f" d="M1319 301h5v5h-5z"/><path fill="#aeff3c" d="M1324 301h5v5h-5z"/><path fill="#bdff3c" d="M1329 301h5v5h-5z"/><path fill="#ccff39" d="M1334 301h5v5h-5z"/><path fill="#dbff36" d="M1339 301h5v5h-5z"/><path fill="#eaff33" d="M1344 301h5v5h-5z"/><path fill="#f9ff30" d="M1349 301h5v5h-5z"/><path fill="#fff62d" d="M1354 301h5v5h-5z"/><path fill="#ffe727" d="M1359 301h5v5h-5z"/><path fill="#ffd821" d="M1364 301h5v5h-5z"/><path fill="#ffcc1e" d="M1369 301h5v5h-5z"/><path fill="#ffc31b" d="M1374 301h5v5h-5z"/><path fill="#ffb715" d="M1379 301h5v5h-5z"/><path fill="#ffae12" d="M1384 301h5v5h-5z"/><path fill="#ffa50f" d="M1389 301h5v5h-5z"/><path fill="#ff9f0c" d="M1394 301h5v5h-5z"/><path fill="#ff9609" d="M1399 301h5v5h-5z"/><path fill="#ff9006" d="M1404 301h5v5h-5z"/><path fill="#ff8706" d="M1409 301h5v5h-5z"/><path fill="#ff8103" d="M1414 301h5v5h-5z"/><path fill="#ff7b00" d="M1419 301h5v5h-5z"/><path fill="#ff7800" d="M1424 301h5v5h-5z"/><path fill="#ff7200" d="M1429 301h5v5h-5z"/><path fill="#ff6c00" d="M1434 301h5v5h-5zM1429 306h5v5h-5z"/><path fill="#00ff63" d="M1244 306h5v5h-5z"/><path fill="#03ff63" d="M1249 306h5v5h-5z"/><path fill="#0cff60" d="M1254 306h5v5h-5z"/><path fill="#18ff60" d="M1259 306h5v5h-5z"/><path fill="#21ff5d" d="M1264 306h5v5h-5z"/><path fill="#2dff5a" d="M1269 306h5v5h-5z"/><path fill="#39ff5a" d="M1274 306h5v5h-5z"/><path fill="#45ff57" d="M1279 306h5v5h-5z"/><path fill="#4eff54" d="M1284 306h5v5h-5z"/><path fill="#5dff54" d="M1289 306h5v5h-5z"/><path fill="#69ff51" d="M1294 306h5v5h-5z"/><path fill="#75ff4e" d="M1299 306h5v5h-5z"/><path fill="#81ff4e" d="M1304 306h5v5h-5z"/><path fill="#90ff4b" d="M1309 306h5v5h-5z"/><path fill="#9cff48" d="M1314 306h5v5h-5z"/><path fill="#abff48" d="M1319 306h5v5h-5z"/><path fill="#baff45" d="M1324 306h5v5h-5z"/><path fill="#c9ff42" d="M1329 306h5v5h-5z"/><path fill="#d8ff3f" d="M1334 306h5v5h-5z"/><path fill="#e7ff3c" d="M1339 306h5v5h-5z"/><path fill="#f6ff39" d="M1344 306h5v5h-5z"/><path fill="#fff936" d="M1349 306h5v5h-5z"/><path fill="#ffea30" d="M1354 306h5v5h-5z"/><path fill="#ffdb2a" d="M1359 306h5v5h-5z"/><path fill="#ffcf27" d="M1364 306h5v5h-5z"/><path fill="#ffc321" d="M1369 306h5v5h-5z"/><path fill="#ffba1e" d="M1374 306h5v5h-5z"/><path fill="#ffae1b" d="M1379 306h5v5h-5z"/><path fill="#ffa515" d="M1384 306h5v5h-5z"/><path fill="#ff9f12" d="M1389 306h5v5h-5z"/><path fill="#ff960f" d="M1394 306h5v5h-5z"/><path fill="#ff900c" d="M1399 306h5v5h-5z"/><path fill="#ff870c" d="M1404 306h5v5h-5z"/><path fill="#ff8109" d="M1409 306h5v5h-5z"/><path fill="#ff7b06" d="M1414 306h5v5h-5z"/><path fill="#ff7503" d="M1419 306h5v5h-5z"/><path fill="#ff7203" d="M1424 306h5v5h-5z"/><path fill="#ff6600" d="M1434 306h5v5h-5z"/><path fill="#ff6300" d="M1439 306h5v5h-5zM1434 311h5v5h-5z"/><path fill="#00ff6c" d="M1239 311h5v5h-5zM1244 311h5v5h-5z"/><path fill="#06ff69" d="M1249 311h5v5h-5z"/><path fill="#12ff69" d="M1254 311h5v5h-5z"/><path fill="#1bff66" d="M1259 311h5v5h-5z"/><path fill="#27ff63" d="M1264 311h5v5h-5z"/><path fill="#33ff63" d="M1269 311h5v5h-5z"/><path fill="#3fff60" d="M1274 311h5v5h-5z"/><path fill="#4bff60" d="M1279 311h5v5h-5z"/><path fill="#57ff5d" d="M1284 311h5v5h-5z"/><path fill="#63ff5a" d="M1289 311h5v5h-5z"/><path fill="#6fff5a" d="M1294 311h5v5h-5z"/><path fill="#7bff57" d="M1299 311h5v5h-5z"/><path fill="#8aff54" d="M1304 311h5v5h-5z"/><path fill="#99ff54" d="M1309 311h5v5h-5z"/><path fill="#a5ff51" d="M1314 311h5v5h-5z"/><path fill="#b4ff4e" d="M1319 311h5v5h-5z"/><path fill="#c3ff4b" d="M1324 311h5v5h-5z"/><path fill="#d2ff48" d="M1329 311h5v5h-5z"/><path fill="#e1ff48" d="M1334 311h5v5h-5z"/><path fill="#f3ff45" d="M1339 311h5v5h-5z"/><path fill="#fffc42" d="M1344 311h5v5h-5z"/><path fill="#ffea39" d="M1349 311h5v5h-5z"/><path fill="#ffde36" d="M1354 311h5v5h-5z"/><path fill="#ffcf30" d="M1359 311h5v5h-5z"/><path fill="#ffc62a" d="M1364 311h5v5h-5z"/><path fill="#ffba27" d="M1369 311h5v5h-5z"/><path fill="#ffb121" d="M1374 311h5v5h-5z"/><path fill="#ffa81e" d="M1379 311h5v5h-5z"/><path fill="#ff9f1b" d="M1384 311h5v5h-5z"/><path fill="#ff9618" d="M1389 311h5v5h-5z"/><path fill="#ff9015" d="M1394 311h5v5h-5z"/><path fill="#ff8712" d="M1399 311h5v5h-5z"/><path fill="#ff810f" d="M1404 311h5v5h-5z"/><path fill="#ff7b0c" d="M1409 311h5v5h-5z"/><path fill="#ff7509" d="M1414 311h5v5h-5z"/><path fill="#ff6f06" d="M1419 311h5v5h-5z"/><path fill="#ff6c06" d="M1424 311h5v5h-5z"/><path fill="#ff6603" d="M1429 311h5v5h-5z"/><path fill="#ff5d00" d="M1439 311h5v5h-5z"/><path fill="#ff5a00" d="M1444 311h5v5h-5z"/><path fill="#ff5400" d="M1449 311h5v5h-5zM1444 316h5v5h-5z"/><path fill="#00ff75" d="M1239 316h5v5h-5z"/><path fill="#00ff72" d="M1244 316h5v5h-5z"/><path fill="#09ff72" d="M1249 316h5v5h-5z"/><path fill="#15ff6f" d="M1254 316h5v5h-5z"/><path fill="#21ff6f" d="M1259 316h5v5h-5z"/><path fill="#2dff6c" d="M1264 316h5v5h-5z"/><path fill="#39ff69" d="M1269 316h5v5h-5z"/><path fill="#45ff69" d="M1274 316h5v5h-5z"/><path fill="#51ff66" d="M1279 316h5v5h-5z"/><path fill="#5dff66" d="M1284 316h5v5h-5z"/><path fill="#69ff63" d="M1289 316h5v5h-5z"/><path fill="#78ff60" d="M1294 316h5v5h-5z"/><path fill="#84ff60" d="M1299 316h5v5h-5z"/><path fill="#93ff5d" d="M1304 316h5v5h-5z"/><path fill="#a2ff5a" d="M1309 316h5v5h-5z"/><path fill="#b1ff5a" d="M1314 316h5v5h-5z"/><path fill="#c0ff57" d="M1319 316h5v5h-5z"/><path fill="#cfff54" d="M1324 316h5v5h-5z"/><path fill="#deff51" d="M1329 316h5v5h-5z"/><path fill="#f0ff4e" d="M1334 316h5v5h-5z"/><path fill="#ffff4e" d="M1339 316h5v5h-5z"/><path fill="#ffed45" d="M1344 316h5v5h-5z"/><path fill="#ffde3f" d="M1349 316h5v5h-5z"/><path fill="#ffd239" d="M1354 316h5v5h-5z"/><path fill="#ffc633" d="M1359 316h5v5h-5z"/><path fill="#ffba2d" d="M1364 316h5v5h-5z"/><path fill="#ffb12a" d="M1369 316h5v5h-5z"/><path fill="#ffa824" d="M1374 316h5v5h-5z"/><path fill="#ff9f21" d="M1379 316h5v5h-5z"/><path fill="#ff961e" d="M1384 316h5v5h-5z"/><path fill="#ff901b" d="M1389 316h5v5h-5z"/><path fill="#ff8718" d="M1394 316h5v5h-5z"/><path fill="#ff8115" d="M1399 316h5v5h-5z"/><path fill="#ff7b12" d="M1404 316h5v5h-5z"/><path fill="#ff750f" d="M1409 316h5v5h-5z"/><path fill="#ff6f0c" d="M1414 316h5v5h-5z"/><path fill="#ff6909" d="M1419 316h5v5h-5z"/><path fill="#ff6609" d="M1424 316h5v5h-5z"/><path fill="#ff6006" d="M1429 316h5v5h-5z"/><path fill="#ff5d03" d="M1434 316h5v5h-5z"/><path fill="#ff5703" d="M1439 316h5v5h-5z"/><path fill="#ff5100" d="M1449 316h5v5h-5z"/><path fill="#ff4e00" d="M1454 316h5v5h-5z"/><path fill="#ff4b00" d="M1459 316h5v5h-5zM1449 321h5v5h-5z"/><path fill="#00ff7b" d="M1239 321h5v5h-5z"/><path fill="#03ff7b" d="M1244 321h5v5h-5z"/><path fill="#0fff78" d="M1249 321h5v5h-5z"/><path fill="#1bff78" d="M1254 321h5v5h-5z"/><path fill="#24ff75" d="M1259 321h5v5h-5z"/><path fill="#30ff75" d="M1264 321h5v5h-5z"/><path fill="#3cff72" d="M1269 321h5v5h-5z"/><path fill="#4bff72" d="M1274 321h5v5h-5z"/><path fill="#57ff6f" d="M1279 321h5v5h-5z"/><path fill="#63ff6c" d="M1284 321h5v5h-5z"/><path fill="#72ff6c" d="M1289 321h5v5h-5z"/><path fill="#7eff69" d="M1294 321h5v5h-5z"/><path fill="#8dff66" d="M1299 321h5v5h-5z"/><path fill="#9cff66" d="M1304 321h5v5h-5z"/><path fill="#abff63" d="M1309 321h5v5h-5z"/><path fill="#baff60" d="M1314 321h5v5h-5z"/><path fill="#c9ff60" d="M1319 321h5v5h-5z"/><path fill="#dbff5d" d="M1324 321h5v5h-5z"/><path fill="#eaff5a" d="M1329 321h5v5h-5z"/><path fill="#fcff57" d="M1334 321h5v5h-5z"/><path fill="#fff051" d="M1339 321h5v5h-5z"/><path fill="#ffe14b" d="M1344 321h5v5h-5z"/><path fill="#ffd542" d="M1349 321h5v5h-5z"/><path fill="#ffc63c" d="M1354 321h5v5h-5z"/><path fill="#ffbd36" d="M1359 321h5v5h-5z"/><path fill="#ffb133" d="M1364 321h5v5h-5z"/><path fill="#ffa82d" d="M1369 321h5v5h-5z"/><path fill="#ff9f2a" d="M1374 321h5v5h-5z"/><path fill="#ff9624" d="M1379 321h5v5h-5z"/><path fill="#ff8d21" d="M1384 321h5v5h-5z"/><path fill="#ff871e" d="M1389 321h5v5h-5z"/><path fill="#ff811b" d="M1394 321h5v5h-5z"/><path fill="#ff7b18" d="M1399 321h5v5h-5z"/><path fill="#ff7515" d="M1404 321h5v5h-5z"/><path fill="#ff6f12" d="M1409 321h5v5h-5z"/><path fill="#ff690f" d="M1414 321h5v5h-5z"/><path fill="#ff660c" d="M1419 321h5v5h-5z"/><path fill="#ff600c" d="M1424 321h5v5h-5z"/><path fill="#ff5a09" d="M1429 321h5v5h-5z"/><path fill="#ff5706" d="M1434 321h5v5h-5z"/><path fill="#ff5406" d="M1439 321h5v5h-5z"/><path fill="#ff5103" d="M1444 321h5v5h-5z"/><path fill="#ff4800" d="M1454 321h5v5h-5z"/><path fill="#ff4500" d="M1459 321h5v5h-5z"/><path fill="#ff4200" d="M1464 321h5v5h-5zM1459 326h5v5h-5z"/><path fill="#00ff87" d="M1234 326h5v5h-5z"/><path fill="#00ff84" d="M1239 326h5v5h-5z"/><path fill="#06ff84" d="M1244 326h5v5h-5z"/><path fill="#12ff81" d="M1249 326h5v5h-5z"/><path fill="#1eff81" d="M1254 326h5v5h-5z"/><path fill="#2aff7e" d="M1259 326h5v5h-5z"/><path fill="#36ff7e" d="M1264 326h5v5h-5z"/><path fill="#45ff7b" d="M1269 326h5v5h-5z"/><path fill="#51ff78" d="M1274 326h5v5h-5z"/><path fill="#5dff78" d="M1279 326h5v5h-5z"/><path fill="#6cff75" d="M1284 326h5v5h-5z"/><path fill="#78ff75" d="M1289 326h5v5h-5z"/><path fill="#87ff72" d="M1294 326h5v5h-5z"/><path fill="#96ff6f" d="M1299 326h5v5h-5z"/><path fill="#a5ff6f" d="M1304 326h5v5h-5z"/><path fill="#b4ff6c" d="M1309 326h5v5h-5z"/><path fill="#c6ff69" d="M1314 326h5v5h-5z"/><path fill="#d5ff69" d="M1319 326h5v5h-5z"/><path fill="#e7ff66" d="M1324 326h5v5h-5z"/><path fill="#f9ff63" d="M1329 326h5v5h-5z"/><path fill="#fff35d" d="M1334 326h5v5h-5z"/><path fill="#ffe454" d="M1339 326h5v5h-5z"/><path fill="#ffd54e" d="M1344 326h5v5h-5z"/><path fill="#ffc948" d="M1349 326h5v5h-5z"/><path fill="#ffbd42" d="M1354 326h5v5h-5z"/><path fill="#ffb13c" d="M1359 326h5v5h-5z"/><path fill="#ffa836" d="M1364 326h5v5h-5z"/><path fill="#ff9f30" d="M1369 326h5v5h-5z"/><path fill="#ff962d" d="M1374 326h5v5h-5z"/><path fill="#ff8d2a" d="M1379 326h5v5h-5z"/><path fill="#ff8724" d="M1384 326h5v5h-5z"/><path fill="#ff8121" d="M1389 326h5v5h-5z"/><path fill="#ff7b1e" d="M1394 326h5v5h-5z"/><path fill="#ff751b" d="M1399 326h5v5h-5z"/><path fill="#ff6f18" d="M1404 326h5v5h-5z"/><path fill="#ff6915" d="M1409 326h5v5h-5z"/><path fill="#ff6312" d="M1414 326h5v5h-5z"/><path fill="#ff600f" d="M1419 326h5v5h-5z"/><path fill="#ff5a0f" d="M1424 326h5v5h-5z"/><path fill="#ff570c" d="M1429 326h5v5h-5z"/><path fill="#ff5109" d="M1434 326h5v5h-5z"/><path fill="#ff4e09" d="M1439 326h5v5h-5z"/><path fill="#ff4b06" d="M1444 326h5v5h-5z"/><path fill="#ff4803" d="M1449 326h5v5h-5z"/><path fill="#ff4503" d="M1454 326h5v5h-5z"/><path fill="#ff3f00" d="M1464 326h5v5h-5z"/><path fill="#ff3c00" d="M1469 326h5v5h-5z"/><path fill="#ff3900" d="M1474 326h5v5h-5z"/><path fill="#00ff8d" d="M1234 331h5v5h-5zM1239 331h5v5h-5z"/><path fill="#0cff8d" d="M1244 331h5v5h-5z"/><path fill="#18ff8a" d="M1249 331h5v5h-5z"/><path fill="#24ff8a" d="M1254 331h5v5h-5z"/><path fill="#30ff87" d="M1259 331h5v5h-5z"/><path fill="#3cff87" d="M1264 331h5v5h-5z"/><path fill="#4bff84" d="M1269 331h5v5h-5z"/><path fill="#57ff84" d="M1274 331h5v5h-5z"/><path fill="#66ff81" d="M1279 331h5v5h-5z"/><path fill="#72ff7e" d="M1284 331h5v5h-5z"/><path fill="#81ff7e" d="M1289 331h5v5h-5z"/><path fill="#90ff7b" d="M1294 331h5v5h-5z"/><path fill="#9fff7b" d="M1299 331h5v5h-5z"/><path fill="#b1ff78" d="M1304 331h5v5h-5z"/><path fill="#c0ff75" d="M1309 331h5v5h-5z"/><path fill="#d2ff75" d="M1314 331h5v5h-5z"/><path fill="#e4ff72" d="M1319 331h5v5h-5z"/><path fill="#f3ff6f" d="M1324 331h5v5h-5z"/><path fill="#fff96c" d="M1329 331h5v5h-5z"/><path fill="#ffe763" d="M1334 331h5v5h-5z"/><path fill="#ffd85a" d="M1339 331h5v5h-5z"/><path fill="#ffc951" d="M1344 331h5v5h-5z"/><path fill="#ffbd4b" d="M1349 331h5v5h-5z"/><path fill="#ffb445" d="M1354 331h5v5h-5z"/><path fill="#ffa83f" d="M1359 331h5v5h-5z"/><path fill="#ff9f39" d="M1364 331h5v5h-5z"/><path fill="#ff9636" d="M1369 331h5v5h-5z"/><path fill="#ff8d30" d="M1374 331h5v5h-5z"/><path fill="#ff872d" d="M1379 331h5v5h-5z"/><path fill="#ff8127" d="M1384 331h5v5h-5z"/><path fill="#ff7824" d="M1389 331h5v5h-5z"/><path fill="#ff7221" d="M1394 331h5v5h-5z"/><path fill="#ff6c1e" d="M1399 331h5v5h-5z"/><path fill="#ff691b" d="M1404 331h5v5h-5z"/><path fill="#ff6318" d="M1409 331h5v5h-5z"/><path fill="#ff5d15" d="M1414 331h5v5h-5z"/><path fill="#ff5a12" d="M1419 331h5v5h-5z"/><path fill="#ff5412" d="M1424 331h5v5h-5z"/><path fill="#ff510f" d="M1429 331h5v5h-5z"/><path fill="#ff4e0c" d="M1434 331h5v5h-5z"/><path fill="#ff4b0c" d="M1439 331h5v5h-5z"/><path fill="#ff4509" d="M1444 331h5v5h-5z"/><path fill="#ff4206" d="M1449 331h5v5h-5z"/><path fill="#ff3f06" d="M1454 331h5v5h-5z"/><path fill="#ff3c03" d="M1459 331h5v5h-5z"/><path fill="#ff3903" d="M1464 331h5v5h-5z"/><path fill="#ff3600" d="M1469 331h5v5h-5z"/><path fill="#ff3300" d="M1474 331h5v5h-5zM1479 331h5v5h-5z"/><path fill="#ff3000" d="M1484 331h5v5h-5zM1474 336h5v5h-5z"/><path fill="#00ff99" d="M1234 336h5v5h-5z"/><path fill="#06ff96" d="M1239 336h5v5h-5z"/><path fill="#12ff96" d="M1244 336h5v5h-5z"/><path fill="#1eff93" d="M1249 336h5v5h-5z"/><path fill="#2aff93" d="M1254 336h5v5h-5z"/><path fill="#36ff90" d="M1259 336h5v5h-5z"/><path fill="#42ff90" d="M1264 336h5v5h-5z"/><path fill="#51ff8d" d="M1269 336h5v5h-5z"/><path fill="#60ff8d" d="M1274 336h5v5h-5z"/><path fill="#6cff8a" d="M1279 336h5v5h-5z"/><path fill="#7bff8a" d="M1284 336h5v5h-5z"/><path fill="#8aff87" d="M1289 336h5v5h-5z"/><path fill="#9cff87" d="M1294 336h5v5h-5z"/><path fill="#abff84" d="M1299 336h5v5h-5z"/><path fill="#baff84" d="M1304 336h5v5h-5z"/><path fill="#ccff81" d="M1309 336h5v5h-5z"/><path fill="#deff7e" d="M1314 336h5v5h-5z"/><path fill="#f0ff7e" d="M1319 336h5v5h-5z"/><path fill="#fffc78" d="M1324 336h5v5h-5z"/><path fill="#ffea6f" d="M1329 336h5v5h-5z"/><path fill="#ffdb66" d="M1334 336h5v5h-5z"/><path fill="#ffcc5d" d="M1339 336h5v5h-5z"/><path fill="#ffc057" d="M1344 336h5v5h-5z"/><path fill="#ffb44e" d="M1349 336h5v5h-5z"/><path fill="#ffa848" d="M1354 336h5v5h-5z"/><path fill="#ff9f42" d="M1359 336h5v5h-5z"/><path fill="#ff963c" d="M1364 336h5v5h-5z"/><path fill="#ff8d39" d="M1369 336h5v5h-5z"/><path fill="#ff8733" d="M1374 336h5v5h-5z"/><path fill="#ff7e30" d="M1379 336h5v5h-5z"/><path fill="#ff782d" d="M1384 336h5v5h-5z"/><path fill="#ff7227" d="M1389 336h5v5h-5z"/><path fill="#ff6c24" d="M1394 336h5v5h-5z"/><path fill="#ff6621" d="M1399 336h5v5h-5z"/><path fill="#ff631e" d="M1404 336h5v5h-5z"/><path fill="#ff5d1b" d="M1409 336h5v5h-5z"/><path fill="#ff5718" d="M1414 336h5v5h-5z"/><path fill="#ff5415" d="M1419 336h5v5h-5z"/><path fill="#ff5115" d="M1424 336h5v5h-5z"/><path fill="#ff4b12" d="M1429 336h5v5h-5z"/><path fill="#ff480f" d="M1434 336h5v5h-5z"/><path fill="#ff450c" d="M1439 336h5v5h-5z"/><path fill="#ff420c" d="M1444 336h5v5h-5z"/><path fill="#ff3f09" d="M1449 336h5v5h-5z"/><path fill="#ff3c09" d="M1454 336h5v5h-5z"/><path fill="#ff3906" d="M1459 336h5v5h-5z"/><path fill="#ff3603" d="M1464 336h5v5h-5z"/><path fill="#ff3303" d="M1469 336h5v5h-5z"/><path fill="#ff2d00" d="M1479 336h5v5h-5zM1484 336h5v5h-5z"/><path fill="#ff2a00" d="M1489 336h5v5h-5z"/><path fill="#00ffa2" d="M1229 341h5v5h-5zM1234 341h5v5h-5z"/><path fill="#09ff9f" d="M1239 341h5v5h-5z"/><path fill="#15ff9f" d="M1244 341h5v5h-5z"/><path fill="#21ff9f" d="M1249 341h5v5h-5z"/><path fill="#30ff9c" d="M1254 341h5v5h-5z"/><path fill="#3cff9c" d="M1259 341h5v5h-5z"/><path fill="#4bff99" d="M1264 341h5v5h-5z"/><path fill="#5aff99" d="M1269 341h5v5h-5z"/><path fill="#66ff96" d="M1274 341h5v5h-5z"/><path fill="#75ff96" d="M1279 341h5v5h-5z"/><path fill="#84ff93" d="M1284 341h5v5h-5z"/><path fill="#96ff93" d="M1289 341h5v5h-5z"/><path fill="#a5ff90" d="M1294 341h5v5h-5z"/><path fill="#b7ff90" d="M1299 341h5v5h-5z"/><path fill="#c9ff8d" d="M1304 341h5v5h-5z"/><path fill="#d8ff8d" d="M1309 341h5v5h-5z"/><path fill="#edff8a" d="M1314 341h5v5h-5z"/><path fill="#ffff87" d="M1319 341h5v5h-5z"/><path fill="#ffed7e" d="M1324 341h5v5h-5z"/><path fill="#ffde72" d="M1329 341h5v5h-5z"/><path fill="#ffcf69" d="M1334 341h5v5h-5z"/><path fill="#ffc060" d="M1339 341h5v5h-5z"/><path fill="#ffb45a" d="M1344 341h5v5h-5z"/><path fill="#ffab51" d="M1349 341h5v5h-5z"/><path fill="#ff9f4b" d="M1354 341h5v5h-5z"/><path fill="#ff9645" d="M1359 341h5v5h-5z"/><path fill="#ff8d42" d="M1364 341h5v5h-5z"/><path fill="#ff873c" d="M1369 341h5v5h-5z"/><path fill="#ff7e36" d="M1374 341h5v5h-5z"/><path fill="#ff7833" d="M1379 341h5v5h-5z"/><path fill="#ff7230" d="M1384 341h5v5h-5z"/><path fill="#ff6c2a" d="M1389 341h5v5h-5z"/><path fill="#ff6627" d="M1394 341h5v5h-5z"/><path fill="#ff6024" d="M1399 341h5v5h-5z"/><path fill="#ff5d21" d="M1404 341h5v5h-5z"/><path fill="#ff571e" d="M1409 341h5v5h-5z"/><path fill="#ff541b" d="M1414 341h5v5h-5z"/><path fill="#ff4e18" d="M1419 341h5v5h-5z"/><path fill="#ff4b18" d="M1424 341h5v5h-5z"/><path fill="#ff4815" d="M1429 341h5v5h-5z"/><path fill="#ff4512" d="M1434 341h5v5h-5z"/><path fill="#ff3f0f" d="M1439 341h5v5h-5z"/><path fill="#ff3c0f" d="M1444 341h5v5h-5z"/><path fill="#ff390c" d="M1449 341h5v5h-5z"/><path fill="#ff3609" d="M1454 341h5v5h-5z"/><path fill="#ff3309" d="M1459 341h5v5h-5z"/><path fill="#ff3306" d="M1464 341h5v5h-5z"/><path fill="#ff3006" d="M1469 341h5v5h-5z"/><path fill="#ff2d03" d="M1474 341h5v5h-5z"/><path fill="#ff2a03" d="M1479 341h5v5h-5z"/><path fill="#ff2700" d="M1484 341h5v5h-5zM1489 341h5v5h-5z"/><path fill="#ff2400" d="M1494 341h5v5h-5zM1489 346h5v5h-5z"/><path fill="#ff2100" d="M1499 341h5v5h-5zM1494 346h5v5h-5z"/><path fill="#00ffae" d="M1229 346h5v5h-5z"/><path fill="#00ffab" d="M1234 346h5v5h-5z"/><path fill="#0fffab" d="M1239 346h5v5h-5z"/><path fill="#1bffab" d="M1244 346h5v5h-5z"/><path fill="#27ffa8" d="M1249 346h5v5h-5z"/><path fill="#36ffa8" d="M1254 346h5v5h-5z"/><path fill="#42ffa5" d="M1259 346h5v5h-5z"/><path fill="#51ffa5" d="M1264 346h5v5h-5z"/><path fill="#60ffa5" d="M1269 346h5v5h-5z"/><path fill="#6fffa2" d="M1274 346h5v5h-5z"/><path fill="#7effa2" d="M1279 346h5v5h-5z"/><path fill="#90ff9f" d="M1284 346h5v5h-5z"/><path fill="#9fff9f" d="M1289 346h5v5h-5z"/><path fill="#b1ff9c" d="M1294 346h5v5h-5z"/><path fill="#c3ff9c" d="M1299 346h5v5h-5z"/><path fill="#d5ff99" d="M1304 346h5v5h-5z"/><path fill="#e7ff99" d="M1309 346h5v5h-5z"/><path fill="#fcff96" d="M1314 346h5v5h-5z"/><path fill="#fff08d" d="M1319 346h5v5h-5z"/><path fill="#ffde81" d="M1324 346h5v5h-5z"/><path fill="#ffcf75" d="M1329 346h5v5h-5z"/><path fill="#ffc36c" d="M1334 346h5v5h-5z"/><path fill="#ffb766" d="M1339 346h5v5h-5z"/><path fill="#ffab5d" d="M1344 346h5v5h-5z"/><path fill="#ff9f57" d="M1349 346h5v5h-5z"/><path fill="#ff9651" d="M1354 346h5v5h-5z"/><path fill="#ff8d4b" d="M1359 346h5v5h-5z"/><path fill="#ff8745" d="M1364 346h5v5h-5z"/><path fill="#ff7e3f" d="M1369 346h5v5h-5z"/><path fill="#ff783c" d="M1374 346h5v5h-5z"/><path fill="#ff7236" d="M1379 346h5v5h-5z"/><path fill="#ff6c33" d="M1384 346h5v5h-5z"/><path fill="#ff662d" d="M1389 346h5v5h-5z"/><path fill="#ff602a" d="M1394 346h5v5h-5z"/><path fill="#ff5a27" d="M1399 346h5v5h-5z"/><path fill="#ff5724" d="M1404 346h5v5h-5z"/><path fill="#ff5121" d="M1409 346h5v5h-5z"/><path fill="#ff4e1e" d="M1414 346h5v5h-5z"/><path fill="#ff4b1b" d="M1419 346h5v5h-5z"/><path fill="#ff4518" d="M1424 346h5v5h-5z"/><path fill="#ff4218" d="M1429 346h5v5h-5z"/><path fill="#ff3f15" d="M1434 346h5v5h-5z"/><path fill="#ff3c12" d="M1439 346h5v5h-5z"/><path fill="#ff390f" d="M1444 346h5v5h-5z"/><path fill="#ff360f" d="M1449 346h5v5h-5z"/><path fill="#ff330c" d="M1454 346h5v5h-5z"/><path fill="#ff300c" d="M1459 346h5v5h-5z"/><path fill="#ff2d09" d="M1464 346h5v5h-5z"/><path fill="#ff2a06" d="M1469 346h5v5h-5zM1474 346h5v5h-5z"/><path fill="#ff2703" d="M1479 346h5v5h-5z"/><path fill="#ff2403" d="M1484 346h5v5h-5z"/><path fill="#ff1e00" d="M1499 346h5v5h-5zM1504 346h5v5h-5z"/><path fill="#ff1b00" d="M1509 346h5v5h-5zM1499 351h5v5h-5zM1504 351h5v5h-5z"/><path fill="#00ffba" d="M1224 351h5v5h-5z"/><path fill="#00ffb7" d="M1229 351h5v5h-5z"/><path fill="#06ffb7" d="M1234 351h5v5h-5z"/><path fill="#12ffb7" d="M1239 351h5v5h-5z"/><path fill="#21ffb4" d="M1244 351h5v5h-5z"/><path fill="#2dffb4" d="M1249 351h5v5h-5z"/><path fill="#3cffb4" d="M1254 351h5v5h-5z"/><path fill="#4bffb1" d="M1259 351h5v5h-5z"/><path fill="#5affb1" d="M1264 351h5v5h-5z"/><path fill="#69ffb1" d="M1269 351h5v5h-5z"/><path fill="#78ffae" d="M1274 351h5v5h-5z"/><path fill="#8affae" d="M1279 351h5v5h-5z"/><path fill="#99ffab" d="M1284 351h5v5h-5z"/><path fill="#abffab" d="M1289 351h5v5h-5z"/><path fill="#bdffa8" d="M1294 351h5v5h-5z"/><path fill="#cfffa8" d="M1299 351h5v5h-5z"/><path fill="#e4ffa8" d="M1304 351h5v5h-5z"/><path fill="#f6ffa5" d="M1309 351h5v5h-5z"/><path fill="#fff39c" d="M1314 351h5v5h-5z"/><path fill="#ffe190" d="M1319 351h5v5h-5z"/><path fill="#ffd284" d="M1324 351h5v5h-5z"/><path fill="#ffc37b" d="M1329 351h5v5h-5z"/><path fill="#ffb772" d="M1334 351h5v5h-5z"/><path fill="#ffab69" d="M1339 351h5v5h-5z"/><path fill="#ff9f60" d="M1344 351h5v5h-5z"/><path fill="#ff965a" d="M1349 351h5v5h-5z"/><path fill="#ff8d54" d="M1354 351h5v5h-5z"/><path fill="#ff844e" d="M1359 351h5v5h-5z"/><path fill="#ff7e48" d="M1364 351h5v5h-5z"/><path fill="#ff7842" d="M1369 351h5v5h-5z"/><path fill="#ff6f3f" d="M1374 351h5v5h-5z"/><path fill="#ff6939" d="M1379 351h5v5h-5z"/><path fill="#ff6336" d="M1384 351h5v5h-5z"/><path fill="#ff6030" d="M1389 351h5v5h-5z"/><path fill="#ff5a2d" d="M1394 351h5v5h-5z"/><path fill="#ff542a" d="M1399 351h5v5h-5z"/><path fill="#ff5127" d="M1404 351h5v5h-5z"/><path fill="#ff4b24" d="M1409 351h5v5h-5z"/><path fill="#ff4821" d="M1414 351h5v5h-5z"/><path fill="#ff451e" d="M1419 351h5v5h-5z"/><path fill="#ff421b" d="M1424 351h5v5h-5z"/><path fill="#ff3f1b" d="M1429 351h5v5h-5z"/><path fill="#ff3918" d="M1434 351h5v5h-5z"/><path fill="#ff3615" d="M1439 351h5v5h-5z"/><path fill="#ff3312" d="M1444 351h5v5h-5zM1449 351h5v5h-5z"/><path fill="#ff300f" d="M1454 351h5v5h-5z"/><path fill="#ff2d0c" d="M1459 351h5v5h-5z"/><path fill="#ff2a0c" d="M1464 351h5v5h-5z"/><path fill="#ff2709" d="M1469 351h5v5h-5z"/><path fill="#ff2409" d="M1474 351h5v5h-5z"/><path fill="#ff2406" d="M1479 351h5v5h-5z"/><path fill="#ff2106" d="M1484 351h5v5h-5z"/><path fill="#ff1e03" d="M1489 351h5v5h-5zM1494 351h5v5h-5z"/><path fill="#ff1800" d="M1509 351h5v5h-5z"/><path fill="#ff1500" d="M1514 351h5v5h-5zM1509 356h5v5h-5z"/><path fill="#00ffc3" d="M1224 356h5v5h-5zM1229 356h5v5h-5z"/><path fill="#0cffc3" d="M1234 356h5v5h-5z"/><path fill="#18ffc3" d="M1239 356h5v5h-5z"/><path fill="#27ffc0" d="M1244 356h5v5h-5z"/><path fill="#36ffc0" d="M1249 356h5v5h-5z"/><path fill="#42ffc0" d="M1254 356h5v5h-5z"/><path fill="#51ffbd" d="M1259 356h5v5h-5z"/><path fill="#63ffbd" d="M1264 356h5v5h-5z"/><path fill="#72ffbd" d="M1269 356h5v5h-5z"/><path fill="#84ffba" d="M1274 356h5v5h-5z"/><path fill="#93ffba" d="M1279 356h5v5h-5z"/><path fill="#a5ffba" d="M1284 356h5v5h-5z"/><path fill="#b7ffb7" d="M1289 356h5v5h-5z"/><path fill="#c9ffb7" d="M1294 356h5v5h-5z"/><path fill="#deffb7" d="M1299 356h5v5h-5z"/><path fill="#f3ffb4" d="M1304 356h5v5h-5z"/><path fill="#fff9ae" d="M1309 356h5v5h-5z"/><path fill="#ffe49f" d="M1314 356h5v5h-5z"/><path fill="#ffd593" d="M1319 356h5v5h-5z"/><path fill="#ffc687" d="M1324 356h5v5h-5z"/><path fill="#ffb77e" d="M1329 356h5v5h-5z"/><path fill="#ffab75" d="M1334 356h5v5h-5z"/><path fill="#ffa26c" d="M1339 356h5v5h-5z"/><path fill="#ff9663" d="M1344 356h5v5h-5z"/><path fill="#ff8d5d" d="M1349 356h5v5h-5z"/><path fill="#ff8457" d="M1354 356h5v5h-5z"/><path fill="#ff7e51" d="M1359 356h5v5h-5z"/><path fill="#ff754b" d="M1364 356h5v5h-5z"/><path fill="#ff6f45" d="M1369 356h5v5h-5z"/><path fill="#ff6942" d="M1374 356h5v5h-5z"/><path fill="#ff633c" d="M1379 356h5v5h-5z"/><path fill="#ff5d39" d="M1384 356h5v5h-5z"/><path fill="#ff5a33" d="M1389 356h5v5h-5z"/><path fill="#ff5430" d="M1394 356h5v5h-5z"/><path fill="#ff4e2d" d="M1399 356h5v5h-5z"/><path fill="#ff4b2a" d="M1404 356h5v5h-5z"/><path fill="#ff4827" d="M1409 356h5v5h-5z"/><path fill="#ff4224" d="M1414 356h5v5h-5z"/><path fill="#ff3f21" d="M1419 356h5v5h-5z"/><path fill="#ff3c1e" d="M1424 356h5v5h-5z"/><path fill="#ff391b" d="M1429 356h5v5h-5z"/><path fill="#ff361b" d="M1434 356h5v5h-5z"/><path fill="#ff3318" d="M1439 356h5v5h-5z"/><path fill="#ff3015" d="M1444 356h5v5h-5z"/><path fill="#ff2d12" d="M1449 356h5v5h-5z"/><path fill="#ff2a12" d="M1454 356h5v5h-5z"/><path fill="#ff270f" d="M1459 356h5v5h-5zM1464 356h5v5h-5z"/><path fill="#ff240c" d="M1469 356h5v5h-5z"/><path fill="#ff2109" d="M1474 356h5v5h-5zM1479 356h5v5h-5z"/><path fill="#ff1e06" d="M1484 356h5v5h-5z"/><path fill="#ff1b06" d="M1489 356h5v5h-5z"/><path fill="#ff1b03" d="M1494 356h5v5h-5z"/><path fill="#ff1803" d="M1499 356h5v5h-5zM1504 356h5v5h-5z"/><path fill="#ff1200" d="M1514 356h5v5h-5zM1519 356h5v5h-5z"/><path fill="#ff0f00" d="M1524 356h5v5h-5zM1514 361h5v5h-5zM1519 361h5v5h-5z"/><path fill="#00ffd2" d="M1224 361h5v5h-5z"/><path fill="#03ffcf" d="M1229 361h5v5h-5z"/><path fill="#0fffcf" d="M1234 361h5v5h-5z"/><path fill="#1effcf" d="M1239 361h5v5h-5z"/><path fill="#2dffcf" d="M1244 361h5v5h-5z"/><path fill="#3cffcc" d="M1249 361h5v5h-5z"/><path fill="#4bffcc" d="M1254 361h5v5h-5z"/><path fill="#5affcc" d="M1259 361h5v5h-5z"/><path fill="#6cffcc" d="M1264 361h5v5h-5z"/><path fill="#7bffc9" d="M1269 361h5v5h-5z"/><path fill="#8dffc9" d="M1274 361h5v5h-5z"/><path fill="#9fffc9" d="M1279 361h5v5h-5z"/><path fill="#b1ffc9" d="M1284 361h5v5h-5z"/><path fill="#c6ffc6" d="M1289 361h5v5h-5z"/><path fill="#d8ffc6" d="M1294 361h5v5h-5z"/><path fill="#edffc6" d="M1299 361h5v5h-5z"/><path fill="#fffcc0" d="M1304 361h5v5h-5z"/><path fill="#ffe7b1" d="M1309 361h5v5h-5z"/><path fill="#ffd5a2" d="M1314 361h5v5h-5z"/><path fill="#ffc696" d="M1319 361h5v5h-5z"/><path fill="#ffba8a" d="M1324 361h5v5h-5z"/><path fill="#ffab81" d="M1329 361h5v5h-5z"/><path fill="#ffa278" d="M1334 361h5v5h-5z"/><path fill="#ff966f" d="M1339 361h5v5h-5z"/><path fill="#ff8d66" d="M1344 361h5v5h-5z"/><path fill="#ff8460" d="M1349 361h5v5h-5z"/><path fill="#ff7b5a" d="M1354 361h5v5h-5z"/><path fill="#ff7554" d="M1359 361h5v5h-5z"/><path fill="#ff6f4e" d="M1364 361h5v5h-5z"/><path fill="#ff6948" d="M1369 361h5v5h-5z"/><path fill="#ff6345" d="M1374 361h5v5h-5z"/><path fill="#ff5d3f" d="M1379 361h5v5h-5z"/><path fill="#ff573c" d="M1384 361h5v5h-5z"/><path fill="#ff5136" d="M1389 361h5v5h-5z"/><path fill="#ff4e33" d="M1394 361h5v5h-5z"/><path fill="#ff4b30" d="M1399 361h5v5h-5z"/><path fill="#ff452d" d="M1404 361h5v5h-5z"/><path fill="#ff422a" d="M1409 361h5v5h-5z"/><path fill="#ff3f27" d="M1414 361h5v5h-5z"/><path fill="#ff3c24" d="M1419 361h5v5h-5z"/><path fill="#ff3621" d="M1424 361h5v5h-5z"/><path fill="#ff331e" d="M1429 361h5v5h-5z"/><path fill="#ff301b" d="M1434 361h5v5h-5zM1439 361h5v5h-5z"/><path fill="#ff2d18" d="M1444 361h5v5h-5z"/><path fill="#ff2a15" d="M1449 361h5v5h-5z"/><path fill="#ff2715" d="M1454 361h5v5h-5z"/><path fill="#ff2412" d="M1459 361h5v5h-5z"/><path fill="#ff210f" d="M1464 361h5v5h-5zM1469 361h5v5h-5z"/><path fill="#ff1e0c" d="M1474 361h5v5h-5z"/><path fill="#ff1b0c" d="M1479 361h5v5h-5z"/><path fill="#ff1b09" d="M1484 361h5v5h-5z"/><path fill="#ff1809" d="M1489 361h5v5h-5z"/><path fill="#ff1806" d="M1494 361h5v5h-5z"/><path fill="#ff1506" d="M1499 361h5v5h-5z"/><path fill="#ff1203" d="M1504 361h5v5h-5zM1509 361h5v5h-5z"/><path fill="#ff0c00" d="M1524 361h5v5h-5zM1529 361h5v5h-5zM1524 366h5v5h-5z"/><path fill="#00ffde" d="M1219 366h5v5h-5zM1224 366h5v5h-5z"/><path fill="#09ffde" d="M1229 366h5v5h-5z"/><path fill="#15ffde" d="M1234 366h5v5h-5z"/><path fill="#24ffdb" d="M1239 366h5v5h-5z"/><path fill="#33ffdb" d="M1244 366h5v5h-5z"/><path fill="#42ffdb" d="M1249 366h5v5h-5z"/><path fill="#54ffdb" d="M1254 366h5v5h-5z"/><path fill="#63ffdb" d="M1259 366h5v5h-5z"/><path fill="#75ffdb" d="M1264 366h5v5h-5z"/><path fill="#87ffd8" d="M1269 366h5v5h-5z"/><path fill="#99ffd8" d="M1274 366h5v5h-5z"/><path fill="#abffd8" d="M1279 366h5v5h-5z"/><path fill="#c0ffd8" d="M1284 366h5v5h-5z"/><path fill="#d2ffd8" d="M1289 366h5v5h-5z"/><path fill="#e7ffd5" d="M1294 366h5v5h-5z"/><path fill="#ffffd5" d="M1299 366h5v5h-5z"/><path fill="#ffeac3" d="M1304 366h5v5h-5z"/><path fill="#ffd8b4" d="M1309 366h5v5h-5z"/><path fill="#ffc9a5" d="M1314 366h5v5h-5z"/><path fill="#ffba99" d="M1319 366h5v5h-5z"/><path fill="#ffae8d" d="M1324 366h5v5h-5z"/><path fill="#ffa284" d="M1329 366h5v5h-5z"/><path fill="#ff967b" d="M1334 366h5v5h-5z"/><path fill="#ff8d72" d="M1339 366h5v5h-5z"/><path fill="#ff8469" d="M1344 366h5v5h-5z"/><path fill="#ff7b63" d="M1349 366h5v5h-5z"/><path fill="#ff755d" d="M1354 366h5v5h-5z"/><path fill="#ff6c57" d="M1359 366h5v5h-5z"/><path fill="#ff6651" d="M1364 366h5v5h-5z"/><path fill="#ff604b" d="M1369 366h5v5h-5z"/><path fill="#ff5a48" d="M1374 366h5v5h-5z"/><path fill="#ff5742" d="M1379 366h5v5h-5z"/><path fill="#ff513f" d="M1384 366h5v5h-5z"/><path fill="#ff4e39" d="M1389 366h5v5h-5z"/><path fill="#ff4836" d="M1394 366h5v5h-5z"/><path fill="#ff4533" d="M1399 366h5v5h-5z"/><path fill="#ff3f30" d="M1404 366h5v5h-5z"/><path fill="#ff3c2d" d="M1409 366h5v5h-5z"/><path fill="#ff392a" d="M1414 366h5v5h-5z"/><path fill="#ff3627" d="M1419 366h5v5h-5z"/><path fill="#ff3324" d="M1424 366h5v5h-5z"/><path fill="#ff3021" d="M1429 366h5v5h-5z"/><path fill="#ff2d1e" d="M1434 366h5v5h-5z"/><path fill="#ff2a1b" d="M1439 366h5v5h-5z"/><path fill="#ff271b" d="M1444 366h5v5h-5z"/><path fill="#ff2418" d="M1449 366h5v5h-5z"/><path fill="#ff2415" d="M1454 366h5v5h-5z"/><path fill="#ff2115" d="M1459 366h5v5h-5z"/><path fill="#ff1e12" d="M1464 366h5v5h-5z"/><path fill="#ff1e0f" d="M1469 366h5v5h-5z"/><path fill="#ff1b0f" d="M1474 366h5v5h-5z"/><path fill="#ff180c" d="M1479 366h5v5h-5zM1484 366h5v5h-5z"/><path fill="#ff1509" d="M1489 366h5v5h-5zM1494 366h5v5h-5z"/><path fill="#ff1206" d="M1499 366h5v5h-5z"/><path fill="#ff0f06" d="M1504 366h5v5h-5z"/><path fill="#ff0f03" d="M1509 366h5v5h-5z"/><path fill="#ff0c03" d="M1514 366h5v5h-5zM1519 366h5v5h-5z"/><path fill="#ff0900" d="M1529 366h5v5h-5zM1534 366h5v5h-5z"/><path fill="#ff0600" d="M1539 366h5v5h-5zM1534 371h5v5h-5z"/><path fill="#00ffed" d="M1219 371h5v5h-5zM1224 371h5v5h-5z"/><path fill="#0cffed" d="M1229 371h5v5h-5z"/><path fill="#1bffea" d="M1234 371h5v5h-5z"/><path fill="#2affea" d="M1239 371h5v5h-5z"/><path fill="#3cffea" d="M1244 371h5v5h-5z"/><path fill="#4bffea" d="M1249 371h5v5h-5z"/><path fill="#5dffea" d="M1254 371h5v5h-5z"/><path fill="#6cffea" d="M1259 371h5v5h-5z"/><path fill="#7effea" d="M1264 371h5v5h-5z"/><path fill="#93ffea" d="M1269 371h5v5h-5z"/><path fill="#a5ffea" d="M1274 371h5v5h-5z"/><path fill="#baffea" d="M1279 371h5v5h-5z"/><path fill="#cfffe7" d="M1284 371h5v5h-5z"/><path fill="#e4ffe7" d="M1289 371h5v5h-5z"/><path fill="#f9ffe7" d="M1294 371h5v5h-5z"/><path fill="#fff0d8" d="M1299 371h5v5h-5z"/><path fill="#ffdbc6" d="M1304 371h5v5h-5z"/><path fill="#ffccb7" d="M1309 371h5v5h-5z"/><path fill="#ffbaa8" d="M1314 371h5v5h-5z"/><path fill="#ffae9c" d="M1319 371h5v5h-5z"/><path fill="#ffa290" d="M1324 371h5v5h-5z"/><path fill="#ff9687" d="M1329 371h5v5h-5z"/><path fill="#ff8d7e" d="M1334 371h5v5h-5z"/><path fill="#ff8475" d="M1339 371h5v5h-5z"/><path fill="#ff7b6c" d="M1344 371h5v5h-5z"/><path fill="#ff7566" d="M1349 371h5v5h-5z"/><path fill="#ff6c60" d="M1354 371h5v5h-5z"/><path fill="#ff665a" d="M1359 371h5v5h-5z"/><path fill="#ff6054" d="M1364 371h5v5h-5z"/><path fill="#ff5a4e" d="M1369 371h5v5h-5z"/><path fill="#ff544b" d="M1374 371h5v5h-5z"/><path fill="#ff5145" d="M1379 371h5v5h-5z"/><path fill="#ff4b42" d="M1384 371h5v5h-5z"/><path fill="#ff483c" d="M1389 371h5v5h-5z"/><path fill="#ff4239" d="M1394 371h5v5h-5z"/><path fill="#ff3f36" d="M1399 371h5v5h-5z"/><path fill="#ff3c33" d="M1404 371h5v5h-5z"/><path fill="#ff3930" d="M1409 371h5v5h-5z"/><path fill="#ff332d" d="M1414 371h5v5h-5z"/><path fill="#ff302a" d="M1419 371h5v5h-5z"/><path fill="#ff2d27" d="M1424 371h5v5h-5z"/><path fill="#ff2a24" d="M1429 371h5v5h-5z"/><path fill="#ff2a21" d="M1434 371h5v5h-5z"/><path fill="#ff271e" d="M1439 371h5v5h-5z"/><path fill="#ff241e" d="M1444 371h5v5h-5z"/><path fill="#ff211b" d="M1449 371h5v5h-5z"/><path fill="#ff1e18" d="M1454 371h5v5h-5z"/><path fill="#ff1e15" d="M1459 371h5v5h-5z"/><path fill="#ff1b15" d="M1464 371h5v5h-5z"/><path fill="#ff1812" d="M1469 371h5v5h-5zM1474 371h5v5h-5z"/><path fill="#ff150f" d="M1479 371h5v5h-5zM1484 371h5v5h-5z"/><path fill="#ff120c" d="M1489 371h5v5h-5z"/><path fill="#ff0f0c" d="M1494 371h5v5h-5z"/><path fill="#ff0f09" d="M1499 371h5v5h-5z"/><path fill="#ff0c09" d="M1504 371h5v5h-5z"/><path fill="#ff0c06" d="M1509 371h5v5h-5z"/><path fill="#ff0906" d="M1514 371h5v5h-5zM1514 376h5v5h-5z"/><path fill="#ff0903" d="M1519 371h5v5h-5zM1524 371h5v5h-5z"/><path fill="#ff0603" d="M1529 371h5v5h-5z"/><path fill="#ff0300" d="M1539 371h5v5h-5zM1544 371h5v5h-5zM1549 371h5v5h-5zM1539 376h5v5h-5z"/><path fill="#00fffc" d="M1219 376h5v5h-5z"/><path fill="#03fffc" d="M1224 376h5v5h-5z"/><path fill="#12fffc" d="M1229 376h5v5h-5z"/><path fill="#24fffc" d="M1234 376h5v5h-5z"/><path fill="#33fffc" d="M1239 376h5v5h-5z"/><path fill="#42fffc" d="M1244 376h5v5h-5z"/><path fill="#54fffc" d="M1249 376h5v5h-5z"/><path fill="#66fffc" d="M1254 376h5v5h-5z"/><path fill="#78fffc" d="M1259 376h5v5h-5z"/><path fill="#8afffc" d="M1264 376h5v5h-5z"/><path fill="#9ffffc" d="M1269 376h5v5h-5z"/><path fill="#b4fffc" d="M1274 376h5v5h-5z"/><path fill="#c9fffc" d="M1279 376h5v5h-5z"/><path fill="#defffc" d="M1284 376h5v5h-5z"/><path fill="#f3fffc" d="M1289 376h5v5h-5z"/><path fill="#fff3f0" d="M1294 376h5v5h-5z"/><path fill="#ffdedb" d="M1299 376h5v5h-5z"/><path fill="#ffccc9" d="M1304 376h5v5h-5z"/><path fill="#ffbdba" d="M1309 376h5v5h-5z"/><path fill="#ffaeab" d="M1314 376h5v5h-5z"/><path fill="#ffa29f" d="M1319 376h5v5h-5z"/><path fill="#ff9693" d="M1324 376h5v5h-5z"/><path fill="#ff8d8a" d="M1329 376h5v5h-5z"/><path fill="#ff8481" d="M1334 376h5v5h-5z"/><path fill="#ff7b78" d="M1339 376h5v5h-5z"/><path fill="#ff726f" d="M1344 376h5v5h-5z"/><path fill="#ff6c69" d="M1349 376h5v5h-5z"/><path fill="#ff6663" d="M1354 376h5v5h-5z"/><path fill="#ff5d5d" d="M1359 376h5v5h-5z"/><path fill="#ff5a57" d="M1364 376h5v5h-5z"/><path fill="#ff5451" d="M1369 376h5v5h-5z"/><path fill="#ff4e4e" d="M1374 376h5v5h-5z"/><path fill="#ff4b48" d="M1379 376h5v5h-5z"/><path fill="#ff4545" d="M1384 376h5v5h-5z"/><path fill="#ff423f" d="M1389 376h5v5h-5z"/><path fill="#ff3c3c" d="M1394 376h5v5h-5z"/><path fill="#ff3939" d="M1399 376h5v5h-5z"/><path fill="#ff3636" d="M1404 376h5v5h-5z"/><path fill="#ff3330" d="M1409 376h5v5h-5z"/><path fill="#ff302d" d="M1414 376h5v5h-5z"/><path fill="#ff2d2a" d="M1419 376h5v5h-5z"/><path fill="#ff2a2a" d="M1424 376h5v5h-5z"/><path fill="#ff2727" d="M1429 376h5v5h-5z"/><path fill="#ff2424" d="M1434 376h5v5h-5z"/><path fill="#ff2121" d="M1439 376h5v5h-5z"/><path fill="#ff211e" d="M1444 376h5v5h-5z"/><path fill="#ff1e1e" d="M1449 376h5v5h-5z"/><path fill="#ff1b1b" d="M1454 376h5v5h-5z"/><path fill="#ff1818" d="M1459 376h5v5h-5zM1464 376h5v5h-5z"/><path fill="#ff1515" d="M1469 376h5v5h-5z"/><path fill="#ff1512" d="M1474 376h5v5h-5z"/><path fill="#ff1212" d="M1479 376h5v5h-5z"/><path fill="#ff0f0f" d="M1484 376h5v5h-5zM1489 376h5v5h-5z"/><path fill="#ff0c0c" d="M1494 376h5v5h-5zM1499 376h5v5h-5z"/><path fill="#ff0909" d="M1504 376h5v5h-5zM1509 376h5v5h-5z"/><path fill="#ff0606" d="M1519 376h5v5h-5zM1524 376h5v5h-5z"/><path fill="#ff0303" d="M1529 376h5v5h-5zM1534 376h5v5h-5z"/><path fill="#ff0000" d="M1544 376h5v5h-5zM1549 376h5v5h-5zM1554 376h5v5h-5zM1549 381h5v5h-5z"/><path fill="#00f3ff" d="M1214 381h5v5h-5zM1219 381h5v5h-5z"/><path fill="#09f3ff" d="M1224 381h5v5h-5z"/><path fill="#18f3ff" d="M1229 381h5v5h-5z"/><path fill="#27f3ff" d="M1234 381h5v5h-5z"/><path fill="#39f3ff" d="M1239 381h5v5h-5z"/><path fill="#48f3ff" d="M1244 381h5v5h-5z"/><path fill="#5af3ff" d="M1249 381h5v5h-5z"/><path fill="#69f3ff" d="M1254 381h5v5h-5z"/><path fill="#7bf3ff" d="M1259 381h5v5h-5z"/><path fill="#90f0ff" d="M1264 381h5v5h-5z"/><path fill="#a2f0ff" d="M1269 381h5v5h-5z"/><path fill="#b7f0ff" d="M1274 381h5v5h-5z"/><path fill="#ccf0ff" d="M1279 381h5v5h-5z"/><path fill="#e1f0ff" d="M1284 381h5v5h-5z"/><path fill="#f6f0ff" d="M1289 381h5v5h-5z"/><path fill="#ffe1f0" d="M1294 381h5v5h-5z"/><path fill="#ffcfde" d="M1299 381h5v5h-5z"/><path fill="#ffbdcc" d="M1304 381h5v5h-5z"/><path fill="#ffb1bd" d="M1309 381h5v5h-5z"/><path fill="#ffa2ae" d="M1314 381h5v5h-5z"/><path fill="#ff96a2" d="M1319 381h5v5h-5z"/><path fill="#ff8d96" d="M1324 381h5v5h-5z"/><path fill="#ff848d" d="M1329 381h5v5h-5z"/><path fill="#ff7b84" d="M1334 381h5v5h-5z"/><path fill="#ff727b" d="M1339 381h5v5h-5z"/><path fill="#ff6972" d="M1344 381h5v5h-5z"/><path fill="#ff636c" d="M1349 381h5v5h-5z"/><path fill="#ff5d66" d="M1354 381h5v5h-5z"/><path fill="#ff5760" d="M1359 381h5v5h-5z"/><path fill="#ff515a" d="M1364 381h5v5h-5z"/><path fill="#ff4e54" d="M1369 381h5v5h-5z"/><path fill="#ff484e" d="M1374 381h5v5h-5z"/><path fill="#ff454b" d="M1379 381h5v5h-5z"/><path fill="#ff3f45" d="M1384 381h5v5h-5z"/><path fill="#ff3c42" d="M1389 381h5v5h-5z"/><path fill="#ff393f" d="M1394 381h5v5h-5z"/><path fill="#ff333c" d="M1399 381h5v5h-5z"/><path fill="#ff3036" d="M1404 381h5v5h-5z"/><path fill="#ff2d33" d="M1409 381h5v5h-5z"/><path fill="#ff2a30" d="M1414 381h5v5h-5z"/><path fill="#ff272d" d="M1419 381h5v5h-5z"/><path fill="#ff242a" d="M1424 381h5v5h-5z"/><path fill="#ff2427" d="M1429 381h5v5h-5z"/><path fill="#ff2127" d="M1434 381h5v5h-5z"/><path fill="#ff1e24" d="M1439 381h5v5h-5z"/><path fill="#ff1b21" d="M1444 381h5v5h-5z"/><path fill="#ff1b1e" d="M1449 381h5v5h-5z"/><path fill="#ff181e" d="M1454 381h5v5h-5z"/><path fill="#ff151b" d="M1459 381h5v5h-5z"/><path fill="#ff1518" d="M1464 381h5v5h-5z"/><path fill="#ff1218" d="M1469 381h5v5h-5z"/><path fill="#ff0f15" d="M1474 381h5v5h-5z"/><path fill="#ff0f12" d="M1479 381h5v5h-5z"/><path fill="#ff0c12" d="M1484 381h5v5h-5z"/><path fill="#ff0c0f" d="M1489 381h5v5h-5z"/><path fill="#ff090f" d="M1494 381h5v5h-5z"/><path fill="#ff090c" d="M1499 381h5v5h-5z"/><path fill="#ff060c" d="M1504 381h5v5h-5z"/><path fill="#ff0609" d="M1509 381h5v5h-5zM1514 381h5v5h-5z"/><path fill="#ff0309" d="M1519 381h5v5h-5z"/><path fill="#ff0306" d="M1524 381h5v5h-5z"/><path fill="#ff0006" d="M1529 381h5v5h-5zM1529 386h5v5h-5zM1534 386h5v5h-5zM1539 386h5v5h-5z"/><path fill="#ff0003" d="M1534 381h5v5h-5zM1539 381h5v5h-5zM1544 381h5v5h-5z"/><path fill="#00e4ff" d="M1214 386h5v5h-5zM1219 386h5v5h-5z"/><path fill="#0fe4ff" d="M1224 386h5v5h-5z"/><path fill="#1ee4ff" d="M1229 386h5v5h-5z"/><path fill="#2de4ff" d="M1234 386h5v5h-5z"/><path fill="#3ce4ff" d="M1239 386h5v5h-5z"/><path fill="#4be1ff" d="M1244 386h5v5h-5z"/><path fill="#5de1ff" d="M1249 386h5v5h-5z"/><path fill="#6ce1ff" d="M1254 386h5v5h-5z"/><path fill="#7ee1ff" d="M1259 386h5v5h-5z"/><path fill="#90e1ff" d="M1264 386h5v5h-5z"/><path fill="#a5e1ff" d="M1269 386h5v5h-5z"/><path fill="#b7deff" d="M1274 386h5v5h-5z"/><path fill="#ccdeff" d="M1279 386h5v5h-5z"/><path fill="#e1deff" d="M1284 386h5v5h-5z"/><path fill="#f6deff" d="M1289 386h5v5h-5z"/><path fill="#ffd2f3" d="M1294 386h5v5h-5z"/><path fill="#ffc0de" d="M1299 386h5v5h-5z"/><path fill="#ffb1cf" d="M1304 386h5v5h-5z"/><path fill="#ffa2c0" d="M1309 386h5v5h-5z"/><path fill="#ff96b1" d="M1314 386h5v5h-5z"/><path fill="#ff8da5" d="M1319 386h5v5h-5z"/><path fill="#ff8199" d="M1324 386h5v5h-5z"/><path fill="#ff7890" d="M1329 386h5v5h-5z"/><path fill="#ff7287" d="M1334 386h5v5h-5z"/><path fill="#ff697e" d="M1339 386h5v5h-5z"/><path fill="#ff6375" d="M1344 386h5v5h-5z"/><path fill="#ff5d6f" d="M1349 386h5v5h-5z"/><path fill="#ff5769" d="M1354 386h5v5h-5z"/><path fill="#ff5163" d="M1359 386h5v5h-5z"/><path fill="#ff4b5d" d="M1364 386h5v5h-5z"/><path fill="#ff4557" d="M1369 386h5v5h-5z"/><path fill="#ff4251" d="M1374 386h5v5h-5z"/><path fill="#ff3f4e" d="M1379 386h5v5h-5z"/><path fill="#ff3948" d="M1384 386h5v5h-5z"/><path fill="#ff3645" d="M1389 386h5v5h-5z"/><path fill="#ff3342" d="M1394 386h5v5h-5z"/><path fill="#ff303c" d="M1399 386h5v5h-5z"/><path fill="#ff2d39" d="M1404 386h5v5h-5z"/><path fill="#ff2a36" d="M1409 386h5v5h-5z"/><path fill="#ff2733" d="M1414 386h5v5h-5z"/><path fill="#ff2430" d="M1419 386h5v5h-5z"/><path fill="#ff212d" d="M1424 386h5v5h-5z"/><path fill="#ff1e2a" d="M1429 386h5v5h-5z"/><path fill="#ff1b27" d="M1434 386h5v5h-5zM1439 386h5v5h-5z"/><path fill="#ff1824" d="M1444 386h5v5h-5z"/><path fill="#ff1521" d="M1449 386h5v5h-5z"/><path fill="#ff151e" d="M1454 386h5v5h-5z"/><path fill="#ff121e" d="M1459 386h5v5h-5z"/><path fill="#ff0f1b" d="M1464 386h5v5h-5z"/><path fill="#ff0f18" d="M1469 386h5v5h-5z"/><path fill="#ff0c18" d="M1474 386h5v5h-5z"/><path fill="#ff0c15" d="M1479 386h5v5h-5z"/><path fill="#ff0915" d="M1484 386h5v5h-5z"/><path fill="#ff0912" d="M1489 386h5v5h-5z"/><path fill="#ff060f" d="M1494 386h5v5h-5zM1499 386h5v5h-5z"/><path fill="#ff030f" d="M1504 386h5v5h-5zM1504 391h5v5h-5z"/><path fill="#ff030c" d="M1509 386h5v5h-5zM1514 386h5v5h-5z"/><path fill="#ff0009" d="M1519 386h5v5h-5zM1524 386h5v5h-5zM1524 391h5v5h-5zM1529 391h5v5h-5z"/><path fill="#00d8ff" d="M1214 391h5v5h-5z"/><path fill="#06d8ff" d="M1219 391h5v5h-5z"/><path fill="#12d5ff" d="M1224 391h5v5h-5z"/><path fill="#21d5ff" d="M1229 391h5v5h-5z"/><path fill="#30d5ff" d="M1234 391h5v5h-5z"/><path fill="#3fd5ff" d="M1239 391h5v5h-5z"/><path fill="#4ed2ff" d="M1244 391h5v5h-5z"/><path fill="#60d2ff" d="M1249 391h5v5h-5z"/><path fill="#6fd2ff" d="M1254 391h5v5h-5z"/><path fill="#81d2ff" d="M1259 391h5v5h-5z"/><path fill="#93cfff" d="M1264 391h5v5h-5z"/><path fill="#a5cfff" d="M1269 391h5v5h-5z"/><path fill="#b7cfff" d="M1274 391h5v5h-5z"/><path fill="#cccfff" d="M1279 391h5v5h-5z"/><path fill="#e1ccff" d="M1284 391h5v5h-5z"/><path fill="#f6ccff" d="M1289 391h5v5h-5z"/><path fill="#ffc3f3" d="M1294 391h5v5h-5z"/><path fill="#ffb1e1" d="M1299 391h5v5h-5z"/><path fill="#ffa5cf" d="M1304 391h5v5h-5z"/><path fill="#ff96c0" d="M1309 391h5v5h-5z"/><path fill="#ff8db4" d="M1314 391h5v5h-5z"/><path fill="#ff81a8" d="M1319 391h5v5h-5z"/><path fill="#ff789c" d="M1324 391h5v5h-5z"/><path fill="#ff6f93" d="M1329 391h5v5h-5z"/><path fill="#ff698a" d="M1334 391h5v5h-5z"/><path fill="#ff6081" d="M1339 391h5v5h-5z"/><path fill="#ff5a78" d="M1344 391h5v5h-5z"/><path fill="#ff5472" d="M1349 391h5v5h-5z"/><path fill="#ff4e6c" d="M1354 391h5v5h-5z"/><path fill="#ff4b66" d="M1359 391h5v5h-5z"/><path fill="#ff4560" d="M1364 391h5v5h-5z"/><path fill="#ff3f5a" d="M1369 391h5v5h-5z"/><path fill="#ff3c54" d="M1374 391h5v5h-5z"/><path fill="#ff3951" d="M1379 391h5v5h-5z"/><path fill="#ff334b" d="M1384 391h5v5h-5z"/><path fill="#ff3048" d="M1389 391h5v5h-5z"/><path fill="#ff2d42" d="M1394 391h5v5h-5z"/><path fill="#ff2a3f" d="M1399 391h5v5h-5z"/><path fill="#ff273c" d="M1404 391h5v5h-5z"/><path fill="#ff2439" d="M1409 391h5v5h-5z"/><path fill="#ff2136" d="M1414 391h5v5h-5z"/><path fill="#ff1e33" d="M1419 391h5v5h-5z"/><path fill="#ff1e30" d="M1424 391h5v5h-5z"/><path fill="#ff1b2d" d="M1429 391h5v5h-5z"/><path fill="#ff182a" d="M1434 391h5v5h-5z"/><path fill="#ff1527" d="M1439 391h5v5h-5zM1444 391h5v5h-5z"/><path fill="#ff1224" d="M1449 391h5v5h-5z"/><path fill="#ff0f21" d="M1454 391h5v5h-5z"/><path fill="#ff0f1e" d="M1459 391h5v5h-5z"/><path fill="#ff0c1e" d="M1464 391h5v5h-5z"/><path fill="#ff0c1b" d="M1469 391h5v5h-5z"/><path fill="#ff0918" d="M1474 391h5v5h-5zM1479 391h5v5h-5z"/><path fill="#ff0615" d="M1484 391h5v5h-5zM1489 391h5v5h-5z"/><path fill="#ff0312" d="M1494 391h5v5h-5zM1499 391h5v5h-5z"/><path fill="#ff000f" d="M1509 391h5v5h-5zM1509 396h5v5h-5zM1514 396h5v5h-5z"/><path fill="#ff000c" d="M1514 391h5v5h-5zM1519 391h5v5h-5z"/><path fill="#00ccff" d="M1209 396h5v5h-5z"/><path fill="#00c9ff" d="M1214 396h5v5h-5z"/><path fill="#09c9ff" d="M1219 396h5v5h-5z"/><path fill="#18c9ff" d="M1224 396h5v5h-5z"/><path fill="#27c6ff" d="M1229 396h5v5h-5z"/><path fill="#33c6ff" d="M1234 396h5v5h-5z"/><path fill="#42c6ff" d="M1239 396h5v5h-5z"/><path fill="#51c6ff" d="M1244 396h5v5h-5z"/><path fill="#63c3ff" d="M1249 396h5v5h-5z"/><path fill="#72c3ff" d="M1254 396h5v5h-5z"/><path fill="#84c3ff" d="M1259 396h5v5h-5z"/><path fill="#93c0ff" d="M1264 396h5v5h-5z"/><path fill="#a5c0ff" d="M1269 396h5v5h-5z"/><path fill="#bac0ff" d="M1274 396h5v5h-5z"/><path fill="#ccbdff" d="M1279 396h5v5h-5z"/><path fill="#e1bdff" d="M1284 396h5v5h-5z"/><path fill="#f3baff" d="M1289 396h5v5h-5z"/><path fill="#ffb4f6" d="M1294 396h5v5h-5z"/><path fill="#ffa5e4" d="M1299 396h5v5h-5z"/><path fill="#ff96d2" d="M1304 396h5v5h-5z"/><path fill="#ff8ac3" d="M1309 396h5v5h-5z"/><path fill="#ff81b7" d="M1314 396h5v5h-5z"/><path fill="#ff78ab" d="M1319 396h5v5h-5z"/><path fill="#ff6f9f" d="M1324 396h5v5h-5z"/><path fill="#ff6696" d="M1329 396h5v5h-5z"/><path fill="#ff608d" d="M1334 396h5v5h-5z"/><path fill="#ff5a84" d="M1339 396h5v5h-5z"/><path fill="#ff547b" d="M1344 396h5v5h-5z"/><path fill="#ff4e75" d="M1349 396h5v5h-5z"/><path fill="#ff486f" d="M1354 396h5v5h-5z"/><path fill="#ff4269" d="M1359 396h5v5h-5z"/><path fill="#ff3f63" d="M1364 396h5v5h-5z"/><path fill="#ff395d" d="M1369 396h5v5h-5z"/><path fill="#ff3657" d="M1374 396h5v5h-5z"/><path fill="#ff3354" d="M1379 396h5v5h-5z"/><path fill="#ff304e" d="M1384 396h5v5h-5z"/><path fill="#ff2a4b" d="M1389 396h5v5h-5z"/><path fill="#ff2745" d="M1394 396h5v5h-5z"/><path fill="#ff2442" d="M1399 396h5v5h-5z"/><path fill="#ff243f" d="M1404 396h5v5h-5z"/><path fill="#ff213c" d="M1409 396h5v5h-5z"/><path fill="#ff1e39" d="M1414 396h5v5h-5z"/><path fill="#ff1b36" d="M1419 396h5v5h-5z"/><path fill="#ff1833" d="M1424 396h5v5h-5z"/><path fill="#ff1530" d="M1429 396h5v5h-5z"/><path fill="#ff152d" d="M1434 396h5v5h-5z"/><path fill="#ff122a" d="M1439 396h5v5h-5z"/><path fill="#ff0f27" d="M1444 396h5v5h-5z"/><path fill="#ff0f24" d="M1449 396h5v5h-5z"/><path fill="#ff0c24" d="M1454 396h5v5h-5z"/><path fill="#ff0c21" d="M1459 396h5v5h-5z"/><path fill="#ff091e" d="M1464 396h5v5h-5zM1469 396h5v5h-5z"/><path fill="#ff061b" d="M1474 396h5v5h-5z"/><path fill="#ff0618" d="M1479 396h5v5h-5z"/><path fill="#ff0318" d="M1484 396h5v5h-5z"/><path fill="#ff0315" d="M1489 396h5v5h-5z"/><path fill="#ff0015" d="M1494 396h5v5h-5zM1494 401h5v5h-5zM1499 401h5v5h-5z"/><path fill="#ff0012" d="M1499 396h5v5h-5zM1504 396h5v5h-5zM1504 401h5v5h-5z"/><path fill="#00bdff" d="M1209 401h5v5h-5zM1214 401h5v5h-5z"/><path fill="#0fbdff" d="M1219 401h5v5h-5z"/><path fill="#1bbaff" d="M1224 401h5v5h-5z"/><path fill="#2abaff" d="M1229 401h5v5h-5z"/><path fill="#39baff" d="M1234 401h5v5h-5z"/><path fill="#45b7ff" d="M1239 401h5v5h-5z"/><path fill="#54b7ff" d="M1244 401h5v5h-5z"/><path fill="#66b7ff" d="M1249 401h5v5h-5z"/><path fill="#75b4ff" d="M1254 401h5v5h-5z"/><path fill="#84b4ff" d="M1259 401h5v5h-5z"/><path fill="#96b4ff" d="M1264 401h5v5h-5z"/><path fill="#a8b1ff" d="M1269 401h5v5h-5z"/><path fill="#bab1ff" d="M1274 401h5v5h-5z"/><path fill="#ccaeff" d="M1279 401h5v5h-5z"/><path fill="#deaeff" d="M1284 401h5v5h-5z"/><path fill="#f3abff" d="M1289 401h5v5h-5z"/><path fill="#ffa5f6" d="M1294 401h5v5h-5z"/><path fill="#ff96e4" d="M1299 401h5v5h-5z"/><path fill="#ff8ad5" d="M1304 401h5v5h-5z"/><path fill="#ff81c6" d="M1309 401h5v5h-5z"/><path fill="#ff75b7" d="M1314 401h5v5h-5z"/><path fill="#ff6fab" d="M1319 401h5v5h-5z"/><path fill="#ff66a2" d="M1324 401h5v5h-5z"/><path fill="#ff5d96" d="M1329 401h5v5h-5z"/><path fill="#ff578d" d="M1334 401h5v5h-5z"/><path fill="#ff5187" d="M1339 401h5v5h-5z"/><path fill="#ff4b7e" d="M1344 401h5v5h-5z"/><path fill="#ff4578" d="M1349 401h5v5h-5z"/><path fill="#ff426f" d="M1354 401h5v5h-5z"/><path fill="#ff3c69" d="M1359 401h5v5h-5z"/><path fill="#ff3963" d="M1364 401h5v5h-5z"/><path fill="#ff3360" d="M1369 401h5v5h-5z"/><path fill="#ff305a" d="M1374 401h5v5h-5z"/><path fill="#ff2d54" d="M1379 401h5v5h-5z"/><path fill="#ff2a51" d="M1384 401h5v5h-5z"/><path fill="#ff274b" d="M1389 401h5v5h-5z"/><path fill="#ff2448" d="M1394 401h5v5h-5z"/><path fill="#ff2145" d="M1399 401h5v5h-5z"/><path fill="#ff1e42" d="M1404 401h5v5h-5z"/><path fill="#ff1b3c" d="M1409 401h5v5h-5z"/><path fill="#ff1839" d="M1414 401h5v5h-5z"/><path fill="#ff1836" d="M1419 401h5v5h-5z"/><path fill="#ff1533" d="M1424 401h5v5h-5z"/><path fill="#ff1230" d="M1429 401h5v5h-5z"/><path fill="#ff0f30" d="M1434 401h5v5h-5z"/><path fill="#ff0f2d" d="M1439 401h5v5h-5z"/><path fill="#ff0c2a" d="M1444 401h5v5h-5z"/><path fill="#ff0c27" d="M1449 401h5v5h-5z"/><path fill="#ff0924" d="M1454 401h5v5h-5zM1459 401h5v5h-5z"/><path fill="#ff0621" d="M1464 401h5v5h-5z"/><path fill="#ff061e" d="M1469 401h5v5h-5z"/><path fill="#ff031e" d="M1474 401h5v5h-5z"/><path fill="#ff031b" d="M1479 401h5v5h-5z"/><path fill="#ff001b" d="M1484 401h5v5h-5zM1484 406h5v5h-5zM1489 406h5v5h-5z"/><path fill="#ff0018" d="M1489 401h5v5h-5zM1494 406h5v5h-5z"/><path fill="#00b4ff" d="M1204 406h5v5h-5z"/><path fill="#00b1ff" d="M1209 406h5v5h-5z"/><path fill="#06b1ff" d="M1214 406h5v5h-5z"/><path fill="#12b1ff" d="M1219 406h5v5h-5z"/><path fill="#21aeff" d="M1224 406h5v5h-5z"/><path fill="#2daeff" d="M1229 406h5v5h-5z"/><path fill="#3caeff" d="M1234 406h5v5h-5z"/><path fill="#4babff" d="M1239 406h5v5h-5z"/><path fill="#57abff" d="M1244 406h5v5h-5z"/><path fill="#66a8ff" d="M1249 406h5v5h-5z"/><path fill="#78a8ff" d="M1254 406h5v5h-5z"/><path fill="#87a5ff" d="M1259 406h5v5h-5z"/><path fill="#96a5ff" d="M1264 406h5v5h-5z"/><path fill="#a8a2ff" d="M1269 406h5v5h-5z"/><path fill="#baa2ff" d="M1274 406h5v5h-5z"/><path fill="#cc9fff" d="M1279 406h5v5h-5z"/><path fill="#de9fff" d="M1284 406h5v5h-5z"/><path fill="#f39cff" d="M1289 406h5v5h-5z"/><path fill="#ff96f9" d="M1294 406h5v5h-5z"/><path fill="#ff8ae7" d="M1299 406h5v5h-5z"/><path fill="#ff81d5" d="M1304 406h5v5h-5z"/><path fill="#ff75c6" d="M1309 406h5v5h-5z"/><path fill="#ff6cba" d="M1314 406h5v5h-5z"/><path fill="#ff63ae" d="M1319 406h5v5h-5z"/><path fill="#ff5da5" d="M1324 406h5v5h-5z"/><path fill="#ff5799" d="M1329 406h5v5h-5z"/><path fill="#ff4e90" d="M1334 406h5v5h-5z"/><path fill="#ff4b87" d="M1339 406h5v5h-5z"/><path fill="#ff4581" d="M1344 406h5v5h-5z"/><path fill="#ff3f78" d="M1349 406h5v5h-5z"/><path fill="#ff3c72" d="M1354 406h5v5h-5z"/><path fill="#ff366c" d="M1359 406h5v5h-5z"/><path fill="#ff3366" d="M1364 406h5v5h-5z"/><path fill="#ff2d60" d="M1369 406h5v5h-5z"/><path fill="#ff2a5d" d="M1374 406h5v5h-5z"/><path fill="#ff2757" d="M1379 406h5v5h-5z"/><path fill="#ff2454" d="M1384 406h5v5h-5z"/><path fill="#ff214e" d="M1389 406h5v5h-5z"/><path fill="#ff1e4b" d="M1394 406h5v5h-5z"/><path fill="#ff1b48" d="M1399 406h5v5h-5z"/><path fill="#ff1842" d="M1404 406h5v5h-5z"/><path fill="#ff183f" d="M1409 406h5v5h-5z"/><path fill="#ff153c" d="M1414 406h5v5h-5z"/><path fill="#ff1239" d="M1419 406h5v5h-5z"/><path fill="#ff1236" d="M1424 406h5v5h-5z"/><path fill="#ff0f33" d="M1429 406h5v5h-5z"/><path fill="#ff0c30" d="M1434 406h5v5h-5z"/><path fill="#ff0c2d" d="M1439 406h5v5h-5z"/><path fill="#ff092d" d="M1444 406h5v5h-5z"/><path fill="#ff092a" d="M1449 406h5v5h-5z"/><path fill="#ff0627" d="M1454 406h5v5h-5z"/><path fill="#ff0324" d="M1459 406h5v5h-5zM1464 406h5v5h-5z"/><path fill="#ff0321" d="M1469 406h5v5h-5z"/><path fill="#ff001e" d="M1474 406h5v5h-5zM1479 406h5v5h-5zM1479 411h5v5h-5z"/><path fill="#00a8ff" d="M1204 411h5v5h-5zM1209 411h5v5h-5z"/><path fill="#09a5ff" d="M1214 411h5v5h-5z"/><path fill="#18a5ff" d="M1219 411h5v5h-5z"/><path fill="#24a2ff" d="M1224 411h5v5h-5z"/><path fill="#30a2ff" d="M1229 411h5v5h-5z"/><path fill="#3f9fff" d="M1234 411h5v5h-5z"/><path fill="#4e9fff" d="M1239 411h5v5h-5z"/><path fill="#5a9fff" d="M1244 411h5v5h-5z"/><path fill="#699cff" d="M1249 411h5v5h-5z"/><path fill="#789cff" d="M1254 411h5v5h-5z"/><path fill="#8a99ff" d="M1259 411h5v5h-5z"/><path fill="#9999ff" d="M1264 411h5v5h-5z"/><path fill="#a896ff" d="M1269 411h5v5h-5z"/><path fill="#ba96ff" d="M1274 411h5v5h-5z"/><path fill="#cc93ff" d="M1279 411h5v5h-5z"/><path fill="#de90ff" d="M1284 411h5v5h-5z"/><path fill="#f090ff" d="M1289 411h5v5h-5z"/><path fill="#ff8af9" d="M1294 411h5v5h-5z"/><path fill="#ff7ee7" d="M1299 411h5v5h-5z"/><path fill="#ff75d8" d="M1304 411h5v5h-5z"/><path fill="#ff6cc9" d="M1309 411h5v5h-5z"/><path fill="#ff63bd" d="M1314 411h5v5h-5z"/><path fill="#ff5ab1" d="M1319 411h5v5h-5z"/><path fill="#ff54a5" d="M1324 411h5v5h-5z"/><path fill="#ff4e9c" d="M1329 411h5v5h-5z"/><path fill="#ff4893" d="M1334 411h5v5h-5z"/><path fill="#ff428a" d="M1339 411h5v5h-5z"/><path fill="#ff3c84" d="M1344 411h5v5h-5z"/><path fill="#ff397b" d="M1349 411h5v5h-5z"/><path fill="#ff3375" d="M1354 411h5v5h-5z"/><path fill="#ff306f" d="M1359 411h5v5h-5z"/><path fill="#ff2d69" d="M1364 411h5v5h-5z"/><path fill="#ff2a63" d="M1369 411h5v5h-5z"/><path fill="#ff2460" d="M1374 411h5v5h-5z"/><path fill="#ff215a" d="M1379 411h5v5h-5z"/><path fill="#ff1e54" d="M1384 411h5v5h-5z"/><path fill="#ff1b51" d="M1389 411h5v5h-5z"/><path fill="#ff1b4e" d="M1394 411h5v5h-5z"/><path fill="#ff1848" d="M1399 411h5v5h-5z"/><path fill="#ff1545" d="M1404 411h5v5h-5z"/><path fill="#ff1242" d="M1409 411h5v5h-5z"/><path fill="#ff123f" d="M1414 411h5v5h-5z"/><path fill="#ff0f3c" d="M1419 411h5v5h-5z"/><path fill="#ff0c39" d="M1424 411h5v5h-5z"/><path fill="#ff0c36" d="M1429 411h5v5h-5z"/><path fill="#ff0933" d="M1434 411h5v5h-5z"/><path fill="#ff0630" d="M1439 411h5v5h-5z"/><path fill="#ff062d" d="M1444 411h5v5h-5z"/><path fill="#ff032d" d="M1449 411h5v5h-5z"/><path fill="#ff032a" d="M1454 411h5v5h-5z"/><path fill="#ff0027" d="M1459 411h5v5h-5zM1464 416h5v5h-5z"/><path fill="#ff0024" d="M1464 411h5v5h-5zM1469 411h5v5h-5zM1469 416h5v5h-5z"/><path fill="#ff0021" d="M1474 411h5v5h-5z"/><path fill="#009cff" d="M1204 416h5v5h-5z"/><path fill="#039cff" d="M1209 416h5v5h-5z"/><path fill="#0f99ff" d="M1214 416h5v5h-5z"/><path fill="#1b99ff" d="M1219 416h5v5h-5z"/><path fill="#2799ff" d="M1224 416h5v5h-5z"/><path fill="#3696ff" d="M1229 416h5v5h-5z"/><path fill="#4296ff" d="M1234 416h5v5h-5z"/><path fill="#5193ff" d="M1239 416h5v5h-5z"/><path fill="#5d93ff" d="M1244 416h5v5h-5z"/><path fill="#6c90ff" d="M1249 416h5v5h-5z"/><path fill="#7b90ff" d="M1254 416h5v5h-5z"/><path fill="#8a8dff" d="M1259 416h5v5h-5z"/><path fill="#998aff" d="M1264 416h5v5h-5z"/><path fill="#ab8aff" d="M1269 416h5v5h-5z"/><path fill="#ba87ff" d="M1274 416h5v5h-5z"/><path fill="#cc87ff" d="M1279 416h5v5h-5z"/><path fill="#de84ff" d="M1284 416h5v5h-5z"/><path fill="#f081ff" d="M1289 416h5v5h-5z"/><path fill="#ff7efc" d="M1294 416h5v5h-5z"/><path fill="#ff72ea" d="M1299 416h5v5h-5z"/><path fill="#ff69db" d="M1304 416h5v5h-5z"/><path fill="#ff60cc" d="M1309 416h5v5h-5z"/><path fill="#ff5ac0" d="M1314 416h5v5h-5z"/><path fill="#ff51b4" d="M1319 416h5v5h-5z"/><path fill="#ff4ba8" d="M1324 416h5v5h-5z"/><path fill="#ff459f" d="M1329 416h5v5h-5z"/><path fill="#ff3f96" d="M1334 416h5v5h-5z"/><path fill="#ff3c8d" d="M1339 416h5v5h-5z"/><path fill="#ff3684" d="M1344 416h5v5h-5z"/><path fill="#ff337e" d="M1349 416h5v5h-5z"/><path fill="#ff2d78" d="M1354 416h5v5h-5z"/><path fill="#ff2a72" d="M1359 416h5v5h-5z"/><path fill="#ff276c" d="M1364 416h5v5h-5z"/><path fill="#ff2466" d="M1369 416h5v5h-5z"/><path fill="#ff2160" d="M1374 416h5v5h-5z"/><path fill="#ff1e5d" d="M1379 416h5v5h-5z"/><path fill="#ff1b57" d="M1384 416h5v5h-5z"/><path fill="#ff1854" d="M1389 416h5v5h-5z"/><path fill="#ff154e" d="M1394 416h5v5h-5z"/><path fill="#ff124b" d="M1399 416h5v5h-5z"/><path fill="#ff1248" d="M1404 416h5v5h-5z"/><path fill="#ff0f45" d="M1409 416h5v5h-5z"/><path fill="#ff0c42" d="M1414 416h5v5h-5z"/><path fill="#ff0c3f" d="M1419 416h5v5h-5z"/><path fill="#ff093c" d="M1424 416h5v5h-5z"/><path fill="#ff0639" d="M1429 416h5v5h-5z"/><path fill="#ff0636" d="M1434 416h5v5h-5z"/><path fill="#ff0333" d="M1439 416h5v5h-5z"/><path fill="#ff0330" d="M1444 416h5v5h-5z"/><path fill="#ff002d" d="M1449 416h5v5h-5zM1454 421h5v5h-5z"/><path fill="#ff002a" d="M1454 416h5v5h-5zM1459 416h5v5h-5z"/><path fill="#0093ff" d="M1199 421h5v5h-5zM1204 421h5v5h-5z"/><path fill="#0690ff" d="M1209 421h5v5h-5z"/><path fill="#1290ff" d="M1214 421h5v5h-5z"/><path fill="#1e8dff" d="M1219 421h5v5h-5z"/><path fill="#2a8dff" d="M1224 421h5v5h-5z"/><path fill="#398aff" d="M1229 421h5v5h-5z"/><path fill="#458aff" d="M1234 421h5v5h-5z"/><path fill="#5187ff" d="M1239 421h5v5h-5z"/><path fill="#6087ff" d="M1244 421h5v5h-5z"/><path fill="#6f84ff" d="M1249 421h5v5h-5z"/><path fill="#7e84ff" d="M1254 421h5v5h-5z"/><path fill="#8d81ff" d="M1259 421h5v5h-5z"/><path fill="#9c7eff" d="M1264 421h5v5h-5z"/><path fill="#ab7eff" d="M1269 421h5v5h-5z"/><path fill="#bd7bff" d="M1274 421h5v5h-5z"/><path fill="#cc7bff" d="M1279 421h5v5h-5z"/><path fill="#de78ff" d="M1284 421h5v5h-5z"/><path fill="#f075ff" d="M1289 421h5v5h-5z"/><path fill="#ff72fc" d="M1294 421h5v5h-5z"/><path fill="#ff69ea" d="M1299 421h5v5h-5z"/><path fill="#ff60db" d="M1304 421h5v5h-5z"/><path fill="#ff57cc" d="M1309 421h5v5h-5z"/><path fill="#ff51c0" d="M1314 421h5v5h-5z"/><path fill="#ff4bb4" d="M1319 421h5v5h-5z"/><path fill="#ff42ab" d="M1324 421h5v5h-5z"/><path fill="#ff3fa2" d="M1329 421h5v5h-5z"/><path fill="#ff3999" d="M1334 421h5v5h-5z"/><path fill="#ff3390" d="M1339 421h5v5h-5z"/><path fill="#ff3087" d="M1344 421h5v5h-5z"/><path fill="#ff2d81" d="M1349 421h5v5h-5z"/><path fill="#ff277b" d="M1354 421h5v5h-5z"/><path fill="#ff2475" d="M1359 421h5v5h-5z"/><path fill="#ff216f" d="M1364 421h5v5h-5z"/><path fill="#ff1e69" d="M1369 421h5v5h-5z"/><path fill="#ff1b63" d="M1374 421h5v5h-5z"/><path fill="#ff185d" d="M1379 421h5v5h-5z"/><path fill="#ff155a" d="M1384 421h5v5h-5z"/><path fill="#ff1257" d="M1389 421h5v5h-5z"/><path fill="#ff1251" d="M1394 421h5v5h-5z"/><path fill="#ff0f4e" d="M1399 421h5v5h-5z"/><path fill="#ff0c4b" d="M1404 421h5v5h-5z"/><path fill="#ff0945" d="M1409 421h5v5h-5z"/><path fill="#ff0942" d="M1414 421h5v5h-5z"/><path fill="#ff063f" d="M1419 421h5v5h-5z"/><path fill="#ff063c" d="M1424 421h5v5h-5z"/><path fill="#ff0339" d="M1429 421h5v5h-5z"/><path fill="#ff0336" d="M1434 421h5v5h-5z"/><path fill="#ff0036" d="M1439 421h5v5h-5zM1439 426h5v5h-5z"/><path fill="#ff0033" d="M1444 421h5v5h-5zM1444 426h5v5h-5z"/><path fill="#ff0030" d="M1449 421h5v5h-5z"/><path fill="#008aff" d="M1199 426h5v5h-5z"/><path fill="#0087ff" d="M1204 426h5v5h-5z"/><path fill="#0c87ff" d="M1209 426h5v5h-5z"/><path fill="#1584ff" d="M1214 426h5v5h-5z"/><path fill="#2184ff" d="M1219 426h5v5h-5z"/><path fill="#2d81ff" d="M1224 426h5v5h-5z"/><path fill="#3c81ff" d="M1229 426h5v5h-5z"/><path fill="#487eff" d="M1234 426h5v5h-5z"/><path fill="#547eff" d="M1239 426h5v5h-5z"/><path fill="#637bff" d="M1244 426h5v5h-5z"/><path fill="#727bff" d="M1249 426h5v5h-5z"/><path fill="#7e78ff" d="M1254 426h5v5h-5z"/><path fill="#8d75ff" d="M1259 426h5v5h-5z"/><path fill="#9c75ff" d="M1264 426h5v5h-5z"/><path fill="#ab72ff" d="M1269 426h5v5h-5z"/><path fill="#bd6fff" d="M1274 426h5v5h-5z"/><path fill="#cc6fff" d="M1279 426h5v5h-5z"/><path fill="#de6cff" d="M1284 426h5v5h-5z"/><path fill="#f069ff" d="M1289 426h5v5h-5z"/><path fill="#ff66fc" d="M1294 426h5v5h-5z"/><path fill="#ff5ded" d="M1299 426h5v5h-5z"/><path fill="#ff54de" d="M1304 426h5v5h-5z"/><path fill="#ff4ecf" d="M1309 426h5v5h-5z"/><path fill="#ff48c3" d="M1314 426h5v5h-5z"/><path fill="#ff42b7" d="M1319 426h5v5h-5z"/><path fill="#ff3cae" d="M1324 426h5v5h-5z"/><path fill="#ff36a2" d="M1329 426h5v5h-5z"/><path fill="#ff3399" d="M1334 426h5v5h-5z"/><path fill="#ff2d93" d="M1339 426h5v5h-5z"/><path fill="#ff2a8a" d="M1344 426h5v5h-5z"/><path fill="#ff2484" d="M1349 426h5v5h-5z"/><path fill="#ff217b" d="M1354 426h5v5h-5z"/><path fill="#ff1e75" d="M1359 426h5v5h-5z"/><path fill="#ff1b6f" d="M1364 426h5v5h-5z"/><path fill="#ff186c" d="M1369 426h5v5h-5z"/><path fill="#ff1566" d="M1374 426h5v5h-5z"/><path fill="#ff1260" d="M1379 426h5v5h-5z"/><path fill="#ff125d" d="M1384 426h5v5h-5z"/><path fill="#ff0f57" d="M1389 426h5v5h-5z"/><path fill="#ff0c54" d="M1394 426h5v5h-5z"/><path fill="#ff0951" d="M1399 426h5v5h-5z"/><path fill="#ff094b" d="M1404 426h5v5h-5z"/><path fill="#ff0648" d="M1409 426h5v5h-5z"/><path fill="#ff0345" d="M1414 426h5v5h-5z"/><path fill="#ff0342" d="M1419 426h5v5h-5z"/><path fill="#ff003f" d="M1424 426h5v5h-5zM1429 431h5v5h-5z"/><path fill="#ff003c" d="M1429 426h5v5h-5zM1434 431h5v5h-5z"/><path fill="#ff0039" d="M1434 426h5v5h-5z"/><path fill="#0081ff" d="M1199 431h5v5h-5z"/><path fill="#037eff" d="M1204 431h5v5h-5z"/><path fill="#0f7eff" d="M1209 431h5v5h-5z"/><path fill="#1b7bff" d="M1214 431h5v5h-5z"/><path fill="#277bff" d="M1219 431h5v5h-5z"/><path fill="#3378ff" d="M1224 431h5v5h-5z"/><path fill="#3f75ff" d="M1229 431h5v5h-5z"/><path fill="#4b75ff" d="M1234 431h5v5h-5z"/><path fill="#5772ff" d="M1239 431h5v5h-5z"/><path fill="#6672ff" d="M1244 431h5v5h-5z"/><path fill="#726fff" d="M1249 431h5v5h-5z"/><path fill="#816cff" d="M1254 431h5v5h-5z"/><path fill="#906cff" d="M1259 431h5v5h-5z"/><path fill="#9f69ff" d="M1264 431h5v5h-5z"/><path fill="#ae66ff" d="M1269 431h5v5h-5z"/><path fill="#bd66ff" d="M1274 431h5v5h-5z"/><path fill="#cc63ff" d="M1279 431h5v5h-5z"/><path fill="#de60ff" d="M1284 431h5v5h-5z"/><path fill="#ed5dff" d="M1289 431h5v5h-5z"/><path fill="#ff5dff" d="M1294 431h5v5h-5z"/><path fill="#ff54ed" d="M1299 431h5v5h-5z"/><path fill="#ff4bde" d="M1304 431h5v5h-5z"/><path fill="#ff45d2" d="M1309 431h5v5h-5z"/><path fill="#ff3fc3" d="M1314 431h5v5h-5z"/><path fill="#ff39ba" d="M1319 431h5v5h-5z"/><path fill="#ff33ae" d="M1324 431h5v5h-5z"/><path fill="#ff30a5" d="M1329 431h5v5h-5z"/><path fill="#ff2a9c" d="M1334 431h5v5h-5z"/><path fill="#ff2793" d="M1339 431h5v5h-5z"/><path fill="#ff248d" d="M1344 431h5v5h-5z"/><path fill="#ff1e84" d="M1349 431h5v5h-5z"/><path fill="#ff1b7e" d="M1354 431h5v5h-5z"/><path fill="#ff1878" d="M1359 431h5v5h-5z"/><path fill="#ff1572" d="M1364 431h5v5h-5z"/><path fill="#ff126c" d="M1369 431h5v5h-5z"/><path fill="#ff1269" d="M1374 431h5v5h-5z"/><path fill="#ff0f63" d="M1379 431h5v5h-5z"/><path fill="#ff0c5d" d="M1384 431h5v5h-5z"/><path fill="#ff095a" d="M1389 431h5v5h-5z"/><path fill="#ff0957" d="M1394 431h5v5h-5z"/><path fill="#ff0651" d="M1399 431h5v5h-5z"/><path fill="#ff034e" d="M1404 431h5v5h-5z"/><path fill="#ff034b" d="M1409 431h5v5h-5z"/><path fill="#ff0048" d="M1414 431h5v5h-5zM1414 436h5v5h-5z"/><path fill="#ff0045" d="M1419 431h5v5h-5zM1419 436h5v5h-5z"/><path fill="#ff0042" d="M1424 431h5v5h-5z"/><path fill="#0078ff" d="M1194 436h5v5h-5zM1199 436h5v5h-5z"/><path fill="#0675ff" d="M1204 436h5v5h-5z"/><path fill="#1275ff" d="M1209 436h5v5h-5z"/><path fill="#1e72ff" d="M1214 436h5v5h-5z"/><path fill="#2a6fff" d="M1219 436h5v5h-5z"/><path fill="#366fff" d="M1224 436h5v5h-5z"/><path fill="#426cff" d="M1229 436h5v5h-5z"/><path fill="#4e6cff" d="M1234 436h5v5h-5z"/><path fill="#5a69ff" d="M1239 436h5v5h-5z"/><path fill="#6666ff" d="M1244 436h5v5h-5z"/><path fill="#7566ff" d="M1249 436h5v5h-5z"/><path fill="#8163ff" d="M1254 436h5v5h-5z"/><path fill="#9060ff" d="M1259 436h5v5h-5z"/><path fill="#9f60ff" d="M1264 436h5v5h-5z"/><path fill="#ae5dff" d="M1269 436h5v5h-5z"/><path fill="#bd5aff" d="M1274 436h5v5h-5z"/><path fill="#cc57ff" d="M1279 436h5v5h-5z"/><path fill="#de57ff" d="M1284 436h5v5h-5z"/><path fill="#ed54ff" d="M1289 436h5v5h-5z"/><path fill="#ff51ff" d="M1294 436h5v5h-5z"/><path fill="#ff48f0" d="M1299 436h5v5h-5z"/><path fill="#ff42e1" d="M1304 436h5v5h-5z"/><path fill="#ff3cd2" d="M1309 436h5v5h-5z"/><path fill="#ff36c6" d="M1314 436h5v5h-5z"/><path fill="#ff30ba" d="M1319 436h5v5h-5z"/><path fill="#ff2db1" d="M1324 436h5v5h-5z"/><path fill="#ff27a8" d="M1329 436h5v5h-5z"/><path fill="#ff249f" d="M1334 436h5v5h-5z"/><path fill="#ff2196" d="M1339 436h5v5h-5z"/><path fill="#ff1e8d" d="M1344 436h5v5h-5z"/><path fill="#ff1887" d="M1349 436h5v5h-5z"/><path fill="#ff1581" d="M1354 436h5v5h-5z"/><path fill="#ff127b" d="M1359 436h5v5h-5z"/><path fill="#ff1275" d="M1364 436h5v5h-5z"/><path fill="#ff0f6f" d="M1369 436h5v5h-5z"/><path fill="#ff0c69" d="M1374 436h5v5h-5z"/><path fill="#ff0966" d="M1379 436h5v5h-5z"/><path fill="#ff0660" d="M1384 436h5v5h-5z"/><path fill="#ff065d" d="M1389 436h5v5h-5z"/><path fill="#ff0357" d="M1394 436h5v5h-5z"/><path fill="#ff0354" d="M1399 436h5v5h-5z"/><path fill="#ff0051" d="M1404 436h5v5h-5zM1404 441h5v5h-5z"/><path fill="#ff004e" d="M1409 436h5v5h-5zM1409 441h5v5h-5z"/><path fill="#006fff" d="M1194 441h5v5h-5zM1199 441h5v5h-5z"/><path fill="#0c6cff" d="M1204 441h5v5h-5z"/><path fill="#1569ff" d="M1209 441h5v5h-5z"/><path fill="#2169ff" d="M1214 441h5v5h-5z"/><path fill="#2d66ff" d="M1219 441h5v5h-5z"/><path fill="#3966ff" d="M1224 441h5v5h-5z"/><path fill="#4563ff" d="M1229 441h5v5h-5z"/><path fill="#5160ff" d="M1234 441h5v5h-5z"/><path fill="#5d60ff" d="M1239 441h5v5h-5z"/><path fill="#695dff" d="M1244 441h5v5h-5z"/><path fill="#785aff" d="M1249 441h5v5h-5z"/><path fill="#845aff" d="M1254 441h5v5h-5z"/><path fill="#9357ff" d="M1259 441h5v5h-5z"/><path fill="#9f54ff" d="M1264 441h5v5h-5z"/><path fill="#ae54ff" d="M1269 441h5v5h-5z"/><path fill="#bd51ff" d="M1274 441h5v5h-5z"/><path fill="#cc4eff" d="M1279 441h5v5h-5z"/><path fill="#de4bff" d="M1284 441h5v5h-5z"/><path fill="#ed48ff" d="M1289 441h5v5h-5z"/><path fill="#ff48ff" d="M1294 441h5v5h-5z"/><path fill="#ff3ff0" d="M1299 441h5v5h-5z"/><path fill="#ff39e1" d="M1304 441h5v5h-5z"/><path fill="#ff33d5" d="M1309 441h5v5h-5z"/><path fill="#ff30c9" d="M1314 441h5v5h-5z"/><path fill="#ff2abd" d="M1319 441h5v5h-5z"/><path fill="#ff24b1" d="M1324 441h5v5h-5z"/><path fill="#ff21a8" d="M1329 441h5v5h-5z"/><path fill="#ff1e9f" d="M1334 441h5v5h-5z"/><path fill="#ff1b99" d="M1339 441h5v5h-5z"/><path fill="#ff1890" d="M1344 441h5v5h-5z"/><path fill="#ff158a" d="M1349 441h5v5h-5z"/><path fill="#ff1284" d="M1354 441h5v5h-5z"/><path fill="#ff0f7e" d="M1359 441h5v5h-5z"/><path fill="#ff0c78" d="M1364 441h5v5h-5z"/><path fill="#ff0972" d="M1369 441h5v5h-5z"/><path fill="#ff066c" d="M1374 441h5v5h-5z"/><path fill="#ff0666" d="M1379 441h5v5h-5z"/><path fill="#ff0363" d="M1384 441h5v5h-5z"/><path fill="#ff005d" d="M1389 441h5v5h-5zM1394 446h5v5h-5z"/><path fill="#ff005a" d="M1394 441h5v5h-5z"/><path fill="#ff0057" d="M1399 441h5v5h-5zM1399 446h5v5h-5z"/><path fill="#0066ff" d="M1194 446h5v5h-5z"/><path fill="#0366ff" d="M1199 446h5v5h-5z"/><path fill="#0f63ff" d="M1204 446h5v5h-5z"/><path fill="#1863ff" d="M1209 446h5v5h-5z"/><path fill="#2460ff" d="M1214 446h5v5h-5z"/><path fill="#305dff" d="M1219 446h5v5h-5z"/><path fill="#3c5dff" d="M1224 446h5v5h-5z"/><path fill="#485aff" d="M1229 446h5v5h-5z"/><path fill="#5457ff" d="M1234 446h5v5h-5z"/><path fill="#6057ff" d="M1239 446h5v5h-5z"/><path fill="#6c54ff" d="M1244 446h5v5h-5z"/><path fill="#7851ff" d="M1249 446h5v5h-5z"/><path fill="#8751ff" d="M1254 446h5v5h-5z"/><path fill="#934eff" d="M1259 446h5v5h-5z"/><path fill="#a24bff" d="M1264 446h5v5h-5z"/><path fill="#ae48ff" d="M1269 446h5v5h-5z"/><path fill="#bd48ff" d="M1274 446h5v5h-5z"/><path fill="#cc45ff" d="M1279 446h5v5h-5z"/><path fill="#de42ff" d="M1284 446h5v5h-5z"/><path fill="#ed3fff" d="M1289 446h5v5h-5z"/><path fill="#fc3cff" d="M1294 446h5v5h-5z"/><path fill="#ff36f0" d="M1299 446h5v5h-5z"/><path fill="#ff30e4" d="M1304 446h5v5h-5z"/><path fill="#ff2dd5" d="M1309 446h5v5h-5z"/><path fill="#ff27c9" d="M1314 446h5v5h-5z"/><path fill="#ff24c0" d="M1319 446h5v5h-5z"/><path fill="#ff1eb4" d="M1324 446h5v5h-5z"/><path fill="#ff1bab" d="M1329 446h5v5h-5z"/><path fill="#ff18a2" d="M1334 446h5v5h-5z"/><path fill="#ff1599" d="M1339 446h5v5h-5z"/><path fill="#ff1293" d="M1344 446h5v5h-5z"/><path fill="#ff0f8a" d="M1349 446h5v5h-5z"/><path fill="#ff0c84" d="M1354 446h5v5h-5z"/><path fill="#ff097e" d="M1359 446h5v5h-5z"/><path fill="#ff0678" d="M1364 446h5v5h-5z"/><path fill="#ff0372" d="M1369 446h5v5h-5z"/><path fill="#ff036f" d="M1374 446h5v5h-5z"/><path fill="#ff0069" d="M1379 446h5v5h-5z"/><path fill="#ff0066" d="M1384 446h5v5h-5zM1384 451h5v5h-5z"/><path fill="#ff0060" d="M1389 446h5v5h-5z"/><path fill="#0060ff" d="M1189 451h5v5h-5zM1194 451h5v5h-5z"/><path fill="#095dff" d="M1199 451h5v5h-5z"/><path fill="#125aff" d="M1204 451h5v5h-5z"/><path fill="#1b5aff" d="M1209 451h5v5h-5z"/><path fill="#2757ff" d="M1214 451h5v5h-5z"/><path fill="#3357ff" d="M1219 451h5v5h-5z"/><path fill="#3f54ff" d="M1224 451h5v5h-5z"/><path fill="#4851ff" d="M1229 451h5v5h-5z"/><path fill="#5451ff" d="M1234 451h5v5h-5z"/><path fill="#604eff" d="M1239 451h5v5h-5z"/><path fill="#6f4bff" d="M1244 451h5v5h-5z"/><path fill="#7b48ff" d="M1249 451h5v5h-5z"/><path fill="#8748ff" d="M1254 451h5v5h-5z"/><path fill="#9645ff" d="M1259 451h5v5h-5z"/><path fill="#a242ff" d="M1264 451h5v5h-5z"/><path fill="#b13fff" d="M1269 451h5v5h-5z"/><path fill="#c03fff" d="M1274 451h5v5h-5z"/><path fill="#cc3cff" d="M1279 451h5v5h-5z"/><path fill="#db39ff" d="M1284 451h5v5h-5z"/><path fill="#ed36ff" d="M1289 451h5v5h-5z"/><path fill="#fc33ff" d="M1294 451h5v5h-5z"/><path fill="#ff2df3" d="M1299 451h5v5h-5z"/><path fill="#ff2ae4" d="M1304 451h5v5h-5z"/><path fill="#ff24d8" d="M1309 451h5v5h-5z"/><path fill="#ff1ecc" d="M1314 451h5v5h-5z"/><path fill="#ff1bc0" d="M1319 451h5v5h-5z"/><path fill="#ff18b7" d="M1324 451h5v5h-5z"/><path fill="#ff15ae" d="M1329 451h5v5h-5z"/><path fill="#ff12a5" d="M1334 451h5v5h-5z"/><path fill="#ff0f9c" d="M1339 451h5v5h-5z"/><path fill="#ff0c96" d="M1344 451h5v5h-5z"/><path fill="#ff098d" d="M1349 451h5v5h-5z"/><path fill="#ff0687" d="M1354 451h5v5h-5z"/><path fill="#ff0381" d="M1359 451h5v5h-5z"/><path fill="#ff037b" d="M1364 451h5v5h-5z"/><path fill="#ff0075" d="M1369 451h5v5h-5z"/><path fill="#ff006f" d="M1374 451h5v5h-5z"/><path fill="#ff006c" d="M1379 451h5v5h-5z"/><path fill="#0057ff" d="M1189 456h5v5h-5zM1194 456h5v5h-5z"/><path fill="#0c54ff" d="M1199 456h5v5h-5z"/><path fill="#1554ff" d="M1204 456h5v5h-5z"/><path fill="#2151ff" d="M1209 456h5v5h-5z"/><path fill="#2a4eff" d="M1214 456h5v5h-5z"/><path fill="#364eff" d="M1219 456h5v5h-5z"/><path fill="#3f4bff" d="M1224 456h5v5h-5z"/><path fill="#4b48ff" d="M1229 456h5v5h-5z"/><path fill="#5748ff" d="M1234 456h5v5h-5z"/><path fill="#6345ff" d="M1239 456h5v5h-5z"/><path fill="#6f42ff" d="M1244 456h5v5h-5z"/><path fill="#7b42ff" d="M1249 456h5v5h-5z"/><path fill="#8a3fff" d="M1254 456h5v5h-5z"/><path fill="#963cff" d="M1259 456h5v5h-5z"/><path fill="#a239ff" d="M1264 456h5v5h-5z"/><path fill="#b136ff" d="M1269 456h5v5h-5z"/><path fill="#c036ff" d="M1274 456h5v5h-5z"/><path fill="#cc33ff" d="M1279 456h5v5h-5z"/><path fill="#db30ff" d="M1284 456h5v5h-5z"/><path fill="#ea2dff" d="M1289 456h5v5h-5z"/><path fill="#fc2aff" d="M1294 456h5v5h-5z"/><path fill="#ff24f3" d="M1299 456h5v5h-5z"/><path fill="#ff21e7" d="M1304 456h5v5h-5z"/><path fill="#ff1bd8" d="M1309 456h5v5h-5z"/><path fill="#ff18cc" d="M1314 456h5v5h-5z"/><path fill="#ff15c3" d="M1319 456h5v5h-5z"/><path fill="#ff12b7" d="M1324 456h5v5h-5z"/><path fill="#ff0fae" d="M1329 456h5v5h-5z"/><path fill="#ff0ca5" d="M1334 456h5v5h-5z"/><path fill="#ff099f" d="M1339 456h5v5h-5z"/><path fill="#ff0696" d="M1344 456h5v5h-5z"/><path fill="#ff0390" d="M1349 456h5v5h-5z"/><path fill="#ff008a" d="M1354 456h5v5h-5zM1354 461h5v5h-5z"/><path fill="#ff0084" d="M1359 456h5v5h-5zM1359 461h5v5h-5z"/><path fill="#ff007e" d="M1364 456h5v5h-5z"/><path fill="#ff0078" d="M1369 456h5v5h-5z"/><path fill="#ff0072" d="M1374 456h5v5h-5z"/><path fill="#0054ff" d="M1184 461h5v5h-5z"/><path fill="#0051ff" d="M1189 461h5v5h-5z"/><path fill="#064eff" d="M1194 461h5v5h-5z"/><path fill="#0f4eff" d="M1199 461h5v5h-5z"/><path fill="#184bff" d="M1204 461h5v5h-5z"/><path fill="#2448ff" d="M1209 461h5v5h-5z"/><path fill="#2d48ff" d="M1214 461h5v5h-5z"/><path fill="#3945ff" d="M1219 461h5v5h-5z"/><path fill="#4242ff" d="M1224 461h5v5h-5z"/><path fill="#4e42ff" d="M1229 461h5v5h-5z"/><path fill="#5a3fff" d="M1234 461h5v5h-5z"/><path fill="#663cff" d="M1239 461h5v5h-5z"/><path fill="#723cff" d="M1244 461h5v5h-5z"/><path fill="#7e39ff" d="M1249 461h5v5h-5z"/><path fill="#8a36ff" d="M1254 461h5v5h-5z"/><path fill="#9633ff" d="M1259 461h5v5h-5z"/><path fill="#a530ff" d="M1264 461h5v5h-5z"/><path fill="#b130ff" d="M1269 461h5v5h-5z"/><path fill="#c02dff" d="M1274 461h5v5h-5z"/><path fill="#cc2aff" d="M1279 461h5v5h-5z"/><path fill="#db27ff" d="M1284 461h5v5h-5z"/><path fill="#ea24ff" d="M1289 461h5v5h-5z"/><path fill="#f921ff" d="M1294 461h5v5h-5z"/><path fill="#ff1ef6" d="M1299 461h5v5h-5z"/><path fill="#ff18e7" d="M1304 461h5v5h-5z"/><path fill="#ff15db" d="M1309 461h5v5h-5z"/><path fill="#ff12cf" d="M1314 461h5v5h-5z"/><path fill="#ff0fc3" d="M1319 461h5v5h-5z"/><path fill="#ff0cba" d="M1324 461h5v5h-5z"/><path fill="#ff09b1" d="M1329 461h5v5h-5z"/><path fill="#ff06a8" d="M1334 461h5v5h-5z"/><path fill="#ff039f" d="M1339 461h5v5h-5z"/><path fill="#ff0099" d="M1344 461h5v5h-5zM1344 466h5v5h-5z"/><path fill="#ff0090" d="M1349 461h5v5h-5z"/><path fill="#004bff" d="M1184 466h5v5h-5z"/><path fill="#0048ff" d="M1189 466h5v5h-5z"/><path fill="#0948ff" d="M1194 466h5v5h-5z"/><path fill="#1245ff" d="M1199 466h5v5h-5z"/><path fill="#1b45ff" d="M1204 466h5v5h-5z"/><path fill="#2742ff" d="M1209 466h5v5h-5z"/><path fill="#303fff" d="M1214 466h5v5h-5z"/><path fill="#3c3fff" d="M1219 466h5v5h-5z"/><path fill="#453cff" d="M1224 466h5v5h-5z"/><path fill="#5139ff" d="M1229 466h5v5h-5z"/><path fill="#5d36ff" d="M1234 466h5v5h-5z"/><path fill="#6636ff" d="M1239 466h5v5h-5z"/><path fill="#7233ff" d="M1244 466h5v5h-5z"/><path fill="#7e30ff" d="M1249 466h5v5h-5z"/><path fill="#8a2dff" d="M1254 466h5v5h-5z"/><path fill="#992dff" d="M1259 466h5v5h-5z"/><path fill="#a52aff" d="M1264 466h5v5h-5z"/><path fill="#b127ff" d="M1269 466h5v5h-5z"/><path fill="#c024ff" d="M1274 466h5v5h-5z"/><path fill="#cf21ff" d="M1279 466h5v5h-5z"/><path fill="#db1eff" d="M1284 466h5v5h-5z"/><path fill="#ea1bff" d="M1289 466h5v5h-5z"/><path fill="#f918ff" d="M1294 466h5v5h-5z"/><path fill="#ff15f6" d="M1299 466h5v5h-5z"/><path fill="#ff12e7" d="M1304 466h5v5h-5z"/><path fill="#ff0fdb" d="M1309 466h5v5h-5z"/><path fill="#ff09cf" d="M1314 466h5v5h-5z"/><path fill="#ff06c6" d="M1319 466h5v5h-5z"/><path fill="#ff03ba" d="M1324 466h5v5h-5z"/><path fill="#ff03b1" d="M1329 466h5v5h-5z"/><path fill="#ff00ab" d="M1334 466h5v5h-5zM1334 471h5v5h-5z"/><path fill="#ff00a2" d="M1339 466h5v5h-5zM1339 471h5v5h-5z"/><path fill="#ff0093" d="M1349 466h5v5h-5z"/><path fill="#0045ff" d="M1184 471h5v5h-5z"/><path fill="#0342ff" d="M1189 471h5v5h-5z"/><path fill="#0c3fff" d="M1194 471h5v5h-5z"/><path fill="#153fff" d="M1199 471h5v5h-5z"/><path fill="#1e3cff" d="M1204 471h5v5h-5z"/><path fill="#2a3cff" d="M1209 471h5v5h-5z"/><path fill="#3339ff" d="M1214 471h5v5h-5z"/><path fill="#3c36ff" d="M1219 471h5v5h-5z"/><path fill="#4833ff" d="M1224 471h5v5h-5z"/><path fill="#5433ff" d="M1229 471h5v5h-5z"/><path fill="#5d30ff" d="M1234 471h5v5h-5z"/><path fill="#692dff" d="M1239 471h5v5h-5z"/><path fill="#752aff" d="M1244 471h5v5h-5z"/><path fill="#812aff" d="M1249 471h5v5h-5z"/><path fill="#8d27ff" d="M1254 471h5v5h-5z"/><path fill="#9924ff" d="M1259 471h5v5h-5z"/><path fill="#a521ff" d="M1264 471h5v5h-5z"/><path fill="#b41eff" d="M1269 471h5v5h-5z"/><path fill="#c01bff" d="M1274 471h5v5h-5z"/><path fill="#cf18ff" d="M1279 471h5v5h-5z"/><path fill="#db18ff" d="M1284 471h5v5h-5z"/><path fill="#ea15ff" d="M1289 471h5v5h-5z"/><path fill="#f912ff" d="M1294 471h5v5h-5z"/><path fill="#ff0cf6" d="M1299 471h5v5h-5z"/><path fill="#ff09ea" d="M1304 471h5v5h-5z"/><path fill="#ff06de" d="M1309 471h5v5h-5z"/><path fill="#ff03d2" d="M1314 471h5v5h-5z"/><path fill="#ff00c6" d="M1319 471h5v5h-5z"/><path fill="#ff00bd" d="M1324 471h5v5h-5z"/><path fill="#ff00b4" d="M1329 471h5v5h-5z"/><path fill="#003fff" d="M1179 476h5v5h-5z"/><path fill="#003cff" d="M1184 476h5v5h-5z"/><path fill="#063cff" d="M1189 476h5v5h-5z"/><path fill="#0f39ff" d="M1194 476h5v5h-5z"/><path fill="#1836ff" d="M1199 476h5v5h-5z"/><path fill="#2136ff" d="M1204 476h5v5h-5z"/><path fill="#2a33ff" d="M1209 476h5v5h-5z"/><path fill="#3630ff" d="M1214 476h5v5h-5z"/><path fill="#3f30ff" d="M1219 476h5v5h-5z"/><path fill="#4b2dff" d="M1224 476h5v5h-5z"/><path fill="#542aff" d="M1229 476h5v5h-5z"/><path fill="#602aff" d="M1234 476h5v5h-5z"/><path fill="#6c27ff" d="M1239 476h5v5h-5z"/><path fill="#7524ff" d="M1244 476h5v5h-5z"/><path fill="#8121ff" d="M1249 476h5v5h-5z"/><path fill="#8d1eff" d="M1254 476h5v5h-5z"/><path fill="#991eff" d="M1259 476h5v5h-5z"/><path fill="#a81bff" d="M1264 476h5v5h-5z"/><path fill="#b418ff" d="M1269 476h5v5h-5z"/><path fill="#c015ff" d="M1274 476h5v5h-5z"/><path fill="#cf12ff" d="M1279 476h5v5h-5z"/><path fill="#db0fff" d="M1284 476h5v5h-5z"/><path fill="#ea0cff" d="M1289 476h5v5h-5z"/><path fill="#f909ff" d="M1294 476h5v5h-5z"/><path fill="#ff06f9" d="M1299 476h5v5h-5z"/><path fill="#ff03ea" d="M1304 476h5v5h-5z"/><path fill="#ff00de" d="M1309 476h5v5h-5zM1309 481h5v5h-5z"/><path fill="#ff00d2" d="M1314 476h5v5h-5z"/><path fill="#ff00c9" d="M1319 476h5v5h-5z"/><path fill="#ff00c0" d="M1324 476h5v5h-5z"/><path fill="#0039ff" d="M1179 481h5v5h-5z"/><path fill="#0036ff" d="M1184 481h5v5h-5z"/><path fill="#0936ff" d="M1189 481h5v5h-5z"/><path fill="#1233ff" d="M1194 481h5v5h-5z"/><path fill="#1b30ff" d="M1199 481h5v5h-5z"/><path fill="#2430ff" d="M1204 481h5v5h-5z"/><path fill="#2d2dff" d="M1209 481h5v5h-5z"/><path fill="#392aff" d="M1214 481h5v5h-5z"/><path fill="#4227ff" d="M1219 481h5v5h-5z"/><path fill="#4e27ff" d="M1224 481h5v5h-5z"/><path fill="#5724ff" d="M1229 481h5v5h-5z"/><path fill="#6321ff" d="M1234 481h5v5h-5z"/><path fill="#6c1eff" d="M1239 481h5v5h-5z"/><path fill="#781eff" d="M1244 481h5v5h-5z"/><path fill="#841bff" d="M1249 481h5v5h-5z"/><path fill="#9018ff" d="M1254 481h5v5h-5z"/><path fill="#9c15ff" d="M1259 481h5v5h-5z"/><path fill="#a812ff" d="M1264 481h5v5h-5z"/><path fill="#b40fff" d="M1269 481h5v5h-5z"/><path fill="#c00cff" d="M1274 481h5v5h-5z"/><path fill="#cf0cff" d="M1279 481h5v5h-5z"/><path fill="#db09ff" d="M1284 481h5v5h-5z"/><path fill="#ea06ff" d="M1289 481h5v5h-5z"/><path fill="#f603ff" d="M1294 481h5v5h-5z"/><path fill="#ff00f9" d="M1299 481h5v5h-5zM1299 486h5v5h-5z"/><path fill="#ff00ed" d="M1304 481h5v5h-5zM1304 486h5v5h-5z"/><path fill="#ff00d5" d="M1314 481h5v5h-5z"/><path fill="#0033ff" d="M1179 486h5v5h-5z"/><path fill="#0330ff" d="M1184 486h5v5h-5z"/><path fill="#0c2dff" d="M1189 486h5v5h-5z"/><path fill="#152dff" d="M1194 486h5v5h-5z"/><path fill="#1e2aff" d="M1199 486h5v5h-5z"/><path fill="#2727ff" d="M1204 486h5v5h-5z"/><path fill="#3027ff" d="M1209 486h5v5h-5z"/><path fill="#3c24ff" d="M1214 486h5v5h-5z"/><path fill="#4521ff" d="M1219 486h5v5h-5z"/><path fill="#4e1eff" d="M1224 486h5v5h-5z"/><path fill="#5a1eff" d="M1229 486h5v5h-5z"/><path fill="#631bff" d="M1234 486h5v5h-5z"/><path fill="#6f18ff" d="M1239 486h5v5h-5z"/><path fill="#7b15ff" d="M1244 486h5v5h-5z"/><path fill="#8415ff" d="M1249 486h5v5h-5z"/><path fill="#9012ff" d="M1254 486h5v5h-5z"/><path fill="#9c0fff" d="M1259 486h5v5h-5z"/><path fill="#a80cff" d="M1264 486h5v5h-5z"/><path fill="#b409ff" d="M1269 486h5v5h-5z"/><path fill="#c006ff" d="M1274 486h5v5h-5z"/><path fill="#cf03ff" d="M1279 486h5v5h-5z"/><path fill="#db00ff" d="M1284 486h5v5h-5zM1284 491h5v5h-5z"/><path fill="#e700ff" d="M1289 486h5v5h-5zM1289 491h5v5h-5z"/><path fill="#f600ff" d="M1294 486h5v5h-5z"/><path fill="#002dff" d="M1174 491h5v5h-5zM1179 491h5v5h-5z"/><path fill="#062aff" d="M1184 491h5v5h-5z"/><path fill="#0f27ff" d="M1189 491h5v5h-5z"/><path fill="#1827ff" d="M1194 491h5v5h-5z"/><path fill="#2124ff" d="M1199 491h5v5h-5z"/><path fill="#2a21ff" d="M1204 491h5v5h-5z"/><path fill="#3321ff" d="M1209 491h5v5h-5z"/><path fill="#3c1eff" d="M1214 491h5v5h-5z"/><path fill="#481bff" d="M1219 491h5v5h-5z"/><path fill="#5118ff" d="M1224 491h5v5h-5z"/><path fill="#5a18ff" d="M1229 491h5v5h-5z"/><path fill="#6615ff" d="M1234 491h5v5h-5z"/><path fill="#6f12ff" d="M1239 491h5v5h-5z"/><path fill="#7b0fff" d="M1244 491h5v5h-5z"/><path fill="#870cff" d="M1249 491h5v5h-5z"/><path fill="#9309ff" d="M1254 491h5v5h-5z"/><path fill="#9c09ff" d="M1259 491h5v5h-5z"/><path fill="#a806ff" d="M1264 491h5v5h-5z"/><path fill="#b403ff" d="M1269 491h5v5h-5z"/><path fill="#c000ff" d="M1274 491h5v5h-5z"/><path fill="#cf00ff" d="M1279 491h5v5h-5zM1279 496h5v5h-5z"/><path fill="#0027ff" d="M1174 496h5v5h-5zM1179 496h5v5h-5z"/><path fill="#0924ff" d="M1184 496h5v5h-5z"/><path fill="#1221ff" d="M1189 496h5v5h-5z"/><path fill="#1b21ff" d="M1194 496h5v5h-5z"/><path fill="#241eff" d="M1199 496h5v5h-5z"/><path fill="#2d1bff" d="M1204 496h5v5h-5z"/><path fill="#3618ff" d="M1209 496h5v5h-5z"/><path fill="#3f18ff" d="M1214 496h5v5h-5z"/><path fill="#4815ff" d="M1219 496h5v5h-5z"/><path fill="#5412ff" d="M1224 496h5v5h-5z"/><path fill="#5d0fff" d="M1229 496h5v5h-5z"/><path fill="#660fff" d="M1234 496h5v5h-5z"/><path fill="#720cff" d="M1239 496h5v5h-5z"/><path fill="#7e09ff" d="M1244 496h5v5h-5z"/><path fill="#8706ff" d="M1249 496h5v5h-5z"/><path fill="#9303ff" d="M1254 496h5v5h-5z"/><path fill="#9f00ff" d="M1259 496h5v5h-5zM1259 501h5v5h-5z"/><path fill="#ab00ff" d="M1264 496h5v5h-5zM1264 501h5v5h-5z"/><path fill="#b400ff" d="M1269 496h5v5h-5z"/><path fill="#c300ff" d="M1274 496h5v5h-5z"/><path fill="#0021ff" d="M1174 501h5v5h-5z"/><path fill="#0321ff" d="M1179 501h5v5h-5z"/><path fill="#0c1eff" d="M1184 501h5v5h-5z"/><path fill="#151bff" d="M1189 501h5v5h-5z"/><path fill="#1e1bff" d="M1194 501h5v5h-5z"/><path fill="#2718ff" d="M1199 501h5v5h-5z"/><path fill="#3015ff" d="M1204 501h5v5h-5z"/><path fill="#3912ff" d="M1209 501h5v5h-5z"/><path fill="#4212ff" d="M1214 501h5v5h-5z"/><path fill="#4b0fff" d="M1219 501h5v5h-5z"/><path fill="#540cff" d="M1224 501h5v5h-5z"/><path fill="#6009ff" d="M1229 501h5v5h-5z"/><path fill="#6909ff" d="M1234 501h5v5h-5z"/><path fill="#7206ff" d="M1239 501h5v5h-5z"/><path fill="#7e03ff" d="M1244 501h5v5h-5z"/><path fill="#8a00ff" d="M1249 501h5v5h-5zM1249 506h5v5h-5z"/><path fill="#9300ff" d="M1254 501h5v5h-5z"/><path fill="#001eff" d="M1169 506h5v5h-5z"/><path fill="#001bff" d="M1174 506h5v5h-5z"/><path fill="#061bff" d="M1179 506h5v5h-5z"/><path fill="#0f18ff" d="M1184 506h5v5h-5z"/><path fill="#1815ff" d="M1189 506h5v5h-5z"/><path fill="#2115ff" d="M1194 506h5v5h-5z"/><path fill="#2712ff" d="M1199 506h5v5h-5z"/><path fill="#300fff" d="M1204 506h5v5h-5z"/><path fill="#390cff" d="M1209 506h5v5h-5z"/><path fill="#450cff" d="M1214 506h5v5h-5z"/><path fill="#4e09ff" d="M1219 506h5v5h-5z"/><path fill="#5706ff" d="M1224 506h5v5h-5z"/><path fill="#6003ff" d="M1229 506h5v5h-5z"/><path fill="#6c03ff" d="M1234 506h5v5h-5z"/><path fill="#7500ff" d="M1239 506h5v5h-5zM1239 511h5v5h-5z"/><path fill="#7e00ff" d="M1244 506h5v5h-5z"/><path fill="#9600ff" d="M1254 506h5v5h-5z"/><path fill="#0018ff" d="M1169 511h5v5h-5zM1174 511h5v5h-5z"/><path fill="#0915ff" d="M1179 511h5v5h-5z"/><path fill="#1212ff" d="M1184 511h5v5h-5z"/><path fill="#1b0fff" d="M1189 511h5v5h-5z"/><path fill="#210fff" d="M1194 511h5v5h-5z"/><path fill="#2a0cff" d="M1199 511h5v5h-5z"/><path fill="#3309ff" d="M1204 511h5v5h-5z"/><path fill="#3c09ff" d="M1209 511h5v5h-5z"/><path fill="#4506ff" d="M1214 511h5v5h-5z"/><path fill="#4e03ff" d="M1219 511h5v5h-5z"/><path fill="#5a00ff" d="M1224 511h5v5h-5zM1224 516h5v5h-5z"/><path fill="#6300ff" d="M1229 511h5v5h-5zM1229 516h5v5h-5z"/><path fill="#6c00ff" d="M1234 511h5v5h-5z"/><path fill="#8100ff" d="M1244 511h5v5h-5z"/><path fill="#0015ff" d="M1164 516h5v5h-5z"/><path fill="#0012ff" d="M1169 516h5v5h-5z"/><path fill="#0312ff" d="M1174 516h5v5h-5z"/><path fill="#0c0fff" d="M1179 516h5v5h-5z"/><path fill="#150cff" d="M1184 516h5v5h-5z"/><path fill="#1b0cff" d="M1189 516h5v5h-5z"/><path fill="#2409ff" d="M1194 516h5v5h-5z"/><path fill="#2d06ff" d="M1199 516h5v5h-5z"/><path fill="#3603ff" d="M1204 516h5v5h-5z"/><path fill="#3f03ff" d="M1209 516h5v5h-5z"/><path fill="#4800ff" d="M1214 516h5v5h-5z"/><path fill="#5100ff" d="M1219 516h5v5h-5z"/><path fill="#000fff" d="M1164 521h5v5h-5zM1169 521h5v5h-5z"/><path fill="#060cff" d="M1174 521h5v5h-5z"/><path fill="#0f09ff" d="M1179 521h5v5h-5z"/><path fill="#1509ff" d="M1184 521h5v5h-5z"/><path fill="#1e06ff" d="M1189 521h5v5h-5z"/><path fill="#2703ff" d="M1194 521h5v5h-5z"/><path fill="#3000ff" d="M1199 521h5v5h-5z"/><path fill="#3900ff" d="M1204 521h5v5h-5zM1204 526h5v5h-5z"/><path fill="#4200ff" d="M1209 521h5v5h-5zM1209 526h5v5h-5z"/><path fill="#4b00ff" d="M1214 521h5v5h-5z"/><path fill="#5400ff" d="M1219 521h5v5h-5z"/><path fill="#000cff" d="M1164 526h5v5h-5z"/><path fill="#0009ff" d="M1169 526h5v5h-5zM1159 531h5v5h-5z"/><path fill="#0906ff" d="M1174 526h5v5h-5z"/><path fill="#1206ff" d="M1179 526h5v5h-5z"/><path fill="#1803ff" d="M1184 526h5v5h-5z"/><path fill="#2100ff" d="M1189 526h5v5h-5z"/><path fill="#2a00ff" d="M1194 526h5v5h-5z"/><path fill="#3300ff" d="M1199 526h5v5h-5z"/><path fill="#0006ff" d="M1164 531h5v5h-5z"/><path fill="#0303ff" d="M1169 531h5v5h-5z"/><path fill="#0c03ff" d="M1174 531h5v5h-5z"/><path fill="#1500ff" d="M1179 531h5v5h-5zM1179 536h5v5h-5z"/><path fill="#1b00ff" d="M1184 531h5v5h-5z"/><path fill="#2400ff" d="M1189 531h5v5h-5z"/><path fill="#2d00ff" d="M1194 531h5v5h-5z"/><path fill="#0003ff" d="M1159 536h5v5h-5z"/><path fill="#0000ff" d="M1164 536h5v5h-5zM1159 541h5v5h-5zM1159 546h5v5h-5z"/><path fill="#0600ff" d="M1169 536h5v5h-5z"/><path fill="#0f00ff" d="M1174 536h5v5h-5z"/><path fill="#1e00ff" d="M1184 536h5v5h-5z"/><path fill="#0300ff" d="M1164 541h5v5h-5z"/><path fill="#0900ff" d="M1169 541h5v5h-5z"/></g></g>
<rect x="1503.5" y="79" width="196" height="154" fill="#1c1c1c"/>
<rect x="1506" y="82" width="191" height="148" fill="url(#insTop)"/>
<path d="M1506 97 L1697 214.5 L1697 230 L1506 230 Z" fill="url(#insBot)"/>
<rect x="1506.5" y="82.5" width="190" height="147" fill="none" stroke="#8c8c8c" stroke-width="1.5"/>
<rect x="1593.5" y="148" width="15" height="14" fill="none" stroke="#ffffff" stroke-width="1.6"/>
<circle cx="1622" cy="200.2" r="4.5" fill="#ffff00" stroke="#000" stroke-width="1.2"/>
<rect x="1353.1" y="350.8" width="14" height="14" fill="none" stroke="#ffffff" stroke-width="1.6"/>
<rect x="1337.4" y="355.3" width="14" height="14" fill="none" stroke="#ffffff" stroke-width="1.6"/>
<rect x="1236.3" y="408.4" width="14" height="14" fill="none" stroke="#ffffff" stroke-width="1.6"/>
<rect x="1306.9" y="313.4" width="14" height="14" fill="none" stroke="#ffffff" stroke-width="1.6"/>
<rect x="1250.6" y="417.2" width="14" height="14" fill="none" stroke="#ffffff" stroke-width="1.6"/>
<rect x="1246.4" y="352.4" width="14" height="14" fill="none" stroke="#ffffff" stroke-width="1.6"/>
<rect x="1441.6" y="325.8" width="14" height="14" fill="none" stroke="#ffffff" stroke-width="1.6"/>
<rect x="1211.5" y="453.3" width="14" height="14" fill="none" stroke="#ffffff" stroke-width="1.6"/>
<rect x="1401.9" y="380.5" width="14" height="14" fill="none" stroke="#ffffff" stroke-width="1.6"/>
<rect x="1267.5" y="435.4" width="14" height="14" fill="none" stroke="#ffffff" stroke-width="1.6"/>
<rect x="1334.9" y="273.9" width="14" height="14" fill="none" stroke="#ffffff" stroke-width="1.6"/>
<rect x="1410.4" y="306.4" width="14" height="14" fill="none" stroke="#ffffff" stroke-width="1.6"/>
<rect x="1192.0" y="482.9" width="14" height="14" fill="none" stroke="#ffffff" stroke-width="1.6"/>
<rect x="1280.0" y="275.4" width="14" height="14" fill="none" stroke="#ffffff" stroke-width="1.6"/>
<rect x="1459.5" y="377.7" width="14" height="14" fill="none" stroke="#ffffff" stroke-width="1.6"/>
<rect x="1389.4" y="285.4" width="14" height="14" fill="none" stroke="#ffffff" stroke-width="1.6"/>
<rect x="1333.3" y="419.8" width="14" height="14" fill="none" stroke="#ffffff" stroke-width="1.6"/>
<rect x="1204.4" y="407.6" width="14" height="14" fill="none" stroke="#ffffff" stroke-width="1.6"/>
<rect x="1539.4" y="371.0" width="14" height="14" fill="none" stroke="#ffffff" stroke-width="1.6"/>
<rect x="1276.0" y="209.5" width="14" height="14" fill="none" stroke="#ffffff" stroke-width="1.6"/>
<rect x="1159.5" y="531.9" width="14" height="14" fill="none" stroke="#ffffff" stroke-width="1.6"/>
<rect x="1216.8" y="371.8" width="14" height="14" fill="none" stroke="#ffffff" stroke-width="1.6"/>
<rect x="1291.4" y="475.8" width="14" height="14" fill="none" stroke="#ffffff" stroke-width="1.6"/>
<rect x="1368.4" y="266.9" width="14" height="14" fill="none" stroke="#ffffff" stroke-width="1.6"/>
<rect x="1286.2" y="371" width="13.6" height="13.4" fill="none" stroke="#000000" stroke-width="2.6"/>
<circle cx="1300.0" cy="366.1" r="4.1" fill="#ffffff" stroke="#000" stroke-width="1.2"/>
<circle cx="1285.9" cy="380.8" r="4.1" fill="#e0e0e0" stroke="#000" stroke-width="1.2"/>
<circle cx="1279.2" cy="387.8" r="4.1" fill="#c8c8c8" stroke="#000" stroke-width="1.2"/>
<circle cx="1273.2" cy="392.7" r="4.1" fill="#b0b0b0" stroke="#000" stroke-width="1.2"/>
<circle cx="1269.0" cy="397.5" r="4.1" fill="#9c9c9c" stroke="#000" stroke-width="1.2"/>
<circle cx="1260.4" cy="415.9" r="4.1" fill="#000000" stroke="#000" stroke-width="1.2"/>
<circle cx="1329.0" cy="374.9" r="4.1" fill="#6a5244" stroke="#000" stroke-width="1.2"/>
<circle cx="1311.0" cy="380.8" r="4.1" fill="#c09080" stroke="#000" stroke-width="1.2"/>
<circle cx="1225.5" cy="433.7" r="4.1" fill="#6a80a0" stroke="#000" stroke-width="1.2"/>
<circle cx="1292.9" cy="343.0" r="4.1" fill="#5a6a48" stroke="#000" stroke-width="1.2"/>
<circle cx="1237.9" cy="434.8" r="4.1" fill="#8a88b0" stroke="#000" stroke-width="1.2"/>
<circle cx="1241.9" cy="382.9" r="4.1" fill="#66bba8" stroke="#000" stroke-width="1.2"/>
<circle cx="1421.9" cy="332.8" r="4.1" fill="#d08040" stroke="#000" stroke-width="1.2"/>
<circle cx="1201.9" cy="469.8" r="4.1" fill="#5060a0" stroke="#000" stroke-width="1.2"/>
<circle cx="1361.5" cy="398.9" r="4.1" fill="#c06070" stroke="#000" stroke-width="1.2"/>
<circle cx="1237.0" cy="464.9" r="4.1" fill="#604870" stroke="#000" stroke-width="1.2"/>
<circle cx="1331.1" cy="297.8" r="4.1" fill="#a0b050" stroke="#000" stroke-width="1.2"/>
<circle cx="1399.0" cy="315.9" r="4.1" fill="#e0b040" stroke="#000" stroke-width="1.2"/>
<circle cx="1182.9" cy="496.7" r="4.1" fill="#3a40a0" stroke="#000" stroke-width="1.2"/>
<circle cx="1277.1" cy="308.9" r="4.1" fill="#4a904a" stroke="#000" stroke-width="1.2"/>
<circle cx="1428.8" cy="385.7" r="4.1" fill="#b03848" stroke="#000" stroke-width="1.2"/>
<circle cx="1385.0" cy="299.0" r="4.1" fill="#e8d030" stroke="#000" stroke-width="1.2"/>
<circle cx="1295.8" cy="438.0" r="4.1" fill="#b85a90" stroke="#000" stroke-width="1.2"/>
<circle cx="1205.8" cy="432.5" r="4.1" fill="#108a98" stroke="#000" stroke-width="1.2"/>
<circle cx="1506.7" cy="361.7" r="4.1" fill="#ff0000" stroke="#000" stroke-width="1.2"/>
<circle cx="1303.0" cy="235.9" r="4.1" fill="#00ff00" stroke="#000" stroke-width="1.2"/>
<circle cx="1169.0" cy="503.8" r="4.1" fill="#0000ff" stroke="#000" stroke-width="1.2"/>
<circle cx="1237.9" cy="367.8" r="4.1" fill="#00ffff" stroke="#000" stroke-width="1.2"/>
<circle cx="1297.9" cy="448.8" r="4.1" fill="#ff00ff" stroke="#000" stroke-width="1.2"/>
<circle cx="1379.9" cy="282.4" r="4.1" fill="#ffff00" stroke="#000" stroke-width="1.2"/>
<rect x="1050" y="75" width="653.3" height="500.20000000000005" fill="none" stroke="#9a9a9a" stroke-width="1.5"/>
<line x1="1050.0" y1="575.2" x2="1050.0" y2="581.2" stroke="#d8d8d8" stroke-width="1.5"/>
<text x="1050.0" y="597.0" font-size="15.0" fill="#d6d6d6" text-anchor="middle">0</text>
<line x1="1044" y1="575.2" x2="1050" y2="575.2" stroke="#d8d8d8" stroke-width="1.5"/>
<text x="1043.5" y="580.6" font-size="15.0" fill="#d6d6d6" text-anchor="end">0</text>
<line x1="1127.7" y1="575.2" x2="1127.7" y2="581.2" stroke="#d8d8d8" stroke-width="1.5"/>
<text x="1127.7" y="597.0" font-size="15.0" fill="#d6d6d6" text-anchor="middle">0,1</text>
<line x1="1044" y1="515.8" x2="1050" y2="515.8" stroke="#d8d8d8" stroke-width="1.5"/>
<text x="1043.5" y="521.1" font-size="15.0" fill="#d6d6d6" text-anchor="end">0,1</text>
<line x1="1205.4" y1="575.2" x2="1205.4" y2="581.2" stroke="#d8d8d8" stroke-width="1.5"/>
<text x="1205.4" y="597.0" font-size="15.0" fill="#d6d6d6" text-anchor="middle">0,2</text>
<line x1="1044" y1="456.3" x2="1050" y2="456.3" stroke="#d8d8d8" stroke-width="1.5"/>
<text x="1043.5" y="461.7" font-size="15.0" fill="#d6d6d6" text-anchor="end">0,2</text>
<line x1="1283.1" y1="575.2" x2="1283.1" y2="581.2" stroke="#d8d8d8" stroke-width="1.5"/>
<text x="1283.1" y="597.0" font-size="15.0" fill="#d6d6d6" text-anchor="middle">0,3</text>
<line x1="1044" y1="396.9" x2="1050" y2="396.9" stroke="#d8d8d8" stroke-width="1.5"/>
<text x="1043.5" y="402.2" font-size="15.0" fill="#d6d6d6" text-anchor="end">0,3</text>
<line x1="1360.8" y1="575.2" x2="1360.8" y2="581.2" stroke="#d8d8d8" stroke-width="1.5"/>
<text x="1360.8" y="597.0" font-size="15.0" fill="#d6d6d6" text-anchor="middle">0,4</text>
<line x1="1044" y1="337.4" x2="1050" y2="337.4" stroke="#d8d8d8" stroke-width="1.5"/>
<text x="1043.5" y="342.8" font-size="15.0" fill="#d6d6d6" text-anchor="end">0,4</text>
<line x1="1438.5" y1="575.2" x2="1438.5" y2="581.2" stroke="#d8d8d8" stroke-width="1.5"/>
<text x="1438.5" y="597.0" font-size="15.0" fill="#d6d6d6" text-anchor="middle">0,5</text>
<line x1="1044" y1="278.0" x2="1050" y2="278.0" stroke="#d8d8d8" stroke-width="1.5"/>
<text x="1043.5" y="283.4" font-size="15.0" fill="#d6d6d6" text-anchor="end">0,5</text>
<line x1="1516.2" y1="575.2" x2="1516.2" y2="581.2" stroke="#d8d8d8" stroke-width="1.5"/>
<text x="1516.2" y="597.0" font-size="15.0" fill="#d6d6d6" text-anchor="middle">0,6</text>
<line x1="1044" y1="218.5" x2="1050" y2="218.5" stroke="#d8d8d8" stroke-width="1.5"/>
<text x="1043.5" y="223.9" font-size="15.0" fill="#d6d6d6" text-anchor="end">0,6</text>
<line x1="1593.9" y1="575.2" x2="1593.9" y2="581.2" stroke="#d8d8d8" stroke-width="1.5"/>
<text x="1593.9" y="597.0" font-size="15.0" fill="#d6d6d6" text-anchor="middle">0,7</text>
<line x1="1044" y1="159.1" x2="1050" y2="159.1" stroke="#d8d8d8" stroke-width="1.5"/>
<text x="1043.5" y="164.5" font-size="15.0" fill="#d6d6d6" text-anchor="end">0,7</text>
<line x1="1671.6" y1="575.2" x2="1671.6" y2="581.2" stroke="#d8d8d8" stroke-width="1.5"/>
<text x="1671.6" y="597.0" font-size="15.0" fill="#d6d6d6" text-anchor="middle">0,8</text>
<line x1="1044" y1="99.6" x2="1050" y2="99.6" stroke="#d8d8d8" stroke-width="1.5"/>
<text x="1043.5" y="105.0" font-size="15.0" fill="#d6d6d6" text-anchor="end">0,8</text>
<rect x="1419" y="534.7" width="281" height="28.4" fill="#3a3a3a"/>
<text x="1451.0" y="556.7" font-size="20.5" fill="#f2f2f2" textLength="218.0" lengthAdjust="spacingAndGlyphs" stroke="#f2f2f2" stroke-width="0.45">RGB Triplet: 255, 255, 0</text>
<rect x="326" y="627" width="1384" height="14.5" fill="#2e2e2e"/>
<rect x="326" y="641.5" width="1384" height="14.5" fill="#1a1a1a"/>
<rect x="326" y="627" width="9" height="29" fill="#000"/>
<rect x="326" y="656" width="1384" height="26.5" fill="#3c3c3c"/>
<rect x="326" y="682.5" width="1384" height="26.5" fill="#7f7f7f"/>
<rect x="326" y="709" width="1384" height="26.5" fill="#3c3c3c"/>
<rect x="326" y="735.5" width="1384" height="26.5" fill="#7f7f7f"/>
<rect x="326" y="762" width="1384" height="26.5" fill="#3c3c3c"/>
<rect x="326" y="788.5" width="1384" height="26.5" fill="#7f7f7f"/>
<rect x="326" y="815" width="1384" height="26.5" fill="#3c3c3c"/>
<rect x="326" y="656" width="9" height="185.5" fill="#262626"/>
<text transform="translate(404.9,646.5) scale(0.6,1)" font-size="15" fill="#f0f0f0" stroke="#f0f0f0" stroke-width="0.3">White</text>
<text transform="translate(440.5,646.5) scale(0.6,1)" font-size="15" fill="#f0f0f0" stroke="#f0f0f0" stroke-width="0.3">Gray 80</text>
<text transform="translate(476.4,646.5) scale(0.6,1)" font-size="15" fill="#f0f0f0" stroke="#f0f0f0" stroke-width="0.3">Gray 65</text>
<text transform="translate(513.1,646.5) scale(0.6,1)" font-size="15" fill="#f0f0f0" stroke="#f0f0f0" stroke-width="0.3">Gray 50</text>
<text transform="translate(549.9,646.5) scale(0.6,1)" font-size="15" fill="#f0f0f0" stroke="#f0f0f0" stroke-width="0.3">Gray 35</text>
<text transform="translate(586.2,646.5) scale(0.6,1)" font-size="15" fill="#f0f0f0" stroke="#f0f0f0" stroke-width="0.3">Black</text>
<text transform="translate(612.8,646.5) scale(0.6,1)" font-size="15" fill="#f0f0f0" stroke="#f0f0f0" stroke-width="0.3">Dark Skin</text>
<text transform="translate(656.1,646.5) scale(0.6,1)" font-size="15" fill="#f0f0f0" stroke="#f0f0f0" stroke-width="0.3">Light Skin</text>
<text transform="translate(699.7,646.5) scale(0.6,1)" font-size="15" fill="#f0f0f0" stroke="#f0f0f0" stroke-width="0.3">Blue Sky</text>
<text transform="translate(739.4,646.5) scale(0.6,1)" font-size="15" fill="#f0f0f0" stroke="#f0f0f0" stroke-width="0.3">Foliage</text>
<text transform="translate(773.2,646.5) scale(0.6,1)" font-size="15" fill="#f0f0f0" stroke="#f0f0f0" stroke-width="0.3">Blue Flower</text>
<text transform="translate(826.3,646.5) scale(0.6,1)" font-size="15" fill="#f0f0f0" stroke="#f0f0f0" stroke-width="0.3">Bluish Green</text>
<text transform="translate(883.5,646.5) scale(0.6,1)" font-size="15" fill="#f0f0f0" stroke="#f0f0f0" stroke-width="0.3">Orange</text>
<text transform="translate(918.2,646.5) scale(0.6,1)" font-size="15" fill="#f0f0f0" stroke="#f0f0f0" stroke-width="0.3">Purplish Blue</text>
<text transform="translate(977.4,646.5) scale(0.6,1)" font-size="15" fill="#f0f0f0" stroke="#f0f0f0" stroke-width="0.3">Moderate Red</text>
<text transform="translate(1041.4,646.5) scale(0.6,1)" font-size="15" fill="#f0f0f0" stroke="#f0f0f0" stroke-width="0.3">Purple</text>
<text transform="translate(1073.2,646.5) scale(0.6,1)" font-size="15" fill="#f0f0f0" stroke="#f0f0f0" stroke-width="0.3">Yellow Green</text>
<text transform="translate(1131.6,646.5) scale(0.6,1)" font-size="15" fill="#f0f0f0" stroke="#f0f0f0" stroke-width="0.3">Orange Yellow</text>
<text transform="translate(1195.7,646.5) scale(0.6,1)" font-size="15" fill="#f0f0f0" stroke="#f0f0f0" stroke-width="0.3">Blue</text>
<text transform="translate(1225.1,646.5) scale(0.6,1)" font-size="15" fill="#f0f0f0" stroke="#f0f0f0" stroke-width="0.3">Green</text>
<text transform="translate(1254.9,646.5) scale(0.6,1)" font-size="15" fill="#f0f0f0" stroke="#f0f0f0" stroke-width="0.3">Red</text>
<text transform="translate(1285.5,646.5) scale(0.6,1)" font-size="15" fill="#f0f0f0" stroke="#f0f0f0" stroke-width="0.3">Yellow</text>
<text transform="translate(1320.2,646.5) scale(0.6,1)" font-size="15" fill="#f0f0f0" stroke="#f0f0f0" stroke-width="0.3">Magenta</text>
<text transform="translate(1362.3,646.5) scale(0.6,1)" font-size="15" fill="#f0f0f0" stroke="#f0f0f0" stroke-width="0.3">Cyan</text>
<text transform="translate(1391.7,646.5) scale(0.6,1)" font-size="15" fill="#f0f0f0" stroke="#f0f0f0" stroke-width="0.3">100% Red</text>
<text transform="translate(1437.4,646.5) scale(0.6,1)" font-size="15" fill="#f0f0f0" stroke="#f0f0f0" stroke-width="0.3">100% Green</text>
<text transform="translate(1492.6,646.5) scale(0.6,1)" font-size="15" fill="#f0f0f0" stroke="#f0f0f0" stroke-width="0.3">100% Blue</text>
<text transform="translate(1540.8,646.5) scale(0.6,1)" font-size="15" fill="#f0f0f0" stroke="#f0f0f0" stroke-width="0.3">100% Cyan</text>
<text transform="translate(1590.6,646.5) scale(0.6,1)" font-size="15" fill="#f0f0f0" stroke="#f0f0f0" stroke-width="0.3">100% Magenta</text>
<text transform="translate(1657.1,646.5) scale(0.6,1)" font-size="15" fill="#f0f0f0" stroke="#f0f0f0" stroke-width="0.3">100% Yellow</text>
<text transform="translate(337.0,676.0) scale(0.56,1)" font-size="16.8" fill="#f0f0f0" stroke="#f0f0f0" stroke-width="0.3">x: CIE31</text>
<text transform="translate(404.9,676.0) scale(0.56,1)" font-size="16.8" fill="#f0f0f0" stroke="#f0f0f0" stroke-width="0.3">0,32</text>
<text transform="translate(440.5,676.0) scale(0.56,1)" font-size="16.8" fill="#f0f0f0" stroke="#f0f0f0" stroke-width="0.3">0,30</text>
<text transform="translate(476.4,676.0) scale(0.56,1)" font-size="16.8" fill="#f0f0f0" stroke="#f0f0f0" stroke-width="0.3">0,29</text>
<text transform="translate(513.1,676.0) scale(0.56,1)" font-size="16.8" fill="#f0f0f0" stroke="#f0f0f0" stroke-width="0.3">0,29</text>
<text transform="translate(549.9,676.0) scale(0.56,1)" font-size="16.8" fill="#f0f0f0" stroke="#f0f0f0" stroke-width="0.3">0,28</text>
<text transform="translate(586.2,676.0) scale(0.56,1)" font-size="16.8" fill="#f0f0f0" stroke="#f0f0f0" stroke-width="0.3">0,27</text>
<text transform="translate(612.8,676.0) scale(0.56,1)" font-size="16.8" fill="#f0f0f0" stroke="#f0f0f0" stroke-width="0.3">0,36</text>
<text transform="translate(656.1,676.0) scale(0.56,1)" font-size="16.8" fill="#f0f0f0" stroke="#f0f0f0" stroke-width="0.3">0,34</text>
<text transform="translate(699.7,676.0) scale(0.56,1)" font-size="16.8" fill="#f0f0f0" stroke="#f0f0f0" stroke-width="0.3">0,23</text>
<text transform="translate(739.4,676.0) scale(0.56,1)" font-size="16.8" fill="#f0f0f0" stroke="#f0f0f0" stroke-width="0.3">0,31</text>
<text transform="translate(773.2,676.0) scale(0.56,1)" font-size="16.8" fill="#f0f0f0" stroke="#f0f0f0" stroke-width="0.3">0,24</text>
<text transform="translate(826.3,676.0) scale(0.56,1)" font-size="16.8" fill="#f0f0f0" stroke="#f0f0f0" stroke-width="0.3">0,25</text>
<text transform="translate(883.5,676.0) scale(0.56,1)" font-size="16.8" fill="#f0f0f0" stroke="#f0f0f0" stroke-width="0.3">0,48</text>
<text transform="translate(918.2,676.0) scale(0.56,1)" font-size="16.8" fill="#f0f0f0" stroke="#f0f0f0" stroke-width="0.3">0,20</text>
<text transform="translate(977.4,676.0) scale(0.56,1)" font-size="16.8" fill="#f0f0f0" stroke="#f0f0f0" stroke-width="0.3">0,40</text>
<text transform="translate(1041.4,676.0) scale(0.56,1)" font-size="16.8" fill="#f0f0f0" stroke="#f0f0f0" stroke-width="0.3">0,24</text>
<text transform="translate(1073.2,676.0) scale(0.56,1)" font-size="16.8" fill="#f0f0f0" stroke="#f0f0f0" stroke-width="0.3">0,36</text>
<text transform="translate(1131.6,676.0) scale(0.56,1)" font-size="16.8" fill="#f0f0f0" stroke="#f0f0f0" stroke-width="0.3">0,45</text>
<text transform="translate(1195.7,676.0) scale(0.56,1)" font-size="16.8" fill="#f0f0f0" stroke="#f0f0f0" stroke-width="0.3">0,17</text>
<text transform="translate(1225.1,676.0) scale(0.56,1)" font-size="16.8" fill="#f0f0f0" stroke="#f0f0f0" stroke-width="0.3">0,29</text>
<text transform="translate(1254.9,676.0) scale(0.56,1)" font-size="16.8" fill="#f0f0f0" stroke="#f0f0f0" stroke-width="0.3">0,49</text>
<text transform="translate(1285.5,676.0) scale(0.56,1)" font-size="16.8" fill="#f0f0f0" stroke="#f0f0f0" stroke-width="0.3">0,43</text>
<text transform="translate(1320.2,676.0) scale(0.56,1)" font-size="16.8" fill="#f0f0f0" stroke="#f0f0f0" stroke-width="0.3">0,32</text>
<text transform="translate(1362.3,676.0) scale(0.56,1)" font-size="16.8" fill="#f0f0f0" stroke="#f0f0f0" stroke-width="0.3">0,20</text>
<text transform="translate(1391.7,676.0) scale(0.56,1)" font-size="16.8" fill="#f0f0f0" stroke="#f0f0f0" stroke-width="0.3">0,59</text>
<text transform="translate(1437.4,676.0) scale(0.56,1)" font-size="16.8" fill="#f0f0f0" stroke="#f0f0f0" stroke-width="0.3">0,33</text>
<text transform="translate(1492.6,676.0) scale(0.56,1)" font-size="16.8" fill="#f0f0f0" stroke="#f0f0f0" stroke-width="0.3">0,15</text>
<text transform="translate(1540.8,676.0) scale(0.56,1)" font-size="16.8" fill="#f0f0f0" stroke="#f0f0f0" stroke-width="0.3">0,24</text>
<text transform="translate(1590.6,676.0) scale(0.56,1)" font-size="16.8" fill="#f0f0f0" stroke="#f0f0f0" stroke-width="0.3">0,32</text>
<text transform="translate(1657.1,676.0) scale(0.56,1)" font-size="16.8" fill="#f0f0f0" stroke="#f0f0f0" stroke-width="0.3">0,42</text>
<text transform="translate(337.0,702.5) scale(0.56,1)" font-size="16.8" fill="#f0f0f0" stroke="#f0f0f0" stroke-width="0.3">y: CIE31</text>
<text transform="translate(404.9,702.5) scale(0.56,1)" font-size="16.8" fill="#f0f0f0" stroke="#f0f0f0" stroke-width="0.3">0,35</text>
<text transform="translate(440.5,702.5) scale(0.56,1)" font-size="16.8" fill="#f0f0f0" stroke="#f0f0f0" stroke-width="0.3">0,33</text>
<text transform="translate(476.4,702.5) scale(0.56,1)" font-size="16.8" fill="#f0f0f0" stroke="#f0f0f0" stroke-width="0.3">0,31</text>
<text transform="translate(513.1,702.5) scale(0.56,1)" font-size="16.8" fill="#f0f0f0" stroke="#f0f0f0" stroke-width="0.3">0,30</text>
<text transform="translate(549.9,702.5) scale(0.56,1)" font-size="16.8" fill="#f0f0f0" stroke="#f0f0f0" stroke-width="0.3">0,30</text>
<text transform="translate(586.2,702.5) scale(0.56,1)" font-size="16.8" fill="#f0f0f0" stroke="#f0f0f0" stroke-width="0.3">0,27</text>
<text transform="translate(612.8,702.5) scale(0.56,1)" font-size="16.8" fill="#f0f0f0" stroke="#f0f0f0" stroke-width="0.3">0,33</text>
<text transform="translate(656.1,702.5) scale(0.56,1)" font-size="16.8" fill="#f0f0f0" stroke="#f0f0f0" stroke-width="0.3">0,32</text>
<text transform="translate(699.7,702.5) scale(0.56,1)" font-size="16.8" fill="#f0f0f0" stroke="#f0f0f0" stroke-width="0.3">0,24</text>
<text transform="translate(739.4,702.5) scale(0.56,1)" font-size="16.8" fill="#f0f0f0" stroke="#f0f0f0" stroke-width="0.3">0,39</text>
<text transform="translate(773.2,702.5) scale(0.56,1)" font-size="16.8" fill="#f0f0f0" stroke="#f0f0f0" stroke-width="0.3">0,23</text>
<text transform="translate(826.3,702.5) scale(0.56,1)" font-size="16.8" fill="#f0f0f0" stroke="#f0f0f0" stroke-width="0.3">0,32</text>
<text transform="translate(883.5,702.5) scale(0.56,1)" font-size="16.8" fill="#f0f0f0" stroke="#f0f0f0" stroke-width="0.3">0,41</text>
<text transform="translate(918.2,702.5) scale(0.56,1)" font-size="16.8" fill="#f0f0f0" stroke="#f0f0f0" stroke-width="0.3">0,18</text>
<text transform="translate(977.4,702.5) scale(0.56,1)" font-size="16.8" fill="#f0f0f0" stroke="#f0f0f0" stroke-width="0.3">0,30</text>
<text transform="translate(1041.4,702.5) scale(0.56,1)" font-size="16.8" fill="#f0f0f0" stroke="#f0f0f0" stroke-width="0.3">0,18</text>
<text transform="translate(1073.2,702.5) scale(0.56,1)" font-size="16.8" fill="#f0f0f0" stroke="#f0f0f0" stroke-width="0.3">0,46</text>
<text transform="translate(1131.6,702.5) scale(0.56,1)" font-size="16.8" fill="#f0f0f0" stroke="#f0f0f0" stroke-width="0.3">0,43</text>
<text transform="translate(1195.7,702.5) scale(0.56,1)" font-size="16.8" fill="#f0f0f0" stroke="#f0f0f0" stroke-width="0.3">0,13</text>
<text transform="translate(1225.1,702.5) scale(0.56,1)" font-size="16.8" fill="#f0f0f0" stroke="#f0f0f0" stroke-width="0.3">0,45</text>
<text transform="translate(1254.9,702.5) scale(0.56,1)" font-size="16.8" fill="#f0f0f0" stroke="#f0f0f0" stroke-width="0.3">0,32</text>
<text transform="translate(1285.5,702.5) scale(0.56,1)" font-size="16.8" fill="#f0f0f0" stroke="#f0f0f0" stroke-width="0.3">0,46</text>
<text transform="translate(1320.2,702.5) scale(0.56,1)" font-size="16.8" fill="#f0f0f0" stroke="#f0f0f0" stroke-width="0.3">0,23</text>
<text transform="translate(1362.3,702.5) scale(0.56,1)" font-size="16.8" fill="#f0f0f0" stroke="#f0f0f0" stroke-width="0.3">0,24</text>
<text transform="translate(1391.7,702.5) scale(0.56,1)" font-size="16.8" fill="#f0f0f0" stroke="#f0f0f0" stroke-width="0.3">0,36</text>
<text transform="translate(1437.4,702.5) scale(0.56,1)" font-size="16.8" fill="#f0f0f0" stroke="#f0f0f0" stroke-width="0.3">0,57</text>
<text transform="translate(1492.6,702.5) scale(0.56,1)" font-size="16.8" fill="#f0f0f0" stroke="#f0f0f0" stroke-width="0.3">0,12</text>
<text transform="translate(1540.8,702.5) scale(0.56,1)" font-size="16.8" fill="#f0f0f0" stroke="#f0f0f0" stroke-width="0.3">0,35</text>
<text transform="translate(1590.6,702.5) scale(0.56,1)" font-size="16.8" fill="#f0f0f0" stroke="#f0f0f0" stroke-width="0.3">0,21</text>
<text transform="translate(1657.1,702.5) scale(0.56,1)" font-size="16.8" fill="#f0f0f0" stroke="#f0f0f0" stroke-width="0.3">0,49</text>
<text transform="translate(337.0,729.0) scale(0.56,1)" font-size="16.8" fill="#f0f0f0" stroke="#f0f0f0" stroke-width="0.3">Y</text>
<text transform="translate(404.9,729.0) scale(0.56,1)" font-size="16.8" fill="#f0f0f0" stroke="#f0f0f0" stroke-width="0.3">232,67</text>
<text transform="translate(440.5,729.0) scale(0.56,1)" font-size="16.8" fill="#f0f0f0" stroke="#f0f0f0" stroke-width="0.3">189,18</text>
<text transform="translate(476.4,729.0) scale(0.56,1)" font-size="16.8" fill="#f0f0f0" stroke="#f0f0f0" stroke-width="0.3">152,19</text>
<text transform="translate(513.1,729.0) scale(0.56,1)" font-size="16.8" fill="#f0f0f0" stroke="#f0f0f0" stroke-width="0.3">117,11</text>
<text transform="translate(549.9,729.0) scale(0.56,1)" font-size="16.8" fill="#f0f0f0" stroke="#f0f0f0" stroke-width="0.3">81,37</text>
<text transform="translate(586.2,729.0) scale(0.56,1)" font-size="16.8" fill="#f0f0f0" stroke="#f0f0f0" stroke-width="0.3">0,41</text>
<text transform="translate(612.8,729.0) scale(0.56,1)" font-size="16.8" fill="#f0f0f0" stroke="#f0f0f0" stroke-width="0.3">20,76</text>
<text transform="translate(656.1,729.0) scale(0.56,1)" font-size="16.8" fill="#f0f0f0" stroke="#f0f0f0" stroke-width="0.3">82,23</text>
<text transform="translate(699.7,729.0) scale(0.56,1)" font-size="16.8" fill="#f0f0f0" stroke="#f0f0f0" stroke-width="0.3">45,94</text>
<text transform="translate(739.4,729.0) scale(0.56,1)" font-size="16.8" fill="#f0f0f0" stroke="#f0f0f0" stroke-width="0.3">27,06</text>
<text transform="translate(773.2,729.0) scale(0.56,1)" font-size="16.8" fill="#f0f0f0" stroke="#f0f0f0" stroke-width="0.3">59,21</text>
<text transform="translate(826.3,729.0) scale(0.56,1)" font-size="16.8" fill="#f0f0f0" stroke="#f0f0f0" stroke-width="0.3">96,74</text>
<text transform="translate(883.5,729.0) scale(0.56,1)" font-size="16.8" fill="#f0f0f0" stroke="#f0f0f0" stroke-width="0.3">64,33</text>
<text transform="translate(918.2,729.0) scale(0.56,1)" font-size="16.8" fill="#f0f0f0" stroke="#f0f0f0" stroke-width="0.3">30,32</text>
<text transform="translate(977.4,729.0) scale(0.56,1)" font-size="16.8" fill="#f0f0f0" stroke="#f0f0f0" stroke-width="0.3">43,35</text>
<text transform="translate(1041.4,729.0) scale(0.56,1)" font-size="16.8" fill="#f0f0f0" stroke="#f0f0f0" stroke-width="0.3">14,89</text>
<text transform="translate(1073.2,729.0) scale(0.56,1)" font-size="16.8" fill="#f0f0f0" stroke="#f0f0f0" stroke-width="0.3">92,70</text>
<text transform="translate(1131.6,729.0) scale(0.56,1)" font-size="16.8" fill="#f0f0f0" stroke="#f0f0f0" stroke-width="0.3">96,42</text>
<text transform="translate(1195.7,729.0) scale(0.56,1)" font-size="16.8" fill="#f0f0f0" stroke="#f0f0f0" stroke-width="0.3">16,67</text>
<text transform="translate(1225.1,729.0) scale(0.56,1)" font-size="16.8" fill="#f0f0f0" stroke="#f0f0f0" stroke-width="0.3">48,73</text>
<text transform="translate(1254.9,729.0) scale(0.56,1)" font-size="16.8" fill="#f0f0f0" stroke="#f0f0f0" stroke-width="0.3">25,30</text>
<text transform="translate(1285.5,729.0) scale(0.56,1)" font-size="16.8" fill="#f0f0f0" stroke="#f0f0f0" stroke-width="0.3">131,41</text>
<text transform="translate(1320.2,729.0) scale(0.56,1)" font-size="16.8" fill="#f0f0f0" stroke="#f0f0f0" stroke-width="0.3">46,95</text>
<text transform="translate(1362.3,729.0) scale(0.56,1)" font-size="16.8" fill="#f0f0f0" stroke="#f0f0f0" stroke-width="0.3">47,11</text>
<text transform="translate(1391.7,729.0) scale(0.56,1)" font-size="16.8" fill="#f0f0f0" stroke="#f0f0f0" stroke-width="0.3">55,28</text>
<text transform="translate(1437.4,729.0) scale(0.56,1)" font-size="16.8" fill="#f0f0f0" stroke="#f0f0f0" stroke-width="0.3">148,16</text>
<text transform="translate(1492.6,729.0) scale(0.56,1)" font-size="16.8" fill="#f0f0f0" stroke="#f0f0f0" stroke-width="0.3">29,78</text>
<text transform="translate(1540.8,729.0) scale(0.56,1)" font-size="16.8" fill="#f0f0f0" stroke="#f0f0f0" stroke-width="0.3">177,60</text>
<text transform="translate(1590.6,729.0) scale(0.56,1)" font-size="16.8" fill="#f0f0f0" stroke="#f0f0f0" stroke-width="0.3">84,68</text>
<text transform="translate(1657.1,729.0) scale(0.56,1)" font-size="16.8" fill="#f0f0f0" stroke="#f0f0f0" stroke-width="0.3">203,10</text>
<text transform="translate(337.0,755.5) scale(0.56,1)" font-size="16.8" fill="#f0f0f0" stroke="#f0f0f0" stroke-width="0.3">Target x:CIE31</text>
<text transform="translate(404.9,755.5) scale(0.56,1)" font-size="16.8" fill="#f0f0f0" stroke="#f0f0f0" stroke-width="0.3">0,31</text>
<text transform="translate(440.5,755.5) scale(0.56,1)" font-size="16.8" fill="#f0f0f0" stroke="#f0f0f0" stroke-width="0.3">0,31</text>
<text transform="translate(476.4,755.5) scale(0.56,1)" font-size="16.8" fill="#f0f0f0" stroke="#f0f0f0" stroke-width="0.3">0,31</text>
<text transform="translate(513.1,755.5) scale(0.56,1)" font-size="16.8" fill="#f0f0f0" stroke="#f0f0f0" stroke-width="0.3">0,31</text>
<text transform="translate(549.9,755.5) scale(0.56,1)" font-size="16.8" fill="#f0f0f0" stroke="#f0f0f0" stroke-width="0.3">0,31</text>
<text transform="translate(586.2,755.5) scale(0.56,1)" font-size="16.8" fill="#f0f0f0" stroke="#f0f0f0" stroke-width="0.3">0,31</text>
<text transform="translate(612.8,755.5) scale(0.56,1)" font-size="16.8" fill="#f0f0f0" stroke="#f0f0f0" stroke-width="0.3">0,40</text>
<text transform="translate(656.1,755.5) scale(0.56,1)" font-size="16.8" fill="#f0f0f0" stroke="#f0f0f0" stroke-width="0.3">0,38</text>
<text transform="translate(699.7,755.5) scale(0.56,1)" font-size="16.8" fill="#f0f0f0" stroke="#f0f0f0" stroke-width="0.3">0,25</text>
<text transform="translate(739.4,755.5) scale(0.56,1)" font-size="16.8" fill="#f0f0f0" stroke="#f0f0f0" stroke-width="0.3">0,34</text>
<text transform="translate(773.2,755.5) scale(0.56,1)" font-size="16.8" fill="#f0f0f0" stroke="#f0f0f0" stroke-width="0.3">0,27</text>
<text transform="translate(826.3,755.5) scale(0.56,1)" font-size="16.8" fill="#f0f0f0" stroke="#f0f0f0" stroke-width="0.3">0,26</text>
<text transform="translate(883.5,755.5) scale(0.56,1)" font-size="16.8" fill="#f0f0f0" stroke="#f0f0f0" stroke-width="0.3">0,51</text>
<text transform="translate(918.2,755.5) scale(0.56,1)" font-size="16.8" fill="#f0f0f0" stroke="#f0f0f0" stroke-width="0.3">0,22</text>
<text transform="translate(977.4,755.5) scale(0.56,1)" font-size="16.8" fill="#f0f0f0" stroke="#f0f0f0" stroke-width="0.3">0,46</text>
<text transform="translate(1041.4,755.5) scale(0.56,1)" font-size="16.8" fill="#f0f0f0" stroke="#f0f0f0" stroke-width="0.3">0,29</text>
<text transform="translate(1073.2,755.5) scale(0.56,1)" font-size="16.8" fill="#f0f0f0" stroke="#f0f0f0" stroke-width="0.3">0,38</text>
<text transform="translate(1131.6,755.5) scale(0.56,1)" font-size="16.8" fill="#f0f0f0" stroke="#f0f0f0" stroke-width="0.3">0,47</text>
<text transform="translate(1195.7,755.5) scale(0.56,1)" font-size="16.8" fill="#f0f0f0" stroke="#f0f0f0" stroke-width="0.3">0,19</text>
<text transform="translate(1225.1,755.5) scale(0.56,1)" font-size="16.8" fill="#f0f0f0" stroke="#f0f0f0" stroke-width="0.3">0,31</text>
<text transform="translate(1254.9,755.5) scale(0.56,1)" font-size="16.8" fill="#f0f0f0" stroke="#f0f0f0" stroke-width="0.3">0,54</text>
<text transform="translate(1285.5,755.5) scale(0.56,1)" font-size="16.8" fill="#f0f0f0" stroke="#f0f0f0" stroke-width="0.3">0,45</text>
<text transform="translate(1320.2,755.5) scale(0.56,1)" font-size="16.8" fill="#f0f0f0" stroke="#f0f0f0" stroke-width="0.3">0,37</text>
<text transform="translate(1362.3,755.5) scale(0.56,1)" font-size="16.8" fill="#f0f0f0" stroke="#f0f0f0" stroke-width="0.3">0,21</text>
<text transform="translate(1391.7,755.5) scale(0.56,1)" font-size="16.8" fill="#f0f0f0" stroke="#f0f0f0" stroke-width="0.3">0,64</text>
<text transform="translate(1437.4,755.5) scale(0.56,1)" font-size="16.8" fill="#f0f0f0" stroke="#f0f0f0" stroke-width="0.3">0,30</text>
<text transform="translate(1492.6,755.5) scale(0.56,1)" font-size="16.8" fill="#f0f0f0" stroke="#f0f0f0" stroke-width="0.3">0,15</text>
<text transform="translate(1540.8,755.5) scale(0.56,1)" font-size="16.8" fill="#f0f0f0" stroke="#f0f0f0" stroke-width="0.3">0,22</text>
<text transform="translate(1590.6,755.5) scale(0.56,1)" font-size="16.8" fill="#f0f0f0" stroke="#f0f0f0" stroke-width="0.3">0,32</text>
<text transform="translate(1657.1,755.5) scale(0.56,1)" font-size="16.8" fill="#f0f0f0" stroke="#f0f0f0" stroke-width="0.3">0,42</text>
<text transform="translate(337.0,782.0) scale(0.56,1)" font-size="16.8" fill="#f0f0f0" stroke="#f0f0f0" stroke-width="0.3">Target y:CIE31</text>
<text transform="translate(404.9,782.0) scale(0.56,1)" font-size="16.8" fill="#f0f0f0" stroke="#f0f0f0" stroke-width="0.3">0,33</text>
<text transform="translate(440.5,782.0) scale(0.56,1)" font-size="16.8" fill="#f0f0f0" stroke="#f0f0f0" stroke-width="0.3">0,33</text>
<text transform="translate(476.4,782.0) scale(0.56,1)" font-size="16.8" fill="#f0f0f0" stroke="#f0f0f0" stroke-width="0.3">0,33</text>
<text transform="translate(513.1,782.0) scale(0.56,1)" font-size="16.8" fill="#f0f0f0" stroke="#f0f0f0" stroke-width="0.3">0,33</text>
<text transform="translate(549.9,782.0) scale(0.56,1)" font-size="16.8" fill="#f0f0f0" stroke="#f0f0f0" stroke-width="0.3">0,33</text>
<text transform="translate(586.2,782.0) scale(0.56,1)" font-size="16.8" fill="#f0f0f0" stroke="#f0f0f0" stroke-width="0.3">0,33</text>
<text transform="translate(612.8,782.0) scale(0.56,1)" font-size="16.8" fill="#f0f0f0" stroke="#f0f0f0" stroke-width="0.3">0,36</text>
<text transform="translate(656.1,782.0) scale(0.56,1)" font-size="16.8" fill="#f0f0f0" stroke="#f0f0f0" stroke-width="0.3">0,36</text>
<text transform="translate(699.7,782.0) scale(0.56,1)" font-size="16.8" fill="#f0f0f0" stroke="#f0f0f0" stroke-width="0.3">0,27</text>
<text transform="translate(739.4,782.0) scale(0.56,1)" font-size="16.8" fill="#f0f0f0" stroke="#f0f0f0" stroke-width="0.3">0,43</text>
<text transform="translate(773.2,782.0) scale(0.56,1)" font-size="16.8" fill="#f0f0f0" stroke="#f0f0f0" stroke-width="0.3">0,25</text>
<text transform="translate(826.3,782.0) scale(0.56,1)" font-size="16.8" fill="#f0f0f0" stroke="#f0f0f0" stroke-width="0.3">0,36</text>
<text transform="translate(883.5,782.0) scale(0.56,1)" font-size="16.8" fill="#f0f0f0" stroke="#f0f0f0" stroke-width="0.3">0,41</text>
<text transform="translate(918.2,782.0) scale(0.56,1)" font-size="16.8" fill="#f0f0f0" stroke="#f0f0f0" stroke-width="0.3">0,19</text>
<text transform="translate(977.4,782.0) scale(0.56,1)" font-size="16.8" fill="#f0f0f0" stroke="#f0f0f0" stroke-width="0.3">0,31</text>
<text transform="translate(1041.4,782.0) scale(0.56,1)" font-size="16.8" fill="#f0f0f0" stroke="#f0f0f0" stroke-width="0.3">0,22</text>
<text transform="translate(1073.2,782.0) scale(0.56,1)" font-size="16.8" fill="#f0f0f0" stroke="#f0f0f0" stroke-width="0.3">0,49</text>
<text transform="translate(1131.6,782.0) scale(0.56,1)" font-size="16.8" fill="#f0f0f0" stroke="#f0f0f0" stroke-width="0.3">0,44</text>
<text transform="translate(1195.7,782.0) scale(0.56,1)" font-size="16.8" fill="#f0f0f0" stroke="#f0f0f0" stroke-width="0.3">0,14</text>
<text transform="translate(1225.1,782.0) scale(0.56,1)" font-size="16.8" fill="#f0f0f0" stroke="#f0f0f0" stroke-width="0.3">0,49</text>
<text transform="translate(1254.9,782.0) scale(0.56,1)" font-size="16.8" fill="#f0f0f0" stroke="#f0f0f0" stroke-width="0.3">0,32</text>
<text transform="translate(1285.5,782.0) scale(0.56,1)" font-size="16.8" fill="#f0f0f0" stroke="#f0f0f0" stroke-width="0.3">0,47</text>
<text transform="translate(1320.2,782.0) scale(0.56,1)" font-size="16.8" fill="#f0f0f0" stroke="#f0f0f0" stroke-width="0.3">0,25</text>
<text transform="translate(1362.3,782.0) scale(0.56,1)" font-size="16.8" fill="#f0f0f0" stroke="#f0f0f0" stroke-width="0.3">0,27</text>
<text transform="translate(1391.7,782.0) scale(0.56,1)" font-size="16.8" fill="#f0f0f0" stroke="#f0f0f0" stroke-width="0.3">0,33</text>
<text transform="translate(1437.4,782.0) scale(0.56,1)" font-size="16.8" fill="#f0f0f0" stroke="#f0f0f0" stroke-width="0.3">0,60</text>
<text transform="translate(1492.6,782.0) scale(0.56,1)" font-size="16.8" fill="#f0f0f0" stroke="#f0f0f0" stroke-width="0.3">0,06</text>
<text transform="translate(1540.8,782.0) scale(0.56,1)" font-size="16.8" fill="#f0f0f0" stroke="#f0f0f0" stroke-width="0.3">0,33</text>
<text transform="translate(1590.6,782.0) scale(0.56,1)" font-size="16.8" fill="#f0f0f0" stroke="#f0f0f0" stroke-width="0.3">0,15</text>
<text transform="translate(1657.1,782.0) scale(0.56,1)" font-size="16.8" fill="#f0f0f0" stroke="#f0f0f0" stroke-width="0.3">0,51</text>
<text transform="translate(337.0,808.5) scale(0.56,1)" font-size="16.8" fill="#f0f0f0" stroke="#f0f0f0" stroke-width="0.3">Target Y</text>
<text transform="translate(404.9,808.5) scale(0.56,1)" font-size="16.8" fill="#f0f0f0" stroke="#f0f0f0" stroke-width="0.3">232,67</text>
<text transform="translate(440.5,808.5) scale(0.56,1)" font-size="16.8" fill="#f0f0f0" stroke="#f0f0f0" stroke-width="0.3">184,11</text>
<text transform="translate(476.4,808.5) scale(0.56,1)" font-size="16.8" fill="#f0f0f0" stroke="#f0f0f0" stroke-width="0.3">148,35</text>
<text transform="translate(513.1,808.5) scale(0.56,1)" font-size="16.8" fill="#f0f0f0" stroke="#f0f0f0" stroke-width="0.3">114,25</text>
<text transform="translate(549.9,808.5) scale(0.56,1)" font-size="16.8" fill="#f0f0f0" stroke="#f0f0f0" stroke-width="0.3">79,55</text>
<text transform="translate(586.2,808.5) scale(0.56,1)" font-size="16.8" fill="#f0f0f0" stroke="#f0f0f0" stroke-width="0.3">0,00</text>
<text transform="translate(612.8,808.5) scale(0.56,1)" font-size="16.8" fill="#f0f0f0" stroke="#f0f0f0" stroke-width="0.3">23,44</text>
<text transform="translate(656.1,808.5) scale(0.56,1)" font-size="16.8" fill="#f0f0f0" stroke="#f0f0f0" stroke-width="0.3">81,19</text>
<text transform="translate(699.7,808.5) scale(0.56,1)" font-size="16.8" fill="#f0f0f0" stroke="#f0f0f0" stroke-width="0.3">43,51</text>
<text transform="translate(739.4,808.5) scale(0.56,1)" font-size="16.8" fill="#f0f0f0" stroke="#f0f0f0" stroke-width="0.3">30,32</text>
<text transform="translate(773.2,808.5) scale(0.56,1)" font-size="16.8" fill="#f0f0f0" stroke="#f0f0f0" stroke-width="0.3">54,25</text>
<text transform="translate(826.3,808.5) scale(0.56,1)" font-size="16.8" fill="#f0f0f0" stroke="#f0f0f0" stroke-width="0.3">97,43</text>
<text transform="translate(883.5,808.5) scale(0.56,1)" font-size="16.8" fill="#f0f0f0" stroke="#f0f0f0" stroke-width="0.3">65,96</text>
<text transform="translate(918.2,808.5) scale(0.56,1)" font-size="16.8" fill="#f0f0f0" stroke="#f0f0f0" stroke-width="0.3">27,35</text>
<text transform="translate(977.4,808.5) scale(0.56,1)" font-size="16.8" fill="#f0f0f0" stroke="#f0f0f0" stroke-width="0.3">43,45</text>
<text transform="translate(1041.4,808.5) scale(0.56,1)" font-size="16.8" fill="#f0f0f0" stroke="#f0f0f0" stroke-width="0.3">15,53</text>
<text transform="translate(1073.2,808.5) scale(0.56,1)" font-size="16.8" fill="#f0f0f0" stroke="#f0f0f0" stroke-width="0.3">99,48</text>
<text transform="translate(1131.6,808.5) scale(0.56,1)" font-size="16.8" fill="#f0f0f0" stroke="#f0f0f0" stroke-width="0.3">98,91</text>
<text transform="translate(1195.7,808.5) scale(0.56,1)" font-size="16.8" fill="#f0f0f0" stroke="#f0f0f0" stroke-width="0.3">14,53</text>
<text transform="translate(1225.1,808.5) scale(0.56,1)" font-size="16.8" fill="#f0f0f0" stroke="#f0f0f0" stroke-width="0.3">53,45</text>
<text transform="translate(1254.9,808.5) scale(0.56,1)" font-size="16.8" fill="#f0f0f0" stroke="#f0f0f0" stroke-width="0.3">27,13</text>
<text transform="translate(1285.5,808.5) scale(0.56,1)" font-size="16.8" fill="#f0f0f0" stroke="#f0f0f0" stroke-width="0.3">137,19</text>
<text transform="translate(1320.2,808.5) scale(0.56,1)" font-size="16.8" fill="#f0f0f0" stroke="#f0f0f0" stroke-width="0.3">43,80</text>
<text transform="translate(1362.3,808.5) scale(0.56,1)" font-size="16.8" fill="#f0f0f0" stroke="#f0f0f0" stroke-width="0.3">45,18</text>
<text transform="translate(1391.7,808.5) scale(0.56,1)" font-size="16.8" fill="#f0f0f0" stroke="#f0f0f0" stroke-width="0.3">49,48</text>
<text transform="translate(1437.4,808.5) scale(0.56,1)" font-size="16.8" fill="#f0f0f0" stroke="#f0f0f0" stroke-width="0.3">166,40</text>
<text transform="translate(1492.6,808.5) scale(0.56,1)" font-size="16.8" fill="#f0f0f0" stroke="#f0f0f0" stroke-width="0.3">16,80</text>
<text transform="translate(1540.8,808.5) scale(0.56,1)" font-size="16.8" fill="#f0f0f0" stroke="#f0f0f0" stroke-width="0.3">183,19</text>
<text transform="translate(1590.6,808.5) scale(0.56,1)" font-size="16.8" fill="#f0f0f0" stroke="#f0f0f0" stroke-width="0.3">66,27</text>
<text transform="translate(1657.1,808.5) scale(0.56,1)" font-size="16.8" fill="#f0f0f0" stroke="#f0f0f0" stroke-width="0.3">215,87</text>
<text transform="translate(337.0,835.0) scale(0.56,1)" font-size="16.8" fill="#f0f0f0" stroke="#f0f0f0" stroke-width="0.3">ΔE 2000</text>
<text transform="translate(404.9,835.0) scale(0.56,1)" font-size="16.8" fill="#f0f0f0" stroke="#f0f0f0" stroke-width="0.3">9,78</text>
<text transform="translate(440.5,835.0) scale(0.56,1)" font-size="16.8" fill="#f0f0f0" stroke="#f0f0f0" stroke-width="0.3">5,26</text>
<text transform="translate(476.4,835.0) scale(0.56,1)" font-size="16.8" fill="#f0f0f0" stroke="#f0f0f0" stroke-width="0.3">7,30</text>
<text transform="translate(513.1,835.0) scale(0.56,1)" font-size="16.8" fill="#f0f0f0" stroke="#f0f0f0" stroke-width="0.3">9,14</text>
<text transform="translate(549.9,835.0) scale(0.56,1)" font-size="16.8" fill="#f0f0f0" stroke="#f0f0f0" stroke-width="0.3">10,24</text>
<text transform="translate(586.2,835.0) scale(0.56,1)" font-size="16.8" fill="#f0f0f0" stroke="#f0f0f0" stroke-width="0.3">1,97</text>
<text transform="translate(612.8,835.0) scale(0.56,1)" font-size="16.8" fill="#f0f0f0" stroke="#f0f0f0" stroke-width="0.3">7,21</text>
<text transform="translate(656.1,835.0) scale(0.56,1)" font-size="16.8" fill="#f0f0f0" stroke="#f0f0f0" stroke-width="0.3">10,65</text>
<text transform="translate(699.7,835.0) scale(0.56,1)" font-size="16.8" fill="#f0f0f0" stroke="#f0f0f0" stroke-width="0.3">4,31</text>
<text transform="translate(739.4,835.0) scale(0.56,1)" font-size="16.8" fill="#f0f0f0" stroke="#f0f0f0" stroke-width="0.3">6,00</text>
<text transform="translate(773.2,835.0) scale(0.56,1)" font-size="16.8" fill="#f0f0f0" stroke="#f0f0f0" stroke-width="0.3">7,48</text>
<text transform="translate(826.3,835.0) scale(0.56,1)" font-size="16.8" fill="#f0f0f0" stroke="#f0f0f0" stroke-width="0.3">10,43</text>
<text transform="translate(883.5,835.0) scale(0.56,1)" font-size="16.8" fill="#f0f0f0" stroke="#f0f0f0" stroke-width="0.3">3,91</text>
<text transform="translate(918.2,835.0) scale(0.56,1)" font-size="16.8" fill="#f0f0f0" stroke="#f0f0f0" stroke-width="0.3">5,04</text>
<text transform="translate(977.4,835.0) scale(0.56,1)" font-size="16.8" fill="#f0f0f0" stroke="#f0f0f0" stroke-width="0.3">7,29</text>
<text transform="translate(1041.4,835.0) scale(0.56,1)" font-size="16.8" fill="#f0f0f0" stroke="#f0f0f0" stroke-width="0.3">7,16</text>
<text transform="translate(1073.2,835.0) scale(0.56,1)" font-size="16.8" fill="#f0f0f0" stroke="#f0f0f0" stroke-width="0.3">4,15</text>
<text transform="translate(1131.6,835.0) scale(0.56,1)" font-size="16.8" fill="#f0f0f0" stroke="#f0f0f0" stroke-width="0.3">3,38</text>
<text transform="translate(1195.7,835.0) scale(0.56,1)" font-size="16.8" fill="#f0f0f0" stroke="#f0f0f0" stroke-width="0.3">4,70</text>
<text transform="translate(1225.1,835.0) scale(0.56,1)" font-size="16.8" fill="#f0f0f0" stroke="#f0f0f0" stroke-width="0.3">5,06</text>
<text transform="translate(1254.9,835.0) scale(0.56,1)" font-size="16.8" fill="#f0f0f0" stroke="#f0f0f0" stroke-width="0.3">4,57</text>
<text transform="translate(1285.5,835.0) scale(0.56,1)" font-size="16.8" fill="#f0f0f0" stroke="#f0f0f0" stroke-width="0.3">2,80</text>
<text transform="translate(1320.2,835.0) scale(0.56,1)" font-size="16.8" fill="#f0f0f0" stroke="#f0f0f0" stroke-width="0.3">7,65</text>
<text transform="translate(1362.3,835.0) scale(0.56,1)" font-size="16.8" fill="#f0f0f0" stroke="#f0f0f0" stroke-width="0.3">6,94</text>
<text transform="translate(1391.7,835.0) scale(0.56,1)" font-size="16.8" fill="#f0f0f0" stroke="#f0f0f0" stroke-width="0.3">5,20</text>
<text transform="translate(1437.4,835.0) scale(0.56,1)" font-size="16.8" fill="#f0f0f0" stroke="#f0f0f0" stroke-width="0.3">5,06</text>
<text transform="translate(1492.6,835.0) scale(0.56,1)" font-size="16.8" fill="#f0f0f0" stroke="#f0f0f0" stroke-width="0.3">18,77</text>
<text transform="translate(1540.8,835.0) scale(0.56,1)" font-size="16.8" fill="#f0f0f0" stroke="#f0f0f0" stroke-width="0.3">5,23</text>
<text transform="translate(1590.6,835.0) scale(0.56,1)" font-size="16.8" fill="#f0f0f0" stroke="#f0f0f0" stroke-width="0.3">9,84</text>
<text transform="translate(1657.1,835.0) scale(0.56,1)" font-size="16.8" fill="#f0f0f0" stroke="#f0f0f0" stroke-width="0.3">3,50</text>
<text x="9.2" y="673.3" font-size="28.0" fill="#f2f2f2" textLength="227.0" lengthAdjust="spacingAndGlyphs" stroke="#f2f2f2" stroke-width="0.62">Current Reading</text>
<text x="10.5" y="715.8" font-size="24.2" fill="#f2f2f2" textLength="105.0" lengthAdjust="spacingAndGlyphs" stroke="#f2f2f2" stroke-width="0.53">x: 0,4247</text>
<text x="10.5" y="757.8" font-size="24.2" fill="#f2f2f2" textLength="106.0" lengthAdjust="spacingAndGlyphs" stroke="#f2f2f2" stroke-width="0.53">y: 0,4898</text>
<text x="10.5" y="799.7" font-size="24.2" fill="#f2f2f2" textLength="114.0" lengthAdjust="spacingAndGlyphs" stroke="#f2f2f2" stroke-width="0.53">fL: 59,279</text>
<text x="10.5" y="841.6" font-size="24.2" fill="#f2f2f2" textLength="178.0" lengthAdjust="spacingAndGlyphs" stroke="#f2f2f2" stroke-width="0.53">cd/m²: 203,104</text>
<defs><linearGradient id="bg0"><stop offset="0" stop-color="#ffff4c"/><stop offset=".18" stop-color="#ffff00"/><stop offset=".55" stop-color="#ffff00"/><stop offset="1" stop-color="#616100"/></linearGradient><linearGradient id="bg1"><stop offset="0" stop-color="#ff4cff"/><stop offset=".18" stop-color="#ff00ff"/><stop offset=".55" stop-color="#ff00ff"/><stop offset="1" stop-color="#610061"/></linearGradient><linearGradient id="bg2"><stop offset="0" stop-color="#4cffff"/><stop offset=".18" stop-color="#00ffff"/><stop offset=".55" stop-color="#00ffff"/><stop offset="1" stop-color="#006161"/></linearGradient><linearGradient id="bg3"><stop offset="0" stop-color="#4c4cff"/><stop offset=".18" stop-color="#0000ff"/><stop offset=".55" stop-color="#0000ff"/><stop offset="1" stop-color="#000061"/></linearGradient><linearGradient id="bg4"><stop offset="0" stop-color="#4cff4c"/><stop offset=".18" stop-color="#00ff00"/><stop offset=".55" stop-color="#00ff00"/><stop offset="1" stop-color="#006100"/></linearGradient><linearGradient id="bg5"><stop offset="0" stop-color="#ff4c4c"/><stop offset=".18" stop-color="#ff0000"/><stop offset=".55" stop-color="#ff0000"/><stop offset="1" stop-color="#610000"/></linearGradient><linearGradient id="bg6"><stop offset="0" stop-color="#52acc4"/><stop offset=".18" stop-color="#0888aa"/><stop offset=".55" stop-color="#0888aa"/><stop offset="1" stop-color="#033441"/></linearGradient><linearGradient id="bg7"><stop offset="0" stop-color="#cf88b8"/><stop offset=".18" stop-color="#bb5599"/><stop offset=".55" stop-color="#bb5599"/><stop offset="1" stop-color="#47203a"/></linearGradient><linearGradient id="bg8"><stop offset="0" stop-color="#efd360"/><stop offset=".18" stop-color="#e8c01c"/><stop offset=".55" stop-color="#e8c01c"/><stop offset="1" stop-color="#58490b"/></linearGradient><linearGradient id="bg9"><stop offset="0" stop-color="#c86e74"/><stop offset=".18" stop-color="#b03038"/><stop offset=".55" stop-color="#b03038"/><stop offset="1" stop-color="#431215"/></linearGradient><linearGradient id="bg10"><stop offset="0" stop-color="#7eb480"/><stop offset=".18" stop-color="#46944a"/><stop offset=".55" stop-color="#46944a"/><stop offset="1" stop-color="#1b381c"/></linearGradient><linearGradient id="bg11"><stop offset="0" stop-color="#757bbc"/><stop offset=".18" stop-color="#3a42a0"/><stop offset=".55" stop-color="#3a42a0"/><stop offset="1" stop-color="#16193d"/></linearGradient><linearGradient id="bg12"><stop offset="0" stop-color="#efc26e"/><stop offset=".18" stop-color="#e8a830"/><stop offset=".55" stop-color="#e8a830"/><stop offset="1" stop-color="#584012"/></linearGradient><linearGradient id="bg13"><stop offset="0" stop-color="#bcd380"/><stop offset=".18" stop-color="#a0c04a"/><stop offset=".55" stop-color="#a0c04a"/><stop offset="1" stop-color="#3d491c"/></linearGradient><linearGradient id="bg14"><stop offset="0" stop-color="#90799b"/><stop offset=".18" stop-color="#604070"/><stop offset=".55" stop-color="#604070"/><stop offset="1" stop-color="#24182b"/></linearGradient><linearGradient id="bg15"><stop offset="0" stop-color="#d88c95"/><stop offset=".18" stop-color="#c85a68"/><stop offset=".55" stop-color="#c85a68"/><stop offset="1" stop-color="#4c2228"/></linearGradient><linearGradient id="bg16"><stop offset="0" stop-color="#8691c9"/><stop offset=".18" stop-color="#5262b2"/><stop offset=".55" stop-color="#5262b2"/><stop offset="1" stop-color="#1f2544"/></linearGradient><linearGradient id="bg17"><stop offset="0" stop-color="#e9a66e"/><stop offset=".18" stop-color="#e08030"/><stop offset=".55" stop-color="#e08030"/><stop offset="1" stop-color="#553112"/></linearGradient><linearGradient id="bg18"><stop offset="0" stop-color="#95d4c4"/><stop offset=".18" stop-color="#68c2aa"/><stop offset=".55" stop-color="#68c2aa"/><stop offset="1" stop-color="#284a41"/></linearGradient><linearGradient id="bg19"><stop offset="0" stop-color="#aaaad3"/><stop offset=".18" stop-color="#8585c0"/><stop offset=".55" stop-color="#8585c0"/><stop offset="1" stop-color="#333349"/></linearGradient><linearGradient id="bg20"><stop offset="0" stop-color="#8c9b7f"/><stop offset=".18" stop-color="#5a7048"/><stop offset=".55" stop-color="#5a7048"/><stop offset="1" stop-color="#222b1b"/></linearGradient><linearGradient id="bg21"><stop offset="0" stop-color="#91a8c8"/><stop offset=".18" stop-color="#6282b0"/><stop offset=".55" stop-color="#6282b0"/><stop offset="1" stop-color="#253143"/></linearGradient><linearGradient id="bg22"><stop offset="0" stop-color="#d8b8ad"/><stop offset=".18" stop-color="#c8998a"/><stop offset=".55" stop-color="#c8998a"/><stop offset="1" stop-color="#4c3a34"/></linearGradient><linearGradient id="bg23"><stop offset="0" stop-color="#a0877e"/><stop offset=".18" stop-color="#785446"/><stop offset=".55" stop-color="#785446"/><stop offset="1" stop-color="#2e201b"/></linearGradient><linearGradient id="bg24"><stop offset="0" stop-color="#505050"/><stop offset=".18" stop-color="#050505"/><stop offset=".55" stop-color="#050505"/><stop offset="1" stop-color="#020202"/></linearGradient><linearGradient id="bg25"><stop offset="0" stop-color="#bcbcbc"/><stop offset=".18" stop-color="#a0a0a0"/><stop offset=".55" stop-color="#a0a0a0"/><stop offset="1" stop-color="#3d3d3d"/></linearGradient><linearGradient id="bg26"><stop offset="0" stop-color="#cdcdcd"/><stop offset=".18" stop-color="#b8b8b8"/><stop offset=".55" stop-color="#b8b8b8"/><stop offset="1" stop-color="#464646"/></linearGradient><linearGradient id="bg27"><stop offset="0" stop-color="#dddddd"/><stop offset=".18" stop-color="#cfcfcf"/><stop offset=".55" stop-color="#cfcfcf"/><stop offset="1" stop-color="#4f4f4f"/></linearGradient><linearGradient id="bg28"><stop offset="0" stop-color="#ececec"/><stop offset=".18" stop-color="#e4e4e4"/><stop offset=".55" stop-color="#e4e4e4"/><stop offset="1" stop-color="#575757"/></linearGradient><linearGradient id="bg29"><stop offset="0" stop-color="#ffffff"/><stop offset=".18" stop-color="#ffffff"/><stop offset=".55" stop-color="#ffffff"/><stop offset="1" stop-color="#616161"/></linearGradient><linearGradient id="dbar" x1="0" y1="0" x2="0" y2="1"><stop offset="0" stop-color="#ffff55"/><stop offset=".15" stop-color="#ffff00"/><stop offset=".42" stop-color="#ffff00"/><stop offset=".72" stop-color="#cccc00"/><stop offset=".9" stop-color="#8a8800"/><stop offset="1" stop-color="#5c5a00"/></linearGradient><clipPath id="pclip"><rect x="410" y="422" width="589" height="187"/></clipPath><clipPath id="hs"><path d="M1185.3 572.2C1185.2 572.2 1185.1 572.3 1185.0 572.3C1184.9 572.3 1184.8 572.3 1184.7 572.3C1184.5 572.4 1184.4 572.4 1184.1 572.3C1183.9 572.3 1183.5 572.3 1183.2 572.2C1182.9 572.1 1182.6 571.9 1182.3 571.8C1182.0 571.6 1181.7 571.4 1181.2 571.1C1180.8 570.8 1180.3 570.5 1179.7 570.1C1179.1 569.7 1178.5 569.2 1177.7 568.7C1177.0 568.2 1176.2 567.7 1175.2 567.0C1174.2 566.3 1173.0 565.6 1171.7 564.7C1170.4 563.8 1169.0 562.9 1167.3 561.7C1165.7 560.5 1163.9 559.2 1161.9 557.5C1159.9 555.8 1157.9 554.3 1155.3 551.5C1152.7 548.7 1149.8 545.5 1146.4 540.8C1143.1 536.2 1139.4 531.0 1135.2 523.6C1130.9 516.2 1126.2 507.6 1120.9 496.3C1115.6 485.0 1109.3 472.0 1103.4 455.9C1097.4 439.8 1091.1 420.8 1085.3 399.8C1079.4 378.8 1073.1 354.0 1068.3 329.8C1063.4 305.7 1058.9 279.1 1056.4 255.1C1053.8 231.1 1052.3 206.9 1053.0 185.9C1053.8 164.9 1056.3 144.8 1060.8 129.2C1065.3 113.6 1072.4 100.7 1080.2 92.5C1088.0 84.2 1098.0 80.9 1107.7 79.5C1117.5 78.1 1128.3 81.3 1138.7 84.0C1149.1 86.8 1160.0 91.7 1170.2 96.1C1180.4 100.5 1190.2 105.4 1199.9 110.5C1209.6 115.7 1219.0 121.1 1228.4 126.8C1237.8 132.4 1247.2 138.5 1256.5 144.6C1265.9 150.7 1275.1 157.1 1284.3 163.6C1293.6 170.1 1302.8 176.8 1312.1 183.5C1321.3 190.2 1330.7 197.1 1339.9 203.9C1349.1 210.8 1358.4 217.8 1367.6 224.7C1376.8 231.6 1386.0 238.6 1395.1 245.4C1404.1 252.3 1413.2 259.2 1422.0 265.9C1430.9 272.7 1439.7 279.4 1448.2 285.9C1456.8 292.4 1465.2 298.9 1473.3 305.1C1481.4 311.2 1489.4 317.3 1496.9 323.0C1504.5 328.8 1511.7 334.4 1518.5 339.5C1525.2 344.6 1531.3 349.3 1537.2 353.7C1543.0 358.2 1548.6 362.5 1553.7 366.3C1558.7 370.1 1563.2 373.5 1567.3 376.6C1571.5 379.8 1575.1 382.6 1578.4 385.1C1581.8 387.7 1584.6 389.9 1587.3 391.9C1590.0 393.9 1592.2 395.7 1594.4 397.3C1596.5 398.9 1598.3 400.3 1600.0 401.6C1601.8 402.9 1603.3 404.1 1604.8 405.2C1606.2 406.3 1607.5 407.3 1608.7 408.2C1609.8 409.1 1610.9 409.8 1611.8 410.5C1612.7 411.2 1613.4 411.8 1614.1 412.3C1614.8 412.8 1615.4 413.3 1615.9 413.7C1616.4 414.1 1616.7 414.3 1617.2 414.7C1617.7 415.1 1618.3 415.5 1618.8 415.9C1619.2 416.2 1619.5 416.4 1619.9 416.7C1620.2 417.0 1620.7 417.4 1620.9 417.5Z"/></clipPath><clipPath id="tri"><path d="M1547.3 379.0L1283.1 218.5L1166.5 539.5Z"/></clipPath><filter id="blur" x="-5%" y="-5%" width="110%" height="110%"><feGaussianBlur stdDeviation="4"/></filter><filter id="blur2" x="-5%" y="-5%" width="110%" height="110%"><feGaussianBlur stdDeviation="3"/></filter><linearGradient id="insTop" gradientUnits="userSpaceOnUse" x1="1504.0" y1="86.2" x2="1690.0" y2="237.8"><stop offset="0" stop-color="#5a9a00"/><stop offset=".5" stop-color="#9a9a08"/><stop offset="1" stop-color="#9a6400"/></linearGradient><linearGradient id="insBot" gradientUnits="userSpaceOnUse" x1="1504.0" y1="86.2" x2="1690.0" y2="237.8"><stop offset="0" stop-color="#a0ff00"/><stop offset=".5" stop-color="#ffff14"/><stop offset="1" stop-color="#ffa400"/></linearGradient></defs>
</svg></body></html>
